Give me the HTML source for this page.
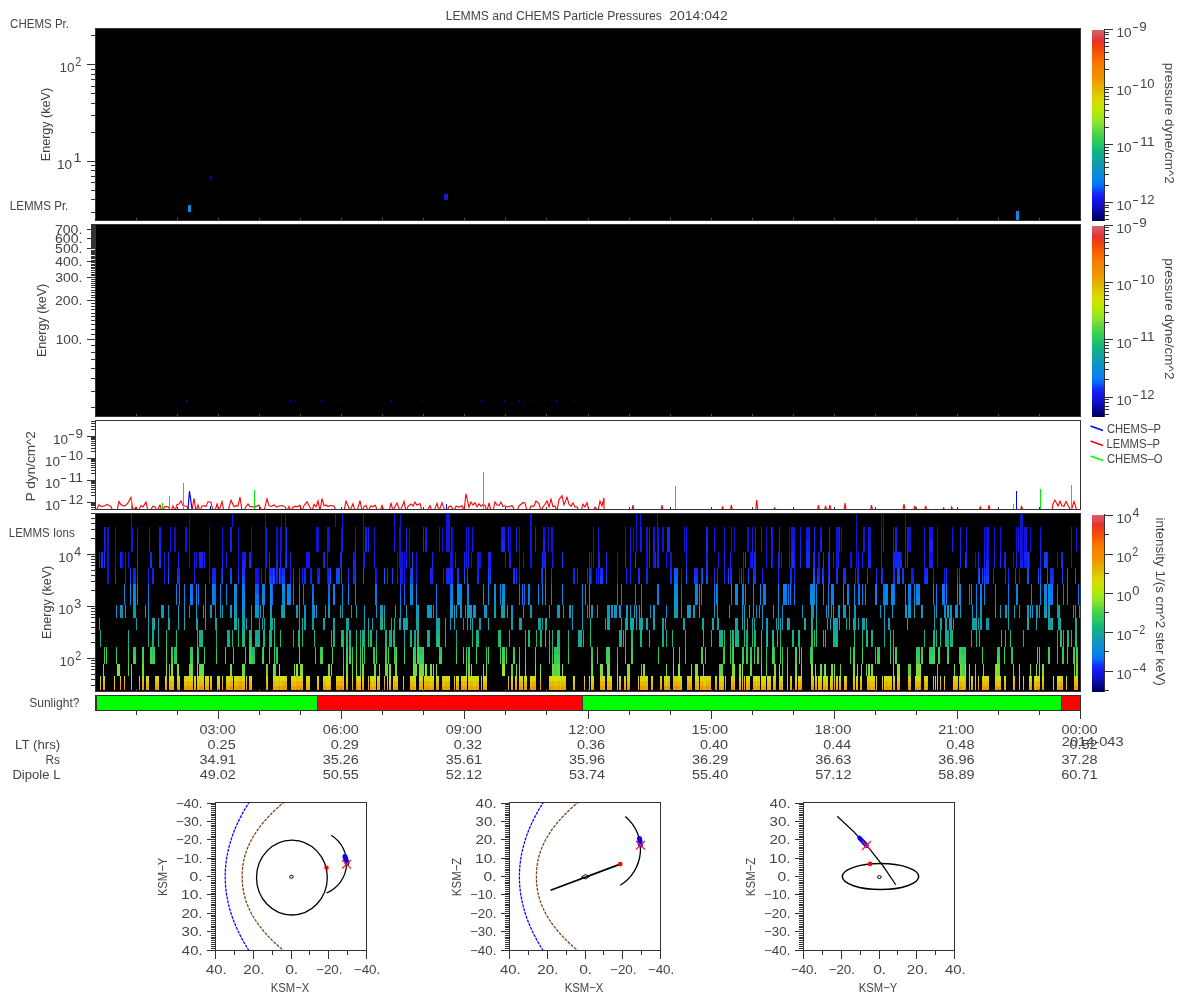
<!DOCTYPE html>
<html><head><meta charset="utf-8"><style>
html,body{margin:0;padding:0;background:#fff;width:1200px;height:1000px;overflow:hidden}
svg{display:block;will-change:transform}
text{font-family:"Liberation Sans",sans-serif}
</style></head><body>
<svg width="1200" height="1000" viewBox="0 0 1200 1000" shape-rendering="crispEdges">
<defs><linearGradient id="cmap" x1="0" y1="0" x2="0" y2="1"><stop offset="0.0000" stop-color="#d8606a"/><stop offset="0.0316" stop-color="#e04850"/><stop offset="0.0553" stop-color="#e83030"/><stop offset="0.0842" stop-color="#f04010"/><stop offset="0.1105" stop-color="#f05000"/><stop offset="0.1368" stop-color="#f86000"/><stop offset="0.1632" stop-color="#f87000"/><stop offset="0.1895" stop-color="#f88000"/><stop offset="0.2447" stop-color="#f09000"/><stop offset="0.2842" stop-color="#e8a800"/><stop offset="0.3237" stop-color="#e0c000"/><stop offset="0.3632" stop-color="#d8d800"/><stop offset="0.3895" stop-color="#d0e000"/><stop offset="0.4289" stop-color="#b8e800"/><stop offset="0.4684" stop-color="#98e828"/><stop offset="0.4947" stop-color="#84e030"/><stop offset="0.5237" stop-color="#60d840"/><stop offset="0.5632" stop-color="#38d050"/><stop offset="0.5947" stop-color="#28c860"/><stop offset="0.6289" stop-color="#10b878"/><stop offset="0.6684" stop-color="#10a898"/><stop offset="0.7079" stop-color="#1098b8"/><stop offset="0.7474" stop-color="#0890d4"/><stop offset="0.7916" stop-color="#0880f0"/><stop offset="0.8189" stop-color="#0868f8"/><stop offset="0.8516" stop-color="#1030f8"/><stop offset="0.8789" stop-color="#1818f0"/><stop offset="0.9147" stop-color="#1010d0"/><stop offset="0.9500" stop-color="#0808a0"/><stop offset="0.9832" stop-color="#000070"/><stop offset="1.0000" stop-color="#000058"/></linearGradient></defs>
<text x="445.70" y="20" font-size="12.5" textLength="216.24" lengthAdjust="spacingAndGlyphs" fill="#444444" >LEMMS and CHEMS Particle Pressures</text>
<text x="669.19" y="20" font-size="12.5" textLength="58.51" lengthAdjust="spacingAndGlyphs" fill="#444444" >2014:042</text>
<text x="10.12" y="28" font-size="12.5" textLength="58.92" lengthAdjust="spacingAndGlyphs" fill="#444444" >CHEMS Pr.</text>
<text x="9.76" y="210" font-size="12.5" textLength="58.59" lengthAdjust="spacingAndGlyphs" fill="#444444" >LEMMS Pr.</text>
<text x="8.75" y="537" font-size="12.5" textLength="65.96" lengthAdjust="spacingAndGlyphs" fill="#444444" >LEMMS Ions</text>
<text x="29.15" y="707" font-size="12.5" textLength="50.30" lengthAdjust="spacingAndGlyphs" fill="#444444" >Sunlight?</text>
<rect x="95" y="28" width="986" height="193" fill="#000"/>
<rect x="95.5" y="28.5" width="985" height="192" fill="none" stroke="#333" stroke-width="1"/>
<rect x="136" y="218" width="1" height="2" fill="#555"/>
<rect x="177" y="218" width="1" height="2" fill="#555"/>
<rect x="218" y="218" width="1" height="2" fill="#555"/>
<rect x="259" y="218" width="1" height="2" fill="#555"/>
<rect x="300" y="218" width="1" height="2" fill="#555"/>
<rect x="341" y="218" width="1" height="2" fill="#555"/>
<rect x="382" y="218" width="1" height="2" fill="#555"/>
<rect x="423" y="218" width="1" height="2" fill="#555"/>
<rect x="464" y="218" width="1" height="2" fill="#555"/>
<rect x="505" y="218" width="1" height="2" fill="#555"/>
<rect x="546" y="218" width="1" height="2" fill="#555"/>
<rect x="588" y="218" width="1" height="2" fill="#555"/>
<rect x="629" y="218" width="1" height="2" fill="#555"/>
<rect x="670" y="218" width="1" height="2" fill="#555"/>
<rect x="711" y="218" width="1" height="2" fill="#555"/>
<rect x="752" y="218" width="1" height="2" fill="#555"/>
<rect x="793" y="218" width="1" height="2" fill="#555"/>
<rect x="834" y="218" width="1" height="2" fill="#555"/>
<rect x="875" y="218" width="1" height="2" fill="#555"/>
<rect x="916" y="218" width="1" height="2" fill="#555"/>
<rect x="957" y="218" width="1" height="2" fill="#555"/>
<rect x="998" y="218" width="1" height="2" fill="#555"/>
<rect x="1039" y="218" width="1" height="2" fill="#555"/>
<rect x="91" y="35" width="4" height="1" fill="#333333"/>
<rect x="87" y="64" width="8" height="1" fill="#333333"/>
<rect x="91" y="69" width="4" height="1" fill="#333333"/>
<rect x="91" y="74" width="4" height="1" fill="#333333"/>
<rect x="91" y="79" width="4" height="1" fill="#333333"/>
<rect x="91" y="86" width="4" height="1" fill="#333333"/>
<rect x="91" y="93" width="4" height="1" fill="#333333"/>
<rect x="91" y="103" width="4" height="1" fill="#333333"/>
<rect x="91" y="115" width="4" height="1" fill="#333333"/>
<rect x="91" y="132" width="4" height="1" fill="#333333"/>
<rect x="87" y="161" width="8" height="1" fill="#333333"/>
<rect x="91" y="165" width="4" height="1" fill="#333333"/>
<rect x="91" y="170" width="4" height="1" fill="#333333"/>
<rect x="91" y="176" width="4" height="1" fill="#333333"/>
<rect x="91" y="182" width="4" height="1" fill="#333333"/>
<rect x="91" y="190" width="4" height="1" fill="#333333"/>
<rect x="91" y="199" width="4" height="1" fill="#333333"/>
<rect x="91" y="212" width="4" height="1" fill="#333333"/>
<text x="59.57" y="72.0" font-size="12.5" textLength="15.06" lengthAdjust="spacingAndGlyphs" fill="#444444" >10</text>
<text x="75.36" y="65.8" font-size="12.5" textLength="5.98" lengthAdjust="spacingAndGlyphs" fill="#444444" >2</text>
<text x="57.07" y="168.6" font-size="12.5" textLength="15.06" lengthAdjust="spacingAndGlyphs" fill="#444444" >10</text>
<text x="73.50" y="162.4" font-size="12.5" textLength="8.00" lengthAdjust="spacingAndGlyphs" fill="#444444" >1</text>
<text transform="translate(49.5,161.23) rotate(-90)" x="0" y="0" font-size="12.5" textLength="73.41" lengthAdjust="spacingAndGlyphs" fill="#444444">Energy (keV)</text>
<rect x="188" y="205" width="3" height="7" fill="#0a8ae8"/>
<rect x="209" y="176" width="3" height="5" fill="#000090"/>
<rect x="444" y="194" width="4" height="6" fill="#1818e0"/>
<rect x="1016" y="211" width="3" height="9" fill="#0a8ae8"/>
<rect x="95" y="224" width="986" height="193" fill="#000"/>
<rect x="95.5" y="224.5" width="985" height="192" fill="none" stroke="#333" stroke-width="1"/>
<rect x="136" y="414" width="1" height="2" fill="#555"/>
<rect x="177" y="414" width="1" height="2" fill="#555"/>
<rect x="218" y="414" width="1" height="2" fill="#555"/>
<rect x="259" y="414" width="1" height="2" fill="#555"/>
<rect x="300" y="414" width="1" height="2" fill="#555"/>
<rect x="341" y="414" width="1" height="2" fill="#555"/>
<rect x="382" y="414" width="1" height="2" fill="#555"/>
<rect x="423" y="414" width="1" height="2" fill="#555"/>
<rect x="464" y="414" width="1" height="2" fill="#555"/>
<rect x="505" y="414" width="1" height="2" fill="#555"/>
<rect x="546" y="414" width="1" height="2" fill="#555"/>
<rect x="588" y="414" width="1" height="2" fill="#555"/>
<rect x="629" y="414" width="1" height="2" fill="#555"/>
<rect x="670" y="414" width="1" height="2" fill="#555"/>
<rect x="711" y="414" width="1" height="2" fill="#555"/>
<rect x="752" y="414" width="1" height="2" fill="#555"/>
<rect x="793" y="414" width="1" height="2" fill="#555"/>
<rect x="834" y="414" width="1" height="2" fill="#555"/>
<rect x="875" y="414" width="1" height="2" fill="#555"/>
<rect x="916" y="414" width="1" height="2" fill="#555"/>
<rect x="957" y="414" width="1" height="2" fill="#555"/>
<rect x="998" y="414" width="1" height="2" fill="#555"/>
<rect x="1039" y="414" width="1" height="2" fill="#555"/>
<rect x="91" y="407" width="4" height="1" fill="#333333"/>
<rect x="91" y="391" width="4" height="1" fill="#333333"/>
<rect x="91" y="378" width="4" height="1" fill="#333333"/>
<rect x="91" y="368" width="4" height="1" fill="#333333"/>
<rect x="91" y="359" width="4" height="1" fill="#333333"/>
<rect x="91" y="352" width="4" height="1" fill="#333333"/>
<rect x="91" y="345" width="4" height="1" fill="#333333"/>
<rect x="87" y="339" width="8" height="1" fill="#333333"/>
<rect x="91" y="334" width="4" height="1" fill="#333333"/>
<rect x="91" y="329" width="4" height="1" fill="#333333"/>
<rect x="91" y="324" width="4" height="1" fill="#333333"/>
<rect x="91" y="320" width="4" height="1" fill="#333333"/>
<rect x="91" y="316" width="4" height="1" fill="#333333"/>
<rect x="91" y="313" width="4" height="1" fill="#333333"/>
<rect x="91" y="309" width="4" height="1" fill="#333333"/>
<rect x="91" y="306" width="4" height="1" fill="#333333"/>
<rect x="91" y="303" width="4" height="1" fill="#333333"/>
<rect x="87" y="300" width="8" height="1" fill="#333333"/>
<rect x="91" y="297" width="4" height="1" fill="#333333"/>
<rect x="91" y="295" width="4" height="1" fill="#333333"/>
<rect x="91" y="292" width="4" height="1" fill="#333333"/>
<rect x="91" y="290" width="4" height="1" fill="#333333"/>
<rect x="91" y="287" width="4" height="1" fill="#333333"/>
<rect x="91" y="285" width="4" height="1" fill="#333333"/>
<rect x="91" y="283" width="4" height="1" fill="#333333"/>
<rect x="91" y="281" width="4" height="1" fill="#333333"/>
<rect x="91" y="279" width="4" height="1" fill="#333333"/>
<rect x="87" y="277" width="8" height="1" fill="#333333"/>
<rect x="91" y="275" width="4" height="1" fill="#333333"/>
<rect x="91" y="274" width="4" height="1" fill="#333333"/>
<rect x="91" y="272" width="4" height="1" fill="#333333"/>
<rect x="91" y="270" width="4" height="1" fill="#333333"/>
<rect x="91" y="268" width="4" height="1" fill="#333333"/>
<rect x="91" y="267" width="4" height="1" fill="#333333"/>
<rect x="91" y="265" width="4" height="1" fill="#333333"/>
<rect x="91" y="264" width="4" height="1" fill="#333333"/>
<rect x="91" y="262" width="4" height="1" fill="#333333"/>
<rect x="87" y="261" width="8" height="1" fill="#333333"/>
<rect x="91" y="260" width="4" height="1" fill="#333333"/>
<rect x="91" y="258" width="4" height="1" fill="#333333"/>
<rect x="91" y="257" width="4" height="1" fill="#333333"/>
<rect x="91" y="256" width="4" height="1" fill="#333333"/>
<rect x="91" y="254" width="4" height="1" fill="#333333"/>
<rect x="91" y="253" width="4" height="1" fill="#333333"/>
<rect x="91" y="252" width="4" height="1" fill="#333333"/>
<rect x="91" y="251" width="4" height="1" fill="#333333"/>
<rect x="91" y="250" width="4" height="1" fill="#333333"/>
<rect x="87" y="248" width="8" height="1" fill="#333333"/>
<rect x="91" y="247" width="4" height="1" fill="#333333"/>
<rect x="91" y="246" width="4" height="1" fill="#333333"/>
<rect x="91" y="245" width="4" height="1" fill="#333333"/>
<rect x="91" y="244" width="4" height="1" fill="#333333"/>
<rect x="91" y="243" width="4" height="1" fill="#333333"/>
<rect x="91" y="242" width="4" height="1" fill="#333333"/>
<rect x="91" y="241" width="4" height="1" fill="#333333"/>
<rect x="91" y="240" width="4" height="1" fill="#333333"/>
<rect x="91" y="239" width="4" height="1" fill="#333333"/>
<rect x="87" y="238" width="8" height="1" fill="#333333"/>
<rect x="91" y="237" width="4" height="1" fill="#333333"/>
<rect x="91" y="236" width="4" height="1" fill="#333333"/>
<rect x="91" y="235" width="4" height="1" fill="#333333"/>
<rect x="91" y="235" width="4" height="1" fill="#333333"/>
<rect x="91" y="234" width="4" height="1" fill="#333333"/>
<rect x="91" y="233" width="4" height="1" fill="#333333"/>
<rect x="91" y="232" width="4" height="1" fill="#333333"/>
<rect x="91" y="231" width="4" height="1" fill="#333333"/>
<rect x="91" y="230" width="4" height="1" fill="#333333"/>
<rect x="87" y="229" width="8" height="1" fill="#333333"/>
<rect x="91" y="229" width="4" height="1" fill="#333333"/>
<rect x="91" y="228" width="4" height="1" fill="#333333"/>
<rect x="91" y="227" width="4" height="1" fill="#333333"/>
<rect x="91" y="226" width="4" height="1" fill="#333333"/>
<rect x="91" y="226" width="4" height="1" fill="#333333"/>
<rect x="91" y="225" width="4" height="1" fill="#333333"/>
<rect x="91" y="224" width="4" height="1" fill="#333333"/>
<text x="54.98" y="234.28" font-size="12.5" textLength="27.41" lengthAdjust="spacingAndGlyphs" fill="#444444" >700.</text>
<text x="54.99" y="242.95" font-size="12.5" textLength="27.40" lengthAdjust="spacingAndGlyphs" fill="#444444" >600.</text>
<text x="55.14" y="253.21" font-size="12.5" textLength="27.24" lengthAdjust="spacingAndGlyphs" fill="#444444" >500.</text>
<text x="55.38" y="265.77" font-size="12.5" textLength="26.98" lengthAdjust="spacingAndGlyphs" fill="#444444" >400.</text>
<text x="55.17" y="281.97" font-size="12.5" textLength="27.21" lengthAdjust="spacingAndGlyphs" fill="#444444" >300.</text>
<text x="54.99" y="304.79" font-size="12.5" textLength="27.39" lengthAdjust="spacingAndGlyphs" fill="#444444" >200.</text>
<text x="55.76" y="343.8" font-size="12.5" textLength="26.59" lengthAdjust="spacingAndGlyphs" fill="#444444" >100.</text>
<text transform="translate(46,357.03) rotate(-90)" x="0" y="0" font-size="12.5" textLength="73.31" lengthAdjust="spacingAndGlyphs" fill="#444444">Energy (keV)</text>
<rect x="177" y="400" width="1" height="2" fill="#0000a0"/>
<rect x="186" y="400" width="1" height="2" fill="#0000a0"/>
<rect x="290" y="400" width="1" height="2" fill="#0000a0"/>
<rect x="294" y="400" width="1" height="2" fill="#0000a0"/>
<rect x="320" y="400" width="1" height="2" fill="#0000a0"/>
<rect x="341" y="400" width="1" height="2" fill="#0000a0"/>
<rect x="390" y="400" width="1" height="2" fill="#0000a0"/>
<rect x="423" y="400" width="1" height="2" fill="#0000a0"/>
<rect x="480" y="400" width="1" height="2" fill="#0000a0"/>
<rect x="504" y="400" width="1" height="2" fill="#0000a0"/>
<rect x="518" y="400" width="1" height="2" fill="#0000a0"/>
<rect x="523" y="400" width="1" height="2" fill="#0000a0"/>
<rect x="531" y="400" width="1" height="2" fill="#0000a0"/>
<rect x="545" y="400" width="1" height="2" fill="#0000a0"/>
<rect x="556" y="400" width="1" height="2" fill="#0000a0"/>
<rect x="575" y="400" width="1" height="2" fill="#0000a0"/>
<rect x="95.5" y="420.5" width="985" height="89" fill="none" stroke="#333333" stroke-width="1"/>
<rect x="87" y="436" width="8" height="1" fill="#333333"/>
<rect x="91" y="429" width="4" height="1" fill="#333333"/>
<rect x="91" y="426" width="4" height="1" fill="#333333"/>
<rect x="91" y="423" width="4" height="1" fill="#333333"/>
<rect x="91" y="421" width="4" height="1" fill="#333333"/>
<rect x="87" y="458" width="8" height="1" fill="#333333"/>
<rect x="91" y="451" width="4" height="1" fill="#333333"/>
<rect x="91" y="448" width="4" height="1" fill="#333333"/>
<rect x="91" y="445" width="4" height="1" fill="#333333"/>
<rect x="91" y="443" width="4" height="1" fill="#333333"/>
<rect x="91" y="441" width="4" height="1" fill="#333333"/>
<rect x="91" y="439" width="4" height="1" fill="#333333"/>
<rect x="91" y="438" width="4" height="1" fill="#333333"/>
<rect x="91" y="437" width="4" height="1" fill="#333333"/>
<rect x="87" y="480" width="8" height="1" fill="#333333"/>
<rect x="91" y="473" width="4" height="1" fill="#333333"/>
<rect x="91" y="470" width="4" height="1" fill="#333333"/>
<rect x="91" y="467" width="4" height="1" fill="#333333"/>
<rect x="91" y="465" width="4" height="1" fill="#333333"/>
<rect x="91" y="463" width="4" height="1" fill="#333333"/>
<rect x="91" y="461" width="4" height="1" fill="#333333"/>
<rect x="91" y="460" width="4" height="1" fill="#333333"/>
<rect x="91" y="459" width="4" height="1" fill="#333333"/>
<rect x="87" y="502" width="8" height="1" fill="#333333"/>
<rect x="91" y="495" width="4" height="1" fill="#333333"/>
<rect x="91" y="492" width="4" height="1" fill="#333333"/>
<rect x="91" y="489" width="4" height="1" fill="#333333"/>
<rect x="91" y="487" width="4" height="1" fill="#333333"/>
<rect x="91" y="485" width="4" height="1" fill="#333333"/>
<rect x="91" y="483" width="4" height="1" fill="#333333"/>
<rect x="91" y="482" width="4" height="1" fill="#333333"/>
<rect x="91" y="481" width="4" height="1" fill="#333333"/>
<rect x="91" y="509" width="4" height="1" fill="#333333"/>
<rect x="91" y="507" width="4" height="1" fill="#333333"/>
<rect x="91" y="505" width="4" height="1" fill="#333333"/>
<rect x="91" y="504" width="4" height="1" fill="#333333"/>
<rect x="91" y="503" width="4" height="1" fill="#333333"/>
<rect x="136" y="507" width="1" height="2" fill="#333333"/>
<rect x="177" y="507" width="1" height="2" fill="#333333"/>
<rect x="218" y="507" width="1" height="2" fill="#333333"/>
<rect x="259" y="507" width="1" height="2" fill="#333333"/>
<rect x="300" y="507" width="1" height="2" fill="#333333"/>
<rect x="341" y="507" width="1" height="2" fill="#333333"/>
<rect x="382" y="507" width="1" height="2" fill="#333333"/>
<rect x="423" y="507" width="1" height="2" fill="#333333"/>
<rect x="464" y="507" width="1" height="2" fill="#333333"/>
<rect x="505" y="507" width="1" height="2" fill="#333333"/>
<rect x="546" y="507" width="1" height="2" fill="#333333"/>
<rect x="588" y="507" width="1" height="2" fill="#333333"/>
<rect x="629" y="507" width="1" height="2" fill="#333333"/>
<rect x="670" y="507" width="1" height="2" fill="#333333"/>
<rect x="711" y="507" width="1" height="2" fill="#333333"/>
<rect x="752" y="507" width="1" height="2" fill="#333333"/>
<rect x="793" y="507" width="1" height="2" fill="#333333"/>
<rect x="834" y="507" width="1" height="2" fill="#333333"/>
<rect x="875" y="507" width="1" height="2" fill="#333333"/>
<rect x="916" y="507" width="1" height="2" fill="#333333"/>
<rect x="957" y="507" width="1" height="2" fill="#333333"/>
<rect x="998" y="507" width="1" height="2" fill="#333333"/>
<rect x="1039" y="507" width="1" height="2" fill="#333333"/>
<clipPath id="p3clip"><rect x="96" y="421" width="984" height="88"/></clipPath>
<path d="M96 511.0 L99 504.7 L102 506.7 L105 505.6 L107 504.3 L109 505.4 L111 506.7 L113 511.0 L115 511.0 L117 511.0 L119 501.4 L121 504.8 L124 506.2 L126 505.1 L128 502.9 L131 497.5 L133 511.0 L136 507.0 L138 511.0 L141 505.6 L143 506.9 L146 502.0 L148 511.0 L150 511.0 L153 506.2 L155 506.9 L157 511.0 L160 505.0 L162 511.0 L165 506.6 L168 506.7 L171 511.0 L173 506.0 L175 511.0 L177 504.4 L179 504.1 L181 500.9 L183 505.6 L185 506.0 L187 506.6 L190 511.0 L192 511.0 L194 498.3 L196 511.0 L198 505.0 L200 511.0 L202 506.0 L204 505.7 L206 506.6 L208 501.8 L211 502.2 L213 511.0 L215 511.0 L217 504.0 L219 511.0 L222 501.7 L224 511.0 L226 511.0 L228 511.0 L231 500.2 L234 506.8 L236 505.7 L238 506.1 L240 497.2 L242 511.0 L244 511.0 L246 506.7 L248 503.9 L250 506.9 L252 506.5 L254 507.2 L257 505.9 L259 505.0 L262 511.0 L264 511.0 L267 498.9 L269 505.7 L271 506.5 L274 505.0 L277 507.2 L279 506.0 L282 505.5 L285 506.8 L287 511.0 L289 506.3 L291 511.0 L293 507.0 L296 506.4 L298 506.7 L300 505.2 L302 511.0 L304 505.5 L307 501.8 L309 505.6 L312 511.0 L314 504.5 L316 506.9 L318 500.9 L320 511.0 L322 498.5 L324 505.7 L326 504.9 L328 506.5 L330 505.6 L332 505.8 L334 506.1 L336 511.0 L338 511.0 L341 511.0 L344 511.0 L346 501.3 L348 505.5 L350 511.0 L353 503.6 L355 511.0 L357 511.0 L360 500.7 L362 511.0 L364 506.9 L366 505.4 L368 511.0 L371 505.8 L373 506.9 L375 505.2 L378 511.0 L380 511.0 L382 505.3 L384 511.0 L387 511.0 L389 511.0 L391 503.0 L393 511.0 L395 506.6 L397 503.0 L400 511.0 L402 507.1 L404 501.4 L406 511.0 L408 506.5 L411 504.1 L413 506.1 L415 502.2 L417 505.3 L420 503.5 L422 511.0 L425 511.0 L427 511.0 L430 505.5 L432 511.0 L434 511.0 L437 503.3 L439 511.0 L442 502.6 L445 511.0 L447 511.0 L449 506.4 L451 506.1 L454 511.0 L456 506.0 L458 506.9 L460 506.9 L462 505.6 L464 511.0 L466 493.8 L469 507.2 L471 501.9 L473 505.1 L475 502.8 L477 506.8 L479 503.8 L481 506.4 L483 504.4 L485 505.4 L487 511.0 L489 503.0 L491 511.0 L493 511.0 L495 501.9 L497 505.1 L499 505.3 L501 502.2 L503 506.6 L505 505.8 L507 507.0 L510 506.4 L512 505.4 L515 511.0 L517 511.0 L519 505.9 L521 504.3 L523 502.5 L525 503.2 L527 511.0 L529 511.0 L531 506.1 L534 506.1 L536 501.0 L539 503.5 L541 511.0 L543 507.0 L545 504.2 L547 500.9 L549 506.8 L551 499.1 L553 506.7 L555 506.0 L557 511.0 L559 499.6 L562 495.7 L564 504.8 L567 497.2 L569 504.2 L571 506.3 L573 502.9 L575 507.0 L577 506.9 L579 511.0 L581 511.0 L583 504.2 L585 506.9 L587 502.7 L589 511.0 L591 511.0 L593 511.0 L595 507.1 L598 511.0 L600 501.1 L602 505.9 L604 498.0 L604 511.0 M1052 511.0 L1053 503.9 L1055 500.1 L1058 506.0 L1060 501.2 L1062 505.7 L1064 506.3 L1066 501.6 L1068 505.3 L1071 511.0 L1074 501.6 L1077 511.0 M632.0 510 L633.0 505 L634.0 510M661.0 510 L662.0 505 L663.0 510M721.6 510 L722.6 507 L723.6 510M730.4 510 L731.4 505 L732.4 510M755.7 510 L756.7 500 L757.7 510M773.6 510 L774.6 508 L775.6 510M817.5 510 L818.5 505 L819.5 510M824.6 510 L825.6 506 L826.6 510M828.9 510 L829.9 505 L830.9 510M844.1 510 L845.1 503 L846.1 510M870.5 510 L871.5 505 L872.5 510M903.0 510 L904.0 504 L905.0 510M913.7 510 L914.7 506 L915.7 510M924.7 510 L925.7 506 L926.7 510M942.6 510 L943.6 508 L944.6 510M950.7 510 L951.7 507 L952.7 510M979.3 510 L980.3 507 L981.3 510M988.1 510 L989.1 505 L990.1 510M1020.6 510 L1021.6 506 L1022.6 510" fill="none" stroke="#ff0000" stroke-width="1.1" clip-path="url(#p3clip)" shape-rendering="auto" stroke-linejoin="miter"/>
<rect x="131" y="498" width="1" height="11" fill="#00ee00"/>
<rect x="162" y="503" width="1" height="6" fill="#00ee00"/>
<rect x="169" y="496" width="1" height="13" fill="#00ee00"/>
<rect x="183" y="483" width="1" height="26" fill="#00ee00"/>
<rect x="254" y="490" width="1" height="19" fill="#00ee00"/>
<rect x="483" y="472" width="1" height="37" fill="#00ee00"/>
<rect x="675" y="486" width="1" height="23" fill="#00ee00"/>
<rect x="1013" y="504" width="1" height="5" fill="#00ee00"/>
<rect x="1040" y="489" width="1" height="20" fill="#00ee00"/>
<rect x="1071" y="485" width="1" height="24" fill="#00ee00"/>
<path d="M188 509 L189.5 491 L192 509" fill="none" stroke="#0000ff" stroke-width="1.2" shape-rendering="auto"/>
<rect x="210" y="506" width="1" height="3" fill="#0000ff"/>
<rect x="446" y="504" width="1" height="5" fill="#0000ff"/>
<rect x="1016" y="491" width="1" height="18" fill="#0000ff"/>
<path d="M1090.5 426 L1103 430.5" stroke="#0000ff" stroke-width="1.5" shape-rendering="auto"/>
<text x="1106.93" y="433" font-size="12.5" textLength="54.16" lengthAdjust="spacingAndGlyphs" fill="#444444" >CHEMS–P</text>
<path d="M1090.5 441 L1103 445.5" stroke="#ff0000" stroke-width="1.5" shape-rendering="auto"/>
<text x="1106.58" y="448" font-size="12.5" textLength="53.51" lengthAdjust="spacingAndGlyphs" fill="#444444" >LEMMS–P</text>
<path d="M1090.5 456 L1103 460.5" stroke="#00ff00" stroke-width="1.5" shape-rendering="auto"/>
<text x="1106.93" y="463" font-size="12.5" textLength="55.61" lengthAdjust="spacingAndGlyphs" fill="#444444" >CHEMS–O</text>
<text x="52.97" y="444.1" font-size="12.5" textLength="15.06" lengthAdjust="spacingAndGlyphs" fill="#444444" >10</text>
<rect x="69.40" y="434.10" width="5" height="1" fill="#444444"/>
<text x="75.57" y="437.9" font-size="12.5" textLength="7.46" lengthAdjust="spacingAndGlyphs" fill="#444444" >9</text>
<text x="44.97" y="466.1" font-size="12.5" textLength="15.06" lengthAdjust="spacingAndGlyphs" fill="#444444" >10</text>
<rect x="61.40" y="456.10" width="5" height="1" fill="#444444"/>
<text x="68.41" y="459.9" font-size="12.5" textLength="14.50" lengthAdjust="spacingAndGlyphs" fill="#444444" >10</text>
<text x="44.97" y="488.1" font-size="12.5" textLength="15.06" lengthAdjust="spacingAndGlyphs" fill="#444444" >10</text>
<rect x="61.40" y="478.10" width="5" height="1" fill="#444444"/>
<text x="68.40" y="481.9" font-size="12.5" textLength="14.65" lengthAdjust="spacingAndGlyphs" fill="#444444" >11</text>
<text x="44.97" y="510.1" font-size="12.5" textLength="15.06" lengthAdjust="spacingAndGlyphs" fill="#444444" >10</text>
<rect x="61.40" y="500.10" width="5" height="1" fill="#444444"/>
<text x="68.40" y="503.9" font-size="12.5" textLength="14.67" lengthAdjust="spacingAndGlyphs" fill="#444444" >12</text>
<text transform="translate(35,501.31) rotate(-90)" x="0" y="0" font-size="12.5" textLength="70.19" lengthAdjust="spacingAndGlyphs" fill="#444444">P dyn/cm^2</text>
<rect x="95" y="513" width="986" height="179" fill="#000"/>
<rect x="95.5" y="513.5" width="985" height="178" fill="none" stroke="#333" stroke-width="1"/>
<path fill="#121ef6" d="M99 552h1v8h-1zM104 539h1v13h-1zM125 568h1v8h-1zM133 568h3v8h-3zM137 539h1v13h-1zM148 576h1v8h-1zM149 539h1v13h-1zM152 568h1v8h-1zM153 568h1v8h-1zM159 527h2v12h-2zM164 576h1v8h-1zM178 568h1v8h-1zM179 568h1v8h-1zM194 560h1v8h-1zM194 576h1v8h-1zM199 560h4v8h-4zM204 552h1v8h-1zM209 576h1v8h-1zM212 568h3v8h-3zM215 568h1v8h-1zM221 576h1v8h-1zM222 552h1v8h-1zM230 527h2v12h-2zM245 560h1v8h-1zM249 552h2v8h-2zM261 576h1v8h-1zM265 576h1v8h-1zM266 527h1v12h-1zM266 539h1v13h-1zM266 552h1v8h-1zM266 560h1v8h-1zM269 552h1v8h-1zM272 568h1v8h-1zM276 576h2v8h-2zM280 552h1v8h-1zM280 568h1v8h-1zM281 576h1v8h-1zM285 552h1v8h-1zM290 576h1v8h-1zM302 568h1v8h-1zM304 568h2v8h-2zM310 576h1v8h-1zM311 568h1v8h-1zM317 576h2v8h-2zM319 568h1v8h-1zM323 552h2v8h-2zM328 568h2v8h-2zM341 539h1v13h-1zM341 552h1v8h-1zM353 568h2v8h-2zM355 560h1v8h-1zM363 560h1v8h-1zM365 527h2v12h-2zM368 527h1v12h-1zM374 552h1v8h-1zM374 560h1v8h-1zM375 568h1v8h-1zM394 539h1v13h-1zM397 576h1v8h-1zM400 576h1v8h-1zM406 539h1v13h-1zM423 527h1v12h-1zM425 539h2v13h-2zM430 576h2v8h-2zM432 552h1v8h-1zM432 568h1v8h-1zM443 576h1v8h-1zM450 576h1v8h-1zM464 552h1v8h-1zM466 552h1v8h-1zM468 552h1v8h-1zM472 539h1v13h-1zM477 568h2v8h-2zM488 552h1v8h-1zM488 560h1v8h-1zM489 560h2v8h-2zM501 539h1v13h-1zM502 527h3v12h-3zM505 560h1v8h-1zM508 527h1v12h-1zM508 539h1v13h-1zM509 560h1v8h-1zM516 527h1v12h-1zM519 576h1v8h-1zM535 527h1v12h-1zM535 539h1v13h-1zM541 576h1v8h-1zM543 560h2v8h-2zM573 568h2v8h-2zM577 568h1v8h-1zM587 576h1v8h-1zM591 576h1v8h-1zM596 576h1v8h-1zM598 576h1v8h-1zM599 552h1v8h-1zM617 576h1v8h-1zM626 568h1v8h-1zM630 560h1v8h-1zM630 568h1v8h-1zM640 527h1v12h-1zM640 539h1v13h-1zM646 568h2v8h-2zM649 527h1v12h-1zM649 552h1v8h-1zM655 552h1v8h-1zM657 560h1v8h-1zM670 568h2v8h-2zM681 576h1v8h-1zM686 539h1v13h-1zM686 552h1v8h-1zM706 527h2v12h-2zM706 552h2v8h-2zM714 568h1v8h-1zM724 552h1v8h-1zM724 568h1v8h-1zM730 552h1v8h-1zM730 560h1v8h-1zM730 568h1v8h-1zM739 576h1v8h-1zM743 560h1v8h-1zM743 568h1v8h-1zM752 539h1v13h-1zM752 552h1v8h-1zM752 560h1v8h-1zM755 539h1v13h-1zM755 560h1v8h-1zM761 527h1v12h-1zM761 539h1v13h-1zM762 576h1v8h-1zM771 539h1v13h-1zM771 552h1v8h-1zM778 552h1v8h-1zM778 568h1v8h-1zM779 527h1v12h-1zM779 552h1v8h-1zM779 560h1v8h-1zM789 552h1v8h-1zM789 560h1v8h-1zM791 560h1v8h-1zM791 568h1v8h-1zM792 539h2v13h-2zM794 560h1v8h-1zM794 576h1v8h-1zM800 539h1v13h-1zM806 539h4v13h-4zM813 560h1v8h-1zM814 539h1v13h-1zM818 568h2v8h-2zM828 568h1v8h-1zM833 560h1v8h-1zM839 539h1v13h-1zM851 560h1v8h-1zM855 568h1v8h-1zM857 568h1v8h-1zM858 568h1v8h-1zM862 552h1v8h-1zM862 560h1v8h-1zM868 539h2v13h-2zM868 552h2v8h-2zM881 539h1v13h-1zM881 552h1v8h-1zM882 568h1v8h-1zM893 539h1v13h-1zM893 552h1v8h-1zM893 568h1v8h-1zM894 560h1v8h-1zM895 527h2v12h-2zM895 552h2v8h-2zM905 539h1v13h-1zM905 552h1v8h-1zM907 527h1v12h-1zM911 576h3v8h-3zM924 552h1v8h-1zM924 560h1v8h-1zM924 576h1v8h-1zM929 560h4v8h-4zM933 568h1v8h-1zM944 576h1v8h-1zM960 539h1v13h-1zM966 552h1v8h-1zM978 552h1v8h-1zM984 552h1v8h-1zM984 560h1v8h-1zM985 568h1v8h-1zM994 560h1v8h-1zM1005 560h1v8h-1zM1008 568h1v8h-1zM1016 560h1v8h-1zM1019 576h1v8h-1zM1020 560h3v8h-3zM1024 560h3v8h-3zM1061 552h1v8h-1zM1071 539h1v13h-1zM1071 560h1v8h-1z"/>
<path fill="#122af6" d="M99 560h1v8h-1zM101 552h2v8h-2zM104 552h1v8h-1zM115 568h1v8h-1zM120 552h1v8h-1zM120 560h1v8h-1zM125 576h1v8h-1zM133 576h3v8h-3zM137 552h1v8h-1zM137 568h1v8h-1zM150 552h2v8h-2zM152 576h1v8h-1zM153 576h1v8h-1zM159 539h2v13h-2zM159 552h2v8h-2zM168 552h1v8h-1zM168 560h1v8h-1zM177 568h1v8h-1zM178 576h1v8h-1zM179 576h1v8h-1zM204 560h1v8h-1zM212 576h3v8h-3zM215 576h1v8h-1zM222 560h1v8h-1zM230 539h2v13h-2zM238 568h1v8h-1zM249 560h2v8h-2zM269 560h1v8h-1zM269 568h1v8h-1zM270 568h2v8h-2zM272 576h1v8h-1zM274 568h1v8h-1zM280 560h1v8h-1zM280 576h1v8h-1zM282 568h3v8h-3zM285 560h1v8h-1zM286 527h1v12h-1zM286 539h1v13h-1zM286 552h1v8h-1zM293 568h1v8h-1zM299 568h1v8h-1zM302 576h1v8h-1zM304 576h2v8h-2zM311 576h1v8h-1zM319 576h1v8h-1zM323 560h2v8h-2zM328 576h2v8h-2zM340 552h1v8h-1zM340 560h1v8h-1zM341 560h1v8h-1zM348 568h1v8h-1zM353 576h2v8h-2zM365 539h2v13h-2zM368 539h1v13h-1zM375 576h1v8h-1zM387 568h1v8h-1zM423 539h1v13h-1zM432 560h1v8h-1zM432 576h1v8h-1zM446 576h4v8h-4zM451 568h2v8h-2zM451 576h2v8h-2zM457 568h2v8h-2zM464 560h1v8h-1zM466 560h1v8h-1zM468 560h1v8h-1zM477 576h2v8h-2zM489 568h2v8h-2zM502 539h3v13h-3zM513 568h2v8h-2zM516 539h1v13h-1zM516 568h1v8h-1zM542 552h1v8h-1zM545 552h1v8h-1zM551 568h1v8h-1zM573 576h2v8h-2zM577 576h1v8h-1zM589 552h1v8h-1zM589 560h1v8h-1zM589 568h1v8h-1zM599 560h1v8h-1zM600 568h3v8h-3zM606 552h1v8h-1zM606 560h1v8h-1zM606 568h1v8h-1zM625 552h1v8h-1zM625 560h1v8h-1zM626 576h1v8h-1zM630 576h1v8h-1zM638 576h1v8h-1zM639 568h1v8h-1zM646 576h2v8h-2zM649 539h1v13h-1zM649 560h1v8h-1zM655 560h1v8h-1zM658 552h1v8h-1zM658 560h1v8h-1zM667 527h3v12h-3zM667 539h3v13h-3zM670 576h2v8h-2zM686 560h1v8h-1zM694 568h1v8h-1zM695 568h3v8h-3zM701 568h1v8h-1zM706 539h2v13h-2zM706 560h2v8h-2zM714 576h1v8h-1zM717 568h1v8h-1zM724 560h1v8h-1zM724 576h1v8h-1zM730 576h1v8h-1zM731 568h1v8h-1zM743 576h1v8h-1zM753 568h1v8h-1zM754 552h1v8h-1zM754 568h1v8h-1zM755 568h1v8h-1zM771 560h1v8h-1zM778 560h1v8h-1zM778 576h1v8h-1zM779 539h1v13h-1zM790 568h1v8h-1zM791 576h1v8h-1zM792 552h2v8h-2zM800 552h1v8h-1zM806 552h4v8h-4zM806 560h4v8h-4zM814 552h1v8h-1zM817 568h1v8h-1zM818 576h2v8h-2zM823 552h1v8h-1zM823 568h1v8h-1zM828 552h1v8h-1zM828 560h1v8h-1zM828 576h1v8h-1zM829 527h1v12h-1zM829 539h1v13h-1zM829 552h1v8h-1zM829 560h1v8h-1zM836 568h2v8h-2zM843 568h1v8h-1zM844 568h2v8h-2zM855 576h1v8h-1zM857 576h1v8h-1zM858 576h1v8h-1zM867 568h1v8h-1zM868 560h2v8h-2zM876 568h1v8h-1zM881 560h1v8h-1zM881 568h1v8h-1zM882 576h1v8h-1zM893 560h1v8h-1zM893 576h1v8h-1zM894 568h1v8h-1zM895 539h2v13h-2zM895 560h2v8h-2zM897 552h3v8h-3zM897 560h3v8h-3zM905 560h1v8h-1zM907 539h1v13h-1zM907 552h1v8h-1zM907 560h1v8h-1zM925 568h2v8h-2zM927 568h1v8h-1zM933 576h1v8h-1zM946 568h1v8h-1zM959 568h1v8h-1zM960 552h1v8h-1zM960 560h1v8h-1zM965 552h1v8h-1zM966 560h1v8h-1zM978 560h1v8h-1zM984 568h1v8h-1zM985 576h1v8h-1zM986 568h3v8h-3zM993 568h1v8h-1zM1000 552h1v8h-1zM1000 560h1v8h-1zM1005 568h1v8h-1zM1008 576h1v8h-1zM1027 552h2v8h-2zM1027 560h2v8h-2zM1040 552h1v8h-1zM1040 560h1v8h-1zM1047 552h1v8h-1zM1050 568h3v8h-3zM1061 560h1v8h-1zM1062 552h1v8h-1z"/>
<path fill="#12a2a2" d="M99 618h1v12h-1zM136 618h1v12h-1zM148 618h1v12h-1zM153 618h1v12h-1zM158 630h1v8h-1zM169 618h1v12h-1zM178 618h1v12h-1zM196 618h1v12h-1zM197 618h1v12h-1zM216 618h1v12h-1zM227 630h3v8h-3zM242 618h3v12h-3zM251 630h1v8h-1zM262 618h1v12h-1zM264 618h1v12h-1zM272 618h1v12h-1zM299 618h1v12h-1zM323 618h2v12h-2zM333 618h2v12h-2zM342 611h1v7h-1zM356 611h1v7h-1zM364 630h1v8h-1zM368 618h1v12h-1zM376 630h1v8h-1zM403 618h1v12h-1zM405 618h1v12h-1zM406 618h1v12h-1zM414 630h2v8h-2zM416 618h1v12h-1zM437 618h2v12h-2zM439 618h1v12h-1zM454 618h1v12h-1zM456 630h1v8h-1zM467 618h1v12h-1zM538 618h1v12h-1zM540 618h1v12h-1zM541 630h1v8h-1zM578 630h3v8h-3zM582 618h1v12h-1zM605 618h1v12h-1zM625 618h1v12h-1zM626 618h1v12h-1zM630 618h1v12h-1zM639 618h1v12h-1zM640 618h1v12h-1zM641 618h1v12h-1zM642 618h1v12h-1zM665 618h1v12h-1zM683 618h1v12h-1zM703 618h1v12h-1zM718 618h1v12h-1zM735 618h3v12h-3zM766 630h1v8h-1zM778 618h1v12h-1zM780 618h1v12h-1zM789 618h1v12h-1zM827 618h1v12h-1zM834 618h1v12h-1zM839 611h1v7h-1zM853 618h1v12h-1zM854 618h1v12h-1zM866 618h1v12h-1zM884 630h1v8h-1zM914 611h1v7h-1zM934 618h1v12h-1zM940 618h1v12h-1zM941 618h1v12h-1zM945 618h1v12h-1zM947 630h2v8h-2zM949 618h1v12h-1zM957 611h1v7h-1zM978 618h1v12h-1zM1008 618h1v12h-1zM1048 618h2v12h-2zM1050 618h3v12h-3zM1058 618h2v12h-2z"/>
<path fill="#12ae96" d="M100 630h1v8h-1zM128 630h1v8h-1zM148 630h1v8h-1zM153 630h1v8h-1zM154 618h1v12h-1zM168 618h1v12h-1zM184 618h1v12h-1zM197 630h1v8h-1zM216 630h1v8h-1zM227 638h3v9h-3zM234 618h3v12h-3zM251 638h1v9h-1zM264 630h1v8h-1zM270 618h2v12h-2zM274 618h1v12h-1zM293 630h1v8h-1zM302 618h1v12h-1zM349 630h2v8h-2zM360 630h1v8h-1zM380 618h3v12h-3zM384 618h1v12h-1zM393 630h1v8h-1zM404 638h1v9h-1zM427 630h3v8h-3zM436 630h1v8h-1zM488 618h1v12h-1zM545 618h1v12h-1zM546 618h1v12h-1zM552 630h1v8h-1zM568 630h1v8h-1zM590 618h1v12h-1zM619 630h2v8h-2zM623 630h1v8h-1zM627 618h1v12h-1zM631 618h2v12h-2zM641 630h1v8h-1zM685 630h1v8h-1zM702 618h1v12h-1zM712 618h1v12h-1zM719 630h4v8h-4zM744 618h1v12h-1zM747 630h1v8h-1zM754 618h1v12h-1zM766 638h1v9h-1zM772 630h1v8h-1zM798 630h1v8h-1zM804 618h2v12h-2zM811 618h2v12h-2zM816 618h1v12h-1zM833 618h1v12h-1zM834 630h1v8h-1zM871 630h2v8h-2zM884 638h1v9h-1zM907 618h1v12h-1zM924 630h1v8h-1zM936 630h1v8h-1zM946 630h1v8h-1zM976 630h1v8h-1zM1023 630h1v8h-1zM1027 618h2v12h-2zM1060 618h1v12h-1zM1071 630h1v8h-1z"/>
<path fill="#12ae7e" d="M100 638h1v9h-1zM197 638h1v9h-1zM216 638h1v9h-1zM270 630h2v8h-2zM302 630h1v8h-1zM360 638h1v9h-1zM417 630h2v8h-2zM552 638h1v9h-1zM641 638h1v9h-1zM685 638h1v9h-1zM746 630h1v8h-1zM780 630h1v8h-1zM924 638h1v9h-1zM945 630h1v8h-1zM946 638h1v9h-1zM971 630h1v8h-1zM976 638h1v9h-1z"/>
<path fill="#c6de06" d="M100 676h1v5h-1zM195 676h1v5h-1zM198 676h1v5h-1zM218 676h2v5h-2zM326 676h1v5h-1zM327 676h1v5h-1zM343 676h1v5h-1zM372 676h1v5h-1zM375 676h1v5h-1zM414 676h2v5h-2zM469 676h1v5h-1zM474 676h2v5h-2zM591 676h1v5h-1zM617 676h1v5h-1zM666 676h1v5h-1zM681 676h1v5h-1zM698 676h1v5h-1zM704 676h1v5h-1zM747 676h1v5h-1zM759 676h1v5h-1zM762 676h1v5h-1zM826 676h1v5h-1zM830 676h1v5h-1zM856 676h1v5h-1zM935 676h1v5h-1zM985 676h1v5h-1zM1077 676h1v5h-1z"/>
<path fill="#ded206" d="M100 681h1v5h-1zM120 676h1v5h-1zM124 676h1v5h-1zM131 676h1v5h-1zM139 676h1v5h-1zM142 676h2v5h-2zM147 676h1v5h-1zM155 676h3v5h-3zM177 676h1v5h-1zM184 676h1v5h-1zM187 676h2v5h-2zM195 681h1v5h-1zM198 681h1v5h-1zM199 676h4v5h-4zM210 676h2v5h-2zM218 681h2v5h-2zM222 676h1v5h-1zM230 676h2v5h-2zM237 676h1v5h-1zM249 676h2v5h-2zM251 681h1v5h-1zM266 676h1v5h-1zM274 676h1v5h-1zM285 676h1v5h-1zM286 676h1v5h-1zM291 676h2v5h-2zM294 676h1v5h-1zM298 676h1v5h-1zM299 676h1v5h-1zM300 676h2v5h-2zM326 681h1v5h-1zM327 681h1v5h-1zM328 681h2v5h-2zM330 676h1v5h-1zM336 676h4v5h-4zM340 676h1v5h-1zM343 681h1v5h-1zM346 676h2v5h-2zM362 676h1v5h-1zM363 676h1v5h-1zM368 676h1v5h-1zM372 681h1v5h-1zM375 681h1v5h-1zM384 676h1v5h-1zM389 681h2v5h-2zM393 681h1v5h-1zM394 676h1v5h-1zM396 676h1v5h-1zM412 676h1v5h-1zM414 681h2v5h-2zM425 676h2v5h-2zM427 676h3v5h-3zM437 676h2v5h-2zM442 676h1v5h-1zM445 676h1v5h-1zM454 676h1v5h-1zM462 676h1v5h-1zM469 681h1v5h-1zM474 681h2v5h-2zM481 676h1v5h-1zM483 676h1v5h-1zM508 676h1v5h-1zM515 676h1v5h-1zM516 676h1v5h-1zM520 676h2v5h-2zM522 681h1v5h-1zM532 676h3v5h-3zM535 676h1v5h-1zM540 676h1v5h-1zM560 681h1v5h-1zM591 681h1v5h-1zM600 676h3v5h-3zM617 681h1v5h-1zM628 676h2v5h-2zM638 681h1v5h-1zM640 676h1v5h-1zM642 676h1v5h-1zM660 676h2v5h-2zM666 681h1v5h-1zM667 676h3v5h-3zM673 676h1v5h-1zM679 676h1v5h-1zM681 681h1v5h-1zM687 676h4v5h-4zM698 681h1v5h-1zM700 676h1v5h-1zM702 676h1v5h-1zM704 681h1v5h-1zM706 676h2v5h-2zM708 676h1v5h-1zM715 676h1v5h-1zM716 676h1v5h-1zM742 676h1v5h-1zM747 681h1v5h-1zM748 676h1v5h-1zM754 676h1v5h-1zM756 681h1v5h-1zM757 676h2v5h-2zM759 681h1v5h-1zM762 681h1v5h-1zM773 676h1v5h-1zM775 676h1v5h-1zM779 676h1v5h-1zM799 676h1v5h-1zM800 676h1v5h-1zM801 676h1v5h-1zM811 676h2v5h-2zM813 676h1v5h-1zM825 676h1v5h-1zM826 681h1v5h-1zM830 681h1v5h-1zM839 676h1v5h-1zM846 676h1v5h-1zM856 681h1v5h-1zM868 676h2v5h-2zM884 681h1v5h-1zM885 676h3v5h-3zM893 676h1v5h-1zM897 676h3v5h-3zM908 676h3v5h-3zM920 676h1v5h-1zM933 676h1v5h-1zM935 681h1v5h-1zM937 681h1v5h-1zM954 676h1v5h-1zM957 676h1v5h-1zM959 676h1v5h-1zM960 676h1v5h-1zM971 676h1v5h-1zM978 676h1v5h-1zM982 676h1v5h-1zM984 676h1v5h-1zM985 681h1v5h-1zM996 676h1v5h-1zM1031 676h1v5h-1zM1038 676h1v5h-1zM1039 676h1v5h-1zM1062 676h1v5h-1zM1075 676h1v5h-1zM1077 681h1v5h-1z"/>
<path fill="#eaae06" d="M100 686h1v4h-1zM114 686h1v4h-1zM120 681h1v5h-1zM124 681h1v5h-1zM142 681h2v5h-2zM146 686h1v4h-1zM165 686h1v4h-1zM166 681h1v5h-1zM177 681h1v5h-1zM179 686h1v4h-1zM187 681h2v5h-2zM194 686h1v4h-1zM195 686h1v4h-1zM217 686h1v4h-1zM218 686h2v4h-2zM222 681h1v5h-1zM230 681h2v5h-2zM249 681h2v5h-2zM266 681h1v5h-1zM267 686h1v4h-1zM275 686h1v4h-1zM279 681h1v5h-1zM281 686h1v4h-1zM285 681h1v5h-1zM286 681h1v5h-1zM296 681h2v5h-2zM298 681h1v5h-1zM300 681h2v5h-2zM306 686h4v4h-4zM317 686h2v4h-2zM326 686h1v4h-1zM327 686h1v4h-1zM328 686h2v4h-2zM340 681h1v5h-1zM341 681h1v5h-1zM343 686h1v4h-1zM356 681h1v5h-1zM358 686h2v4h-2zM360 686h1v4h-1zM362 681h1v5h-1zM368 681h1v5h-1zM372 686h1v4h-1zM373 686h1v4h-1zM375 686h1v4h-1zM379 686h1v4h-1zM389 686h2v4h-2zM394 681h1v5h-1zM397 686h1v4h-1zM403 686h1v4h-1zM414 686h2v4h-2zM430 686h2v4h-2zM437 681h2v5h-2zM444 686h1v4h-1zM445 681h1v5h-1zM463 686h1v4h-1zM465 686h1v4h-1zM469 686h1v4h-1zM473 686h1v4h-1zM474 686h2v4h-2zM481 681h1v5h-1zM508 681h1v5h-1zM511 686h2v4h-2zM516 681h1v5h-1zM519 686h1v4h-1zM520 681h2v5h-2zM522 686h1v4h-1zM532 681h3v5h-3zM535 681h1v5h-1zM540 681h1v5h-1zM554 686h3v4h-3zM561 681h1v5h-1zM563 686h1v4h-1zM573 686h2v4h-2zM591 686h1v4h-1zM600 681h3v5h-3zM617 686h1v4h-1zM627 681h1v5h-1zM628 681h2v5h-2zM665 681h1v5h-1zM666 686h1v4h-1zM673 681h1v5h-1zM674 681h4v5h-4zM679 681h1v5h-1zM680 686h1v4h-1zM681 686h1v4h-1zM687 681h4v5h-4zM698 686h1v4h-1zM700 681h1v5h-1zM702 681h1v5h-1zM704 686h1v4h-1zM708 681h1v5h-1zM716 681h1v5h-1zM719 686h4v4h-4zM725 681h1v5h-1zM732 681h2v5h-2zM748 681h1v5h-1zM754 681h1v5h-1zM757 681h2v5h-2zM759 686h1v4h-1zM762 686h1v4h-1zM768 686h3v4h-3zM773 681h1v5h-1zM774 686h1v4h-1zM775 681h1v5h-1zM782 686h1v4h-1zM800 681h1v5h-1zM801 681h1v5h-1zM813 681h1v5h-1zM815 681h1v5h-1zM818 686h2v4h-2zM825 681h1v5h-1zM826 686h1v4h-1zM830 686h1v4h-1zM839 681h1v5h-1zM846 681h1v5h-1zM868 681h2v5h-2zM870 686h1v4h-1zM871 686h2v4h-2zM873 686h2v4h-2zM876 686h1v4h-1zM885 681h3v5h-3zM890 686h1v4h-1zM894 686h1v4h-1zM897 681h3v5h-3zM920 681h1v5h-1zM925 686h2v4h-2zM935 686h1v4h-1zM937 686h1v4h-1zM953 686h1v4h-1zM954 681h1v5h-1zM955 686h2v4h-2zM957 681h1v5h-1zM962 686h3v4h-3zM965 681h1v5h-1zM971 681h1v5h-1zM975 686h1v4h-1zM978 681h1v5h-1zM982 681h1v5h-1zM985 686h1v4h-1zM996 681h1v5h-1zM1013 686h1v4h-1zM1014 681h1v5h-1zM1023 686h1v4h-1zM1031 681h1v5h-1zM1038 681h1v5h-1zM1053 686h1v4h-1zM1057 686h1v4h-1zM1061 681h1v5h-1zM1074 681h1v5h-1zM1077 686h1v4h-1z"/>
<path fill="#1236f6" d="M101 560h2v8h-2zM104 560h1v8h-1zM115 576h1v8h-1zM130 568h1v8h-1zM137 560h1v8h-1zM150 560h2v8h-2zM159 560h2v8h-2zM222 568h1v8h-1zM238 576h1v8h-1zM242 568h3v8h-3zM269 576h1v8h-1zM286 560h1v8h-1zM293 576h1v8h-1zM348 576h1v8h-1zM355 568h1v8h-1zM387 576h1v8h-1zM410 568h2v8h-2zM457 576h2v8h-2zM467 568h1v8h-1zM489 576h2v8h-2zM513 576h2v8h-2zM516 576h1v8h-1zM542 560h1v8h-1zM545 560h1v8h-1zM562 552h1v8h-1zM590 568h1v8h-1zM635 552h1v8h-1zM695 576h3v8h-3zM701 576h1v8h-1zM706 568h2v8h-2zM717 576h1v8h-1zM728 568h1v8h-1zM741 568h1v8h-1zM745 552h1v8h-1zM748 568h1v8h-1zM754 560h1v8h-1zM755 576h1v8h-1zM792 560h2v8h-2zM800 560h1v8h-1zM814 560h1v8h-1zM822 568h1v8h-1zM836 576h2v8h-2zM843 576h1v8h-1zM844 576h2v8h-2zM876 576h1v8h-1zM894 576h1v8h-1zM902 568h2v8h-2zM925 576h2v8h-2zM927 576h1v8h-1zM946 576h1v8h-1zM957 568h1v8h-1zM965 560h1v8h-1zM982 568h1v8h-1zM993 576h1v8h-1zM1005 576h1v8h-1zM1015 568h1v8h-1zM1044 552h3v8h-3zM1047 560h1v8h-1zM1050 576h3v8h-3zM1062 560h1v8h-1zM1062 568h1v8h-1z"/>
<path fill="#7ede36" d="M103 664h1v12h-1zM178 664h1v12h-1zM230 664h2v12h-2zM266 664h1v12h-1zM273 664h1v12h-1zM331 664h1v12h-1zM356 664h1v12h-1zM396 664h1v12h-1zM413 664h1v12h-1zM516 664h1v12h-1zM525 664h1v12h-1zM535 664h1v12h-1zM540 664h1v12h-1zM600 664h3v12h-3zM643 664h2v12h-2zM691 664h1v12h-1zM695 664h3v12h-3zM732 664h2v12h-2zM742 664h1v12h-1zM761 664h1v12h-1zM775 664h1v12h-1zM815 664h1v12h-1zM834 664h1v12h-1zM853 664h1v12h-1zM916 664h4v12h-4zM954 664h1v12h-1zM1036 664h1v12h-1zM1039 664h1v12h-1zM1042 664h2v12h-2zM1074 664h1v12h-1z"/>
<path fill="#d2de06" d="M103 676h1v5h-1zM104 676h1v5h-1zM114 676h1v5h-1zM146 676h1v5h-1zM148 676h1v5h-1zM158 676h1v5h-1zM165 676h1v5h-1zM169 676h1v5h-1zM170 676h1v5h-1zM171 676h2v5h-2zM173 676h1v5h-1zM178 676h1v5h-1zM179 676h1v5h-1zM185 676h2v5h-2zM189 676h1v5h-1zM190 676h3v5h-3zM194 676h1v5h-1zM197 676h1v5h-1zM203 676h1v5h-1zM205 676h1v5h-1zM206 676h3v5h-3zM217 676h1v5h-1zM226 676h1v5h-1zM227 676h3v5h-3zM234 676h3v5h-3zM238 676h1v5h-1zM242 676h3v5h-3zM246 676h1v5h-1zM267 676h1v5h-1zM273 676h1v5h-1zM275 676h1v5h-1zM276 676h2v5h-2zM278 676h1v5h-1zM280 676h1v5h-1zM281 676h1v5h-1zM293 676h1v5h-1zM295 676h1v5h-1zM302 676h1v5h-1zM306 676h4v5h-4zM317 676h2v5h-2zM323 676h2v5h-2zM325 676h1v5h-1zM328 676h2v5h-2zM352 676h1v5h-1zM357 676h1v5h-1zM358 676h2v5h-2zM360 676h1v5h-1zM370 676h1v5h-1zM371 676h1v5h-1zM373 676h1v5h-1zM374 676h1v5h-1zM377 676h2v5h-2zM379 676h1v5h-1zM387 676h1v5h-1zM389 676h2v5h-2zM395 676h1v5h-1zM397 676h1v5h-1zM403 676h1v5h-1zM410 676h2v5h-2zM413 676h1v5h-1zM419 676h4v5h-4zM424 676h1v5h-1zM430 676h2v5h-2zM432 676h1v5h-1zM433 676h1v5h-1zM436 676h1v5h-1zM443 676h1v5h-1zM444 676h1v5h-1zM446 676h4v5h-4zM456 676h1v5h-1zM463 676h1v5h-1zM464 676h1v5h-1zM465 676h1v5h-1zM470 676h1v5h-1zM471 676h1v5h-1zM472 676h1v5h-1zM473 676h1v5h-1zM476 676h1v5h-1zM477 676h2v5h-2zM484 676h2v5h-2zM486 676h1v5h-1zM511 676h2v5h-2zM519 676h1v5h-1zM522 676h1v5h-1zM524 676h1v5h-1zM525 676h1v5h-1zM526 676h1v5h-1zM530 676h2v5h-2zM549 676h1v5h-1zM551 676h1v5h-1zM552 676h1v5h-1zM553 676h1v5h-1zM554 676h3v5h-3zM557 676h3v5h-3zM562 676h1v5h-1zM563 676h1v5h-1zM564 676h2v5h-2zM573 676h2v5h-2zM584 676h1v5h-1zM592 676h1v5h-1zM593 676h1v5h-1zM603 676h2v5h-2zM607 676h3v5h-3zM610 676h1v5h-1zM611 676h1v5h-1zM619 676h2v5h-2zM624 676h1v5h-1zM625 676h1v5h-1zM641 676h1v5h-1zM643 676h2v5h-2zM645 676h1v5h-1zM646 676h2v5h-2zM651 676h2v5h-2zM678 676h1v5h-1zM680 676h1v5h-1zM691 676h1v5h-1zM695 676h3v5h-3zM703 676h1v5h-1zM705 676h1v5h-1zM709 676h2v5h-2zM719 676h4v5h-4zM723 676h1v5h-1zM731 676h1v5h-1zM734 676h1v5h-1zM739 676h1v5h-1zM740 676h1v5h-1zM744 676h1v5h-1zM746 676h1v5h-1zM749 676h1v5h-1zM755 676h1v5h-1zM761 676h1v5h-1zM763 676h3v5h-3zM767 676h1v5h-1zM768 676h3v5h-3zM774 676h1v5h-1zM780 676h1v5h-1zM782 676h1v5h-1zM787 676h1v5h-1zM790 676h1v5h-1zM791 676h1v5h-1zM795 676h2v5h-2zM816 676h1v5h-1zM818 676h2v5h-2zM820 676h2v5h-2zM823 676h1v5h-1zM824 676h1v5h-1zM827 676h1v5h-1zM831 676h1v5h-1zM832 676h1v5h-1zM834 676h1v5h-1zM836 676h2v5h-2zM840 676h1v5h-1zM844 676h2v5h-2zM853 676h1v5h-1zM854 676h1v5h-1zM857 676h1v5h-1zM860 676h1v5h-1zM861 676h1v5h-1zM867 676h1v5h-1zM870 676h1v5h-1zM871 676h2v5h-2zM873 676h2v5h-2zM876 676h1v5h-1zM882 676h1v5h-1zM888 676h2v5h-2zM890 676h1v5h-1zM891 676h1v5h-1zM894 676h1v5h-1zM915 676h1v5h-1zM916 676h4v5h-4zM924 676h1v5h-1zM925 676h2v5h-2zM927 676h1v5h-1zM937 676h1v5h-1zM940 676h1v5h-1zM944 676h1v5h-1zM953 676h1v5h-1zM955 676h2v5h-2zM961 676h1v5h-1zM962 676h3v5h-3zM969 676h1v5h-1zM972 676h1v5h-1zM975 676h1v5h-1zM983 676h1v5h-1zM995 676h1v5h-1zM997 676h3v5h-3zM1000 676h1v5h-1zM1004 676h1v5h-1zM1005 676h1v5h-1zM1013 676h1v5h-1zM1019 676h1v5h-1zM1023 676h1v5h-1zM1029 676h1v5h-1zM1030 676h1v5h-1zM1034 676h2v5h-2zM1036 676h1v5h-1zM1037 676h1v5h-1zM1053 676h1v5h-1zM1057 676h1v5h-1zM1060 676h1v5h-1zM1066 676h1v5h-1zM1076 676h1v5h-1z"/>
<path fill="#deba06" d="M103 681h1v5h-1zM104 681h1v5h-1zM139 681h1v5h-1zM148 681h1v5h-1zM155 681h3v5h-3zM170 681h1v5h-1zM171 681h2v5h-2zM173 681h1v5h-1zM178 681h1v5h-1zM184 681h1v5h-1zM190 681h3v5h-3zM197 681h1v5h-1zM205 681h1v5h-1zM226 681h1v5h-1zM232 681h1v5h-1zM234 681h3v5h-3zM237 681h1v5h-1zM238 681h1v5h-1zM242 681h3v5h-3zM246 681h1v5h-1zM251 686h1v4h-1zM273 681h1v5h-1zM274 681h1v5h-1zM282 681h3v5h-3zM293 681h1v5h-1zM299 681h1v5h-1zM302 681h1v5h-1zM323 681h2v5h-2zM325 681h1v5h-1zM336 681h4v5h-4zM346 681h2v5h-2zM352 681h1v5h-1zM357 681h1v5h-1zM370 681h1v5h-1zM371 681h1v5h-1zM374 681h1v5h-1zM377 681h2v5h-2zM384 681h1v5h-1zM395 681h1v5h-1zM410 681h2v5h-2zM412 681h1v5h-1zM413 681h1v5h-1zM419 681h4v5h-4zM424 681h1v5h-1zM425 681h2v5h-2zM427 681h3v5h-3zM433 681h1v5h-1zM442 681h1v5h-1zM446 681h4v5h-4zM454 681h1v5h-1zM457 681h2v5h-2zM461 681h1v5h-1zM462 681h1v5h-1zM464 681h1v5h-1zM466 681h1v5h-1zM468 681h1v5h-1zM470 681h1v5h-1zM472 681h1v5h-1zM476 681h1v5h-1zM477 681h2v5h-2zM486 681h1v5h-1zM515 681h1v5h-1zM524 681h1v5h-1zM525 681h1v5h-1zM550 681h1v5h-1zM552 681h1v5h-1zM553 681h1v5h-1zM557 681h3v5h-3zM562 681h1v5h-1zM564 681h2v5h-2zM589 681h1v5h-1zM592 681h1v5h-1zM603 681h2v5h-2zM607 681h3v5h-3zM619 681h2v5h-2zM624 681h1v5h-1zM638 686h1v4h-1zM641 681h1v5h-1zM642 681h1v5h-1zM643 681h2v5h-2zM646 681h2v5h-2zM651 681h2v5h-2zM660 681h2v5h-2zM664 681h1v5h-1zM667 681h3v5h-3zM678 681h1v5h-1zM691 681h1v5h-1zM695 681h3v5h-3zM701 681h1v5h-1zM706 681h2v5h-2zM709 681h2v5h-2zM723 681h1v5h-1zM734 681h1v5h-1zM744 681h1v5h-1zM746 681h1v5h-1zM749 681h1v5h-1zM753 681h1v5h-1zM755 681h1v5h-1zM761 681h1v5h-1zM767 681h1v5h-1zM779 681h1v5h-1zM781 681h1v5h-1zM787 681h1v5h-1zM790 681h1v5h-1zM791 681h1v5h-1zM798 681h1v5h-1zM816 681h1v5h-1zM820 681h2v5h-2zM823 681h1v5h-1zM832 681h1v5h-1zM834 681h1v5h-1zM840 681h1v5h-1zM853 681h1v5h-1zM854 681h1v5h-1zM860 681h1v5h-1zM861 681h1v5h-1zM867 681h1v5h-1zM882 681h1v5h-1zM891 681h1v5h-1zM893 681h1v5h-1zM908 681h3v5h-3zM915 681h1v5h-1zM916 681h4v5h-4zM924 681h1v5h-1zM927 681h1v5h-1zM933 681h1v5h-1zM960 681h1v5h-1zM961 681h1v5h-1zM969 681h1v5h-1zM983 681h1v5h-1zM984 681h1v5h-1zM986 681h3v5h-3zM1000 681h1v5h-1zM1004 681h1v5h-1zM1037 681h1v5h-1zM1042 681h2v5h-2zM1058 681h2v5h-2zM1060 681h1v5h-1zM1075 681h1v5h-1zM1076 681h1v5h-1z"/>
<path fill="#eaa206" d="M103 686h1v4h-1zM104 686h1v4h-1zM148 686h1v4h-1zM158 686h1v4h-1zM169 686h1v4h-1zM170 686h1v4h-1zM171 686h2v4h-2zM173 686h1v4h-1zM178 686h1v4h-1zM185 686h2v4h-2zM189 686h1v4h-1zM190 686h3v4h-3zM197 686h1v4h-1zM203 686h1v4h-1zM205 686h1v4h-1zM206 686h3v4h-3zM226 686h1v4h-1zM227 686h3v4h-3zM234 686h3v4h-3zM238 686h1v4h-1zM239 681h3v5h-3zM242 686h3v4h-3zM246 686h1v4h-1zM273 686h1v4h-1zM276 686h2v4h-2zM278 686h1v4h-1zM280 686h1v4h-1zM293 686h1v4h-1zM295 686h1v4h-1zM302 686h1v4h-1zM323 686h2v4h-2zM325 686h1v4h-1zM342 681h1v5h-1zM352 686h1v4h-1zM357 686h1v4h-1zM370 686h1v4h-1zM371 686h1v4h-1zM374 686h1v4h-1zM377 686h2v4h-2zM387 686h1v4h-1zM395 686h1v4h-1zM410 686h2v4h-2zM413 686h1v4h-1zM419 686h4v4h-4zM424 686h1v4h-1zM432 686h1v4h-1zM433 686h1v4h-1zM436 686h1v4h-1zM443 686h1v4h-1zM446 686h4v4h-4zM456 686h1v4h-1zM464 686h1v4h-1zM470 686h1v4h-1zM471 686h1v4h-1zM472 686h1v4h-1zM476 686h1v4h-1zM477 686h2v4h-2zM484 686h2v4h-2zM486 686h1v4h-1zM524 686h1v4h-1zM525 686h1v4h-1zM526 686h1v4h-1zM530 686h2v4h-2zM549 686h1v4h-1zM551 686h1v4h-1zM552 686h1v4h-1zM553 686h1v4h-1zM557 686h3v4h-3zM564 686h2v4h-2zM584 686h1v4h-1zM592 686h1v4h-1zM593 686h1v4h-1zM603 686h2v4h-2zM607 686h3v4h-3zM610 686h1v4h-1zM611 686h1v4h-1zM619 686h2v4h-2zM624 686h1v4h-1zM625 686h1v4h-1zM641 686h1v4h-1zM643 686h2v4h-2zM645 686h1v4h-1zM646 686h2v4h-2zM651 686h2v4h-2zM678 686h1v4h-1zM691 686h1v4h-1zM695 686h3v4h-3zM703 686h1v4h-1zM705 686h1v4h-1zM709 686h2v4h-2zM723 686h1v4h-1zM731 686h1v4h-1zM734 686h1v4h-1zM739 686h1v4h-1zM740 686h1v4h-1zM744 686h1v4h-1zM746 686h1v4h-1zM749 686h1v4h-1zM755 686h1v4h-1zM761 686h1v4h-1zM763 686h3v4h-3zM767 686h1v4h-1zM780 686h1v4h-1zM787 686h1v4h-1zM790 686h1v4h-1zM791 686h1v4h-1zM795 686h2v4h-2zM816 686h1v4h-1zM820 686h2v4h-2zM823 686h1v4h-1zM824 686h1v4h-1zM827 686h1v4h-1zM831 686h1v4h-1zM832 686h1v4h-1zM834 686h1v4h-1zM836 686h2v4h-2zM840 686h1v4h-1zM844 686h2v4h-2zM853 686h1v4h-1zM857 686h1v4h-1zM860 686h1v4h-1zM861 686h1v4h-1zM867 686h1v4h-1zM882 686h1v4h-1zM888 686h2v4h-2zM891 686h1v4h-1zM915 686h1v4h-1zM916 686h4v4h-4zM924 686h1v4h-1zM927 686h1v4h-1zM940 686h1v4h-1zM944 686h1v4h-1zM961 686h1v4h-1zM969 686h1v4h-1zM972 686h1v4h-1zM983 686h1v4h-1zM995 686h1v4h-1zM997 686h3v4h-3zM1000 686h1v4h-1zM1004 686h1v4h-1zM1005 686h1v4h-1zM1019 686h1v4h-1zM1029 686h1v4h-1zM1030 686h1v4h-1zM1034 686h2v4h-2zM1036 686h1v4h-1zM1037 686h1v4h-1zM1060 686h1v4h-1zM1066 686h1v4h-1zM1076 686h1v4h-1z"/>
<path fill="#1e1ef6" d="M104 527h1v12h-1zM178 560h1v8h-1zM199 552h4v8h-4zM242 560h3v8h-3zM276 560h2v8h-2zM353 560h2v8h-2zM355 539h1v13h-1zM406 560h1v8h-1zM446 568h4v8h-4zM450 568h1v8h-1zM489 552h2v8h-2zM505 552h1v8h-1zM510 560h1v8h-1zM541 568h1v8h-1zM543 539h2v13h-2zM552 560h1v8h-1zM598 560h1v8h-1zM630 539h1v13h-1zM638 568h1v8h-1zM743 552h1v8h-1zM755 552h1v8h-1zM771 527h1v12h-1zM791 552h1v8h-1zM813 552h1v8h-1zM814 527h1v12h-1zM820 539h2v13h-2zM894 552h1v8h-1zM929 539h4v13h-4zM952 539h1v13h-1zM986 560h3v8h-3zM994 552h1v8h-1zM1004 560h1v8h-1zM1005 552h1v8h-1zM1024 552h3v8h-3zM1040 539h1v13h-1zM1053 576h1v8h-1z"/>
<path fill="#2ac65a" d="M104 647h1v8h-1zM128 655h1v9h-1zM133 647h3v8h-3zM152 655h1v9h-1zM153 647h1v8h-1zM171 647h2v8h-2zM174 655h2v9h-2zM176 647h1v8h-1zM190 647h3v8h-3zM198 655h1v9h-1zM216 647h1v8h-1zM245 647h1v8h-1zM252 655h3v9h-3zM262 647h1v8h-1zM276 655h2v9h-2zM343 655h1v9h-1zM352 647h1v8h-1zM364 647h1v8h-1zM373 655h1v9h-1zM374 647h1v8h-1zM394 647h1v8h-1zM395 655h1v9h-1zM414 647h2v8h-2zM468 647h1v8h-1zM469 655h1v9h-1zM476 647h1v8h-1zM486 655h1v9h-1zM506 647h1v8h-1zM513 647h2v8h-2zM525 647h1v8h-1zM549 655h1v9h-1zM552 655h1v9h-1zM554 647h3v8h-3zM568 647h1v8h-1zM592 647h1v8h-1zM597 647h1v8h-1zM617 655h1v9h-1zM625 647h1v8h-1zM685 647h1v8h-1zM705 647h1v8h-1zM723 647h1v8h-1zM724 647h1v8h-1zM730 647h1v8h-1zM743 647h1v8h-1zM747 655h1v9h-1zM754 647h1v8h-1zM761 647h1v8h-1zM766 655h1v9h-1zM774 655h1v9h-1zM801 647h1v8h-1zM810 647h1v8h-1zM875 647h1v8h-1zM877 647h3v8h-3zM916 647h4v8h-4zM921 647h2v8h-2zM959 647h1v8h-1zM997 647h3v8h-3zM1004 647h1v8h-1zM1011 655h2v9h-2zM1057 655h1v9h-1zM1063 655h1v9h-1z"/>
<path fill="#36d24e" d="M104 655h1v9h-1zM116 655h1v9h-1zM150 647h2v8h-2zM154 647h1v8h-1zM176 655h1v9h-1zM190 655h3v9h-3zM216 655h1v9h-1zM225 647h1v8h-1zM245 655h1v9h-1zM262 655h1v9h-1zM263 647h1v8h-1zM269 655h1v9h-1zM320 647h3v8h-3zM352 655h1v9h-1zM356 647h1v8h-1zM364 655h1v9h-1zM374 655h1v9h-1zM388 647h1v8h-1zM414 655h2v9h-2zM468 655h1v9h-1zM554 655h3v9h-3zM568 655h1v9h-1zM592 655h1v9h-1zM625 655h1v9h-1zM631 647h2v8h-2zM658 655h1v9h-1zM679 647h1v8h-1zM685 655h1v9h-1zM705 655h1v9h-1zM723 655h1v9h-1zM724 655h1v9h-1zM730 655h1v9h-1zM742 655h1v9h-1zM743 655h1v9h-1zM757 655h2v9h-2zM761 655h1v9h-1zM799 647h1v8h-1zM801 655h1v9h-1zM877 655h3v9h-3zM916 655h4v9h-4zM934 647h1v8h-1zM982 647h1v8h-1zM1004 655h1v9h-1zM1062 647h1v8h-1zM1074 647h1v8h-1z"/>
<path fill="#1212ba" d="M105 527h1v12h-1zM174 527h2v12h-2zM189 520h1v7h-1zM189 527h1v12h-1zM265 514h1v6h-1zM281 520h1v7h-1zM317 527h2v12h-2zM766 527h1v12h-1zM856 514h1v6h-1zM856 520h1v7h-1zM870 527h1v12h-1z"/>
<path fill="#1212c6" d="M105 539h1v13h-1zM107 527h2v12h-2zM174 539h2v13h-2zM265 520h1v7h-1zM276 527h2v12h-2zM317 539h2v13h-2zM327 527h1v12h-1zM400 514h1v6h-1zM400 552h1v8h-1zM409 527h1v12h-1zM510 527h1v12h-1zM633 527h1v12h-1zM636 527h1v12h-1zM766 539h1v13h-1zM836 527h2v12h-2zM870 539h1v13h-1zM937 527h1v12h-1zM1020 514h3v6h-3z"/>
<path fill="#36d25a" d="M106 647h1v8h-1zM142 647h2v8h-2zM166 647h1v8h-1zM197 655h1v9h-1zM204 655h1v9h-1zM233 655h1v9h-1zM249 647h2v8h-2zM251 655h1v9h-1zM274 647h1v8h-1zM299 647h1v8h-1zM315 655h1v9h-1zM332 647h1v8h-1zM346 647h2v8h-2zM349 655h2v9h-2zM360 655h1v9h-1zM362 647h1v8h-1zM385 655h2v9h-2zM404 655h1v9h-1zM413 647h1v8h-1zM417 647h2v8h-2zM419 655h4v9h-4zM423 647h1v8h-1zM439 655h1v9h-1zM440 655h2v9h-2zM456 655h1v9h-1zM463 655h1v9h-1zM466 655h1v9h-1zM488 647h1v8h-1zM502 647h3v8h-3zM519 655h1v9h-1zM535 647h1v8h-1zM557 655h3v9h-3zM591 655h1v9h-1zM606 655h1v9h-1zM607 647h3v8h-3zM673 647h1v8h-1zM701 647h1v8h-1zM732 647h2v8h-2zM750 655h2v9h-2zM772 647h1v8h-1zM780 647h1v8h-1zM782 655h1v9h-1zM787 655h1v9h-1zM795 647h2v8h-2zM811 647h2v8h-2zM850 655h1v9h-1zM853 655h1v9h-1zM854 647h1v8h-1zM862 647h1v8h-1zM890 655h1v9h-1zM893 647h1v8h-1zM895 647h2v8h-2zM929 655h4v9h-4zM933 647h1v8h-1zM938 647h2v8h-2zM947 655h2v9h-2zM960 647h1v8h-1zM961 655h1v9h-1zM962 655h3v9h-3zM965 647h1v8h-1zM1037 647h1v8h-1zM1039 647h1v8h-1zM1048 647h2v8h-2zM1067 647h1v8h-1zM1073 655h1v9h-1zM1076 647h1v8h-1zM1077 655h1v9h-1z"/>
<path fill="#42d24e" d="M106 655h1v9h-1zM133 655h3v9h-3zM153 655h1v9h-1zM166 655h1v9h-1zM171 655h2v9h-2zM274 655h1v9h-1zM332 655h1v9h-1zM346 655h2v9h-2zM362 655h1v9h-1zM394 655h1v9h-1zM396 647h1v8h-1zM476 655h1v9h-1zM488 655h1v9h-1zM500 655h1v9h-1zM506 655h1v9h-1zM513 655h2v9h-2zM525 655h1v9h-1zM535 655h1v9h-1zM597 655h1v9h-1zM607 655h3v9h-3zM701 655h1v9h-1zM702 647h1v8h-1zM732 655h2v9h-2zM746 655h1v9h-1zM754 655h1v9h-1zM772 655h1v9h-1zM773 647h1v8h-1zM795 655h2v9h-2zM810 655h1v9h-1zM811 655h2v9h-2zM854 655h1v9h-1zM875 655h1v9h-1zM893 655h1v9h-1zM895 655h2v9h-2zM921 655h2v9h-2zM933 655h1v9h-1zM938 655h2v9h-2zM959 655h1v9h-1zM965 655h1v9h-1zM997 655h3v9h-3zM1037 655h1v9h-1zM1039 655h1v9h-1zM1048 655h2v9h-2z"/>
<path fill="#1212d2" d="M107 539h2v13h-2zM107 552h2v8h-2zM107 560h2v8h-2zM115 527h1v12h-1zM121 552h2v8h-2zM164 552h1v8h-1zM164 560h1v8h-1zM189 539h1v13h-1zM189 552h1v8h-1zM209 527h1v12h-1zM238 527h1v12h-1zM251 527h1v12h-1zM251 552h1v8h-1zM251 560h1v8h-1zM265 527h1v12h-1zM265 552h1v8h-1zM276 539h2v13h-2zM281 527h1v12h-1zM316 527h1v12h-1zM327 539h1v13h-1zM328 527h2v12h-2zM363 514h1v6h-1zM374 527h1v12h-1zM400 520h1v7h-1zM400 527h1v12h-1zM400 560h1v8h-1zM401 552h2v8h-2zM409 539h1v13h-1zM450 552h1v8h-1zM450 560h1v8h-1zM479 552h2v8h-2zM510 539h1v13h-1zM519 527h1v12h-1zM519 539h1v13h-1zM519 552h1v8h-1zM530 514h2v6h-2zM598 527h1v12h-1zM633 539h1v13h-1zM636 514h1v6h-1zM636 520h1v7h-1zM636 539h1v13h-1zM641 527h1v12h-1zM662 527h2v12h-2zM684 527h1v12h-1zM684 539h1v13h-1zM731 527h1v12h-1zM747 527h1v12h-1zM789 527h1v12h-1zM791 527h1v12h-1zM794 527h1v12h-1zM836 539h2v13h-2zM856 552h1v8h-1zM881 514h1v6h-1zM908 527h3v12h-3zM937 539h1v13h-1zM975 552h1v8h-1zM986 527h3v12h-3zM994 527h1v12h-1zM1020 520h3v7h-3zM1020 527h3v12h-3z"/>
<path fill="#1212de" d="M107 568h2v8h-2zM115 539h1v13h-1zM121 560h2v8h-2zM131 527h1v12h-1zM132 527h1v12h-1zM170 527h1v12h-1zM189 560h1v8h-1zM209 539h1v13h-1zM209 552h1v8h-1zM222 527h1v12h-1zM232 514h1v6h-1zM238 539h1v13h-1zM238 552h1v8h-1zM251 539h1v13h-1zM255 568h4v8h-4zM265 539h1v13h-1zM265 560h1v8h-1zM281 539h1v13h-1zM285 514h1v6h-1zM285 520h1v7h-1zM285 527h1v12h-1zM316 539h1v13h-1zM327 568h1v8h-1zM328 539h2v13h-2zM335 514h1v6h-1zM363 520h1v7h-1zM364 552h1v8h-1zM374 539h1v13h-1zM376 568h1v8h-1zM399 527h1v12h-1zM399 539h1v13h-1zM400 539h1v13h-1zM401 560h2v8h-2zM401 568h2v8h-2zM404 552h1v8h-1zM404 568h1v8h-1zM409 552h1v8h-1zM416 552h1v8h-1zM416 560h1v8h-1zM439 527h1v12h-1zM442 527h1v12h-1zM446 514h4v6h-4zM446 527h4v12h-4zM446 539h4v13h-4zM451 527h2v12h-2zM451 539h2v13h-2zM451 552h2v8h-2zM471 552h1v8h-1zM477 552h2v8h-2zM479 560h2v8h-2zM519 560h1v8h-1zM530 520h2v7h-2zM530 527h2v12h-2zM548 527h1v12h-1zM551 527h1v12h-1zM552 527h1v12h-1zM552 539h1v13h-1zM593 527h1v12h-1zM598 539h1v13h-1zM625 527h1v12h-1zM641 539h1v13h-1zM646 527h2v12h-2zM646 552h2v8h-2zM646 560h2v8h-2zM657 514h1v6h-1zM657 520h1v7h-1zM657 527h1v12h-1zM657 539h1v13h-1zM662 539h2v13h-2zM666 552h1v8h-1zM670 552h2v8h-2zM670 560h2v8h-2zM714 527h1v12h-1zM724 527h1v12h-1zM731 539h1v13h-1zM734 527h1v12h-1zM747 539h1v13h-1zM748 527h1v12h-1zM748 539h1v13h-1zM750 552h2v8h-2zM766 552h1v8h-1zM772 552h1v8h-1zM789 539h1v13h-1zM791 539h1v13h-1zM794 539h1v13h-1zM818 552h2v8h-2zM818 560h2v8h-2zM838 527h1v12h-1zM838 539h1v13h-1zM841 527h1v12h-1zM850 552h1v8h-1zM850 560h1v8h-1zM856 527h1v12h-1zM856 539h1v13h-1zM856 560h1v8h-1zM858 552h1v8h-1zM863 527h2v12h-2zM881 520h1v7h-1zM883 514h1v6h-1zM883 520h1v7h-1zM905 514h1v6h-1zM905 520h1v7h-1zM908 539h3v13h-3zM924 527h1v12h-1zM937 552h1v8h-1zM975 560h1v8h-1zM986 539h3v13h-3zM994 539h1v13h-1zM1000 527h1v12h-1zM1013 552h1v8h-1zM1013 560h1v8h-1zM1016 527h1v12h-1zM1016 539h1v13h-1zM1020 539h3v13h-3zM1024 527h3v12h-3zM1030 527h1v12h-1zM1057 552h1v8h-1zM1076 527h1v12h-1z"/>
<path fill="#1212ea" d="M107 576h2v8h-2zM115 552h1v8h-1zM115 560h1v8h-1zM125 552h1v8h-1zM125 560h1v8h-1zM128 552h1v8h-1zM128 560h1v8h-1zM131 514h1v6h-1zM131 520h1v7h-1zM131 539h1v13h-1zM132 539h1v13h-1zM137 527h1v12h-1zM149 527h1v12h-1zM164 568h1v8h-1zM170 539h1v13h-1zM178 552h1v8h-1zM185 527h2v12h-2zM185 539h2v13h-2zM194 552h1v8h-1zM194 568h1v8h-1zM196 552h1v8h-1zM196 560h1v8h-1zM209 560h1v8h-1zM209 568h1v8h-1zM221 568h1v8h-1zM222 539h1v13h-1zM226 552h1v8h-1zM226 560h1v8h-1zM232 520h1v7h-1zM238 560h1v8h-1zM242 552h3v8h-3zM255 576h4v8h-4zM261 568h1v8h-1zM276 552h2v8h-2zM280 527h1v12h-1zM280 539h1v13h-1zM281 568h1v8h-1zM285 539h1v13h-1zM290 552h1v8h-1zM290 560h1v8h-1zM290 568h1v8h-1zM306 552h4v8h-4zM306 560h4v8h-4zM310 568h1v8h-1zM317 568h2v8h-2zM327 552h1v8h-1zM327 560h1v8h-1zM327 576h1v8h-1zM335 520h1v7h-1zM341 527h1v12h-1zM342 514h1v6h-1zM342 520h1v7h-1zM342 527h1v12h-1zM342 539h1v13h-1zM353 552h2v8h-2zM355 527h1v12h-1zM355 552h1v8h-1zM363 527h1v12h-1zM363 539h1v13h-1zM363 552h1v8h-1zM364 560h1v8h-1zM376 576h1v8h-1zM394 514h1v6h-1zM394 520h1v7h-1zM394 527h1v12h-1zM397 552h1v8h-1zM397 560h1v8h-1zM397 568h1v8h-1zM399 552h1v8h-1zM399 560h1v8h-1zM401 576h2v8h-2zM404 560h1v8h-1zM404 576h1v8h-1zM406 527h1v12h-1zM406 552h1v8h-1zM409 560h1v8h-1zM416 568h1v8h-1zM425 527h2v12h-2zM439 539h1v13h-1zM442 539h1v13h-1zM443 568h1v8h-1zM446 520h4v7h-4zM451 560h2v8h-2zM455 552h1v8h-1zM466 527h1v12h-1zM466 539h1v13h-1zM468 527h1v12h-1zM468 539h1v13h-1zM471 560h1v8h-1zM472 527h1v12h-1zM477 560h2v8h-2zM501 527h1v12h-1zM510 552h1v8h-1zM519 568h1v8h-1zM523 552h1v8h-1zM530 539h2v13h-2zM530 552h2v8h-2zM530 560h2v8h-2zM543 527h2v12h-2zM543 552h2v8h-2zM548 539h1v13h-1zM551 539h1v13h-1zM552 552h1v8h-1zM591 552h1v8h-1zM591 560h1v8h-1zM591 568h1v8h-1zM593 539h1v13h-1zM593 552h1v8h-1zM593 560h1v8h-1zM596 568h1v8h-1zM598 552h1v8h-1zM598 568h1v8h-1zM617 552h1v8h-1zM617 560h1v8h-1zM617 568h1v8h-1zM625 539h1v13h-1zM630 527h1v12h-1zM630 552h1v8h-1zM640 514h1v6h-1zM640 520h1v7h-1zM646 539h2v13h-2zM653 527h2v12h-2zM653 552h2v8h-2zM653 560h2v8h-2zM657 552h1v8h-1zM658 527h1v12h-1zM666 560h1v8h-1zM681 568h1v8h-1zM686 527h1v12h-1zM714 539h1v13h-1zM718 552h1v8h-1zM724 539h1v13h-1zM734 539h1v13h-1zM739 568h1v8h-1zM750 560h2v8h-2zM752 527h1v12h-1zM755 527h1v12h-1zM762 568h1v8h-1zM766 560h1v8h-1zM772 527h1v12h-1zM772 539h1v13h-1zM772 560h1v8h-1zM781 552h1v8h-1zM792 527h2v12h-2zM794 552h1v8h-1zM794 568h1v8h-1zM800 527h1v12h-1zM806 527h4v12h-4zM820 527h2v12h-2zM836 552h2v8h-2zM836 560h2v8h-2zM838 552h1v8h-1zM841 539h1v13h-1zM851 552h1v8h-1zM858 560h1v8h-1zM863 539h2v13h-2zM868 527h2v12h-2zM870 552h1v8h-1zM883 527h1v12h-1zM893 527h1v12h-1zM900 552h2v8h-2zM911 568h3v8h-3zM924 539h1v13h-1zM924 568h1v8h-1zM929 527h4v12h-4zM929 552h4v8h-4zM937 560h1v8h-1zM944 568h1v8h-1zM952 527h1v12h-1zM966 527h1v12h-1zM966 539h1v13h-1zM984 527h1v12h-1zM984 539h1v13h-1zM986 552h3v8h-3zM1000 539h1v13h-1zM1004 552h1v8h-1zM1018 527h1v12h-1zM1019 568h1v8h-1zM1020 552h3v8h-3zM1024 539h3v13h-3zM1029 552h1v8h-1zM1029 560h1v8h-1zM1030 539h1v13h-1zM1040 527h1v12h-1zM1053 568h1v8h-1zM1057 560h1v8h-1zM1071 527h1v12h-1zM1071 552h1v8h-1zM1076 539h1v13h-1z"/>
<path fill="#dec606" d="M114 681h1v5h-1zM146 681h1v5h-1zM158 681h1v5h-1zM165 681h1v5h-1zM166 676h1v5h-1zM169 681h1v5h-1zM179 681h1v5h-1zM185 681h2v5h-2zM189 681h1v5h-1zM194 681h1v5h-1zM203 681h1v5h-1zM206 681h3v5h-3zM217 681h1v5h-1zM227 681h3v5h-3zM239 676h3v5h-3zM267 681h1v5h-1zM275 681h1v5h-1zM276 681h2v5h-2zM278 681h1v5h-1zM279 676h1v5h-1zM280 681h1v5h-1zM281 681h1v5h-1zM295 681h1v5h-1zM296 676h2v5h-2zM306 681h4v5h-4zM317 681h2v5h-2zM341 676h1v5h-1zM342 676h1v5h-1zM356 676h1v5h-1zM358 681h2v5h-2zM360 681h1v5h-1zM373 681h1v5h-1zM379 681h1v5h-1zM387 681h1v5h-1zM397 681h1v5h-1zM403 681h1v5h-1zM430 681h2v5h-2zM432 681h1v5h-1zM436 681h1v5h-1zM443 681h1v5h-1zM444 681h1v5h-1zM456 681h1v5h-1zM463 681h1v5h-1zM465 681h1v5h-1zM471 681h1v5h-1zM473 681h1v5h-1zM484 681h2v5h-2zM511 681h2v5h-2zM519 681h1v5h-1zM526 681h1v5h-1zM530 681h2v5h-2zM549 681h1v5h-1zM551 681h1v5h-1zM554 681h3v5h-3zM561 676h1v5h-1zM563 681h1v5h-1zM573 681h2v5h-2zM584 681h1v5h-1zM593 681h1v5h-1zM610 681h1v5h-1zM611 681h1v5h-1zM625 681h1v5h-1zM627 676h1v5h-1zM645 681h1v5h-1zM665 676h1v5h-1zM674 676h4v5h-4zM680 681h1v5h-1zM703 681h1v5h-1zM705 681h1v5h-1zM719 681h4v5h-4zM725 676h1v5h-1zM731 681h1v5h-1zM732 676h2v5h-2zM739 681h1v5h-1zM740 681h1v5h-1zM763 681h3v5h-3zM768 681h3v5h-3zM774 681h1v5h-1zM780 681h1v5h-1zM782 681h1v5h-1zM795 681h2v5h-2zM815 676h1v5h-1zM818 681h2v5h-2zM824 681h1v5h-1zM827 681h1v5h-1zM831 681h1v5h-1zM836 681h2v5h-2zM844 681h2v5h-2zM857 681h1v5h-1zM870 681h1v5h-1zM871 681h2v5h-2zM873 681h2v5h-2zM876 681h1v5h-1zM888 681h2v5h-2zM890 681h1v5h-1zM894 681h1v5h-1zM925 681h2v5h-2zM940 681h1v5h-1zM944 681h1v5h-1zM953 681h1v5h-1zM955 681h2v5h-2zM962 681h3v5h-3zM965 676h1v5h-1zM972 681h1v5h-1zM975 681h1v5h-1zM995 681h1v5h-1zM997 681h3v5h-3zM1005 681h1v5h-1zM1013 681h1v5h-1zM1014 676h1v5h-1zM1019 681h1v5h-1zM1023 681h1v5h-1zM1029 681h1v5h-1zM1030 681h1v5h-1zM1034 681h2v5h-2zM1036 681h1v5h-1zM1053 681h1v5h-1zM1057 681h1v5h-1zM1061 676h1v5h-1zM1066 681h1v5h-1zM1074 676h1v5h-1z"/>
<path fill="#0696d2" d="M116 605h1v6h-1zM205 605h1v6h-1zM242 605h3v6h-3zM251 605h1v6h-1zM255 605h4v6h-4zM304 611h2v7h-2zM328 605h2v6h-2zM342 594h1v11h-1zM351 605h1v6h-1zM364 605h1v6h-1zM376 605h1v6h-1zM395 605h1v6h-1zM400 611h1v7h-1zM416 605h1v6h-1zM430 611h2v7h-2zM436 611h1v7h-1zM450 611h1v7h-1zM459 594h1v11h-1zM465 611h1v7h-1zM470 605h1v6h-1zM474 605h2v6h-2zM483 594h1v11h-1zM484 605h2v6h-2zM486 605h1v6h-1zM494 594h2v11h-2zM502 594h3v11h-3zM507 605h1v6h-1zM511 611h2v7h-2zM523 611h1v7h-1zM549 611h1v7h-1zM563 605h1v6h-1zM587 611h1v7h-1zM591 611h1v7h-1zM612 605h1v6h-1zM619 605h2v6h-2zM636 611h1v7h-1zM674 594h4v11h-4zM714 605h1v6h-1zM716 594h1v11h-1zM717 605h1v6h-1zM742 605h1v6h-1zM759 611h1v7h-1zM762 605h1v6h-1zM778 605h1v6h-1zM782 611h1v7h-1zM811 594h2v11h-2zM826 605h1v6h-1zM838 605h1v6h-1zM844 605h2v6h-2zM854 605h1v6h-1zM855 605h1v6h-1zM880 605h1v6h-1zM884 605h1v6h-1zM892 605h1v6h-1zM906 605h1v6h-1zM914 594h1v11h-1zM944 611h1v7h-1zM947 605h2v6h-2zM955 611h2v7h-2zM972 605h1v6h-1zM976 605h1v6h-1zM1006 605h1v6h-1zM1030 605h1v6h-1zM1057 611h1v7h-1zM1073 605h1v6h-1zM1079 611h1v7h-1z"/>
<path fill="#1296c6" d="M116 611h1v7h-1zM125 605h1v6h-1zM148 611h1v7h-1zM168 605h1v6h-1zM178 605h1v6h-1zM184 605h1v6h-1zM196 605h1v6h-1zM205 611h1v7h-1zM220 605h1v6h-1zM230 605h2v6h-2zM242 611h3v7h-3zM260 605h1v6h-1zM263 605h1v6h-1zM281 611h1v7h-1zM299 605h1v6h-1zM314 605h1v6h-1zM328 611h2v7h-2zM351 611h1v7h-1zM364 611h1v7h-1zM395 611h1v7h-1zM406 605h1v6h-1zM416 611h1v7h-1zM427 605h3v6h-3zM451 605h2v6h-2zM454 605h1v6h-1zM460 611h1v7h-1zM461 605h1v6h-1zM467 605h1v6h-1zM468 605h1v6h-1zM469 611h1v7h-1zM470 611h1v7h-1zM474 611h2v7h-2zM484 611h2v7h-2zM486 611h1v7h-1zM501 605h1v6h-1zM507 611h1v7h-1zM557 605h3v6h-3zM563 611h1v7h-1zM582 605h1v6h-1zM589 605h1v6h-1zM592 605h1v6h-1zM597 605h1v6h-1zM607 605h3v6h-3zM612 611h1v7h-1zM614 611h3v7h-3zM619 611h2v7h-2zM626 605h1v6h-1zM627 605h1v6h-1zM630 605h1v6h-1zM639 605h1v6h-1zM687 605h4v6h-4zM714 611h1v7h-1zM717 611h1v7h-1zM742 611h1v7h-1zM753 605h1v6h-1zM773 605h1v6h-1zM778 611h1v7h-1zM802 605h1v6h-1zM813 605h1v6h-1zM816 605h1v6h-1zM826 611h1v7h-1zM828 605h1v6h-1zM833 605h1v6h-1zM838 611h1v7h-1zM844 611h2v7h-2zM854 611h1v7h-1zM855 611h1v7h-1zM884 611h1v7h-1zM892 611h1v7h-1zM906 611h1v7h-1zM908 611h3v7h-3zM921 605h2v6h-2zM945 605h1v6h-1zM947 611h2v7h-2zM972 611h1v7h-1zM980 605h2v6h-2zM995 605h1v6h-1zM1005 605h1v6h-1zM1006 611h1v7h-1zM1030 611h1v7h-1zM1032 611h1v7h-1zM1039 605h1v6h-1zM1048 611h2v7h-2zM1073 611h1v7h-1zM1075 605h1v6h-1z"/>
<path fill="#2ac666" d="M116 647h1v8h-1zM197 647h1v8h-1zM204 647h1v8h-1zM251 647h1v8h-1zM269 647h1v8h-1zM315 647h1v8h-1zM342 638h1v9h-1zM360 647h1v8h-1zM385 647h2v8h-2zM419 647h4v8h-4zM437 638h2v9h-2zM439 647h1v8h-1zM456 647h1v8h-1zM463 647h1v8h-1zM466 647h1v8h-1zM519 647h1v8h-1zM557 647h3v8h-3zM606 647h1v8h-1zM631 638h2v9h-2zM658 647h1v8h-1zM742 647h1v8h-1zM750 647h2v8h-2zM757 647h2v8h-2zM767 638h1v9h-1zM773 638h1v9h-1zM850 647h1v8h-1zM853 647h1v8h-1zM890 647h1v8h-1zM929 647h4v8h-4zM947 647h2v8h-2zM961 647h1v8h-1zM1060 638h1v9h-1zM1073 647h1v8h-1zM1075 638h1v9h-1z"/>
<path fill="#8ade36" d="M117 664h3v12h-3zM294 664h1v12h-1zM673 664h1v12h-1zM969 664h1v12h-1z"/>
<path fill="#1296ba" d="M120 605h1v6h-1zM125 611h1v7h-1zM133 611h3v7h-3zM145 605h1v6h-1zM145 611h1v7h-1zM158 618h1v12h-1zM161 605h3v6h-3zM161 611h3v7h-3zM168 611h1v7h-1zM178 611h1v7h-1zM184 611h1v7h-1zM196 611h1v7h-1zM203 611h1v7h-1zM210 605h2v6h-2zM215 618h1v12h-1zM220 611h1v7h-1zM222 605h1v6h-1zM230 611h2v7h-2zM234 611h3v7h-3zM259 618h1v12h-1zM260 611h1v7h-1zM263 611h1v7h-1zM270 605h2v6h-2zM282 605h3v6h-3zM296 605h2v6h-2zM299 611h1v7h-1zM314 611h1v7h-1zM340 605h1v6h-1zM372 618h1v12h-1zM380 605h3v6h-3zM384 605h1v6h-1zM400 618h1v12h-1zM406 611h1v7h-1zM407 618h1v12h-1zM417 605h2v6h-2zM427 611h3v7h-3zM433 611h1v7h-1zM436 618h1v12h-1zM450 618h1v12h-1zM451 611h2v7h-2zM454 611h1v7h-1zM456 611h1v7h-1zM461 611h1v7h-1zM467 611h1v7h-1zM468 611h1v7h-1zM471 611h1v7h-1zM494 605h2v6h-2zM501 611h1v7h-1zM502 605h3v6h-3zM530 611h2v7h-2zM557 611h3v7h-3zM569 605h2v6h-2zM572 611h1v7h-1zM572 618h1v12h-1zM582 611h1v7h-1zM589 611h1v7h-1zM592 611h1v7h-1zM597 611h1v7h-1zM607 611h3v7h-3zM626 611h1v7h-1zM627 611h1v7h-1zM630 611h1v7h-1zM633 618h1v12h-1zM634 605h1v6h-1zM634 611h1v7h-1zM636 618h1v12h-1zM639 611h1v7h-1zM641 611h1v7h-1zM653 611h2v7h-2zM674 605h4v6h-4zM687 611h4v7h-4zM693 611h1v7h-1zM694 611h1v7h-1zM699 605h1v6h-1zM717 618h1v12h-1zM729 605h1v6h-1zM744 605h1v6h-1zM747 618h1v12h-1zM749 605h1v6h-1zM753 611h1v7h-1zM766 618h1v12h-1zM773 611h1v7h-1zM782 618h1v12h-1zM802 611h1v7h-1zM811 605h2v6h-2zM811 611h2v7h-2zM813 611h1v7h-1zM816 611h1v7h-1zM828 611h1v7h-1zM830 618h1v12h-1zM831 611h1v7h-1zM833 611h1v7h-1zM836 618h2v12h-2zM843 611h1v7h-1zM849 618h1v12h-1zM855 618h1v12h-1zM884 618h1v12h-1zM888 618h2v12h-2zM905 605h1v6h-1zM921 611h2v7h-2zM934 605h1v6h-1zM934 611h1v7h-1zM945 611h1v7h-1zM950 611h2v7h-2zM953 618h1v12h-1zM960 611h1v7h-1zM980 611h2v7h-2zM995 611h1v7h-1zM1000 605h1v6h-1zM1005 611h1v7h-1zM1008 611h1v7h-1zM1014 605h1v6h-1zM1027 605h2v6h-2zM1036 611h1v7h-1zM1037 605h1v6h-1zM1039 611h1v7h-1zM1044 605h3v6h-3zM1058 605h2v6h-2zM1075 611h1v7h-1z"/>
<path fill="#1296ae" d="M120 611h1v7h-1zM210 611h2v7h-2zM251 618h1v12h-1zM296 611h2v7h-2zM312 618h2v12h-2zM342 605h1v6h-1zM463 618h1v12h-1zM479 618h2v12h-2zM511 618h2v12h-2zM762 618h1v12h-1zM914 605h1v6h-1zM957 605h1v6h-1zM975 618h1v12h-1zM986 618h3v12h-3zM1027 611h2v7h-2z"/>
<path fill="#ea9606" d="M120 686h1v4h-1zM124 686h1v4h-1zM131 686h1v4h-1zM139 686h1v4h-1zM142 686h2v4h-2zM147 686h1v4h-1zM155 686h3v4h-3zM177 686h1v4h-1zM184 686h1v4h-1zM187 686h2v4h-2zM199 686h4v4h-4zM210 686h2v4h-2zM232 686h1v4h-1zM237 686h1v4h-1zM266 686h1v4h-1zM274 686h1v4h-1zM282 686h3v4h-3zM285 686h1v4h-1zM286 686h1v4h-1zM291 686h2v4h-2zM294 686h1v4h-1zM298 686h1v4h-1zM299 686h1v4h-1zM300 686h2v4h-2zM330 686h1v4h-1zM336 686h4v4h-4zM340 686h1v4h-1zM346 686h2v4h-2zM362 686h1v4h-1zM363 686h1v4h-1zM368 686h1v4h-1zM384 686h1v4h-1zM394 686h1v4h-1zM396 686h1v4h-1zM412 686h1v4h-1zM425 686h2v4h-2zM427 686h3v4h-3zM437 686h2v4h-2zM442 686h1v4h-1zM445 686h1v4h-1zM454 686h1v4h-1zM457 686h2v4h-2zM461 686h1v4h-1zM462 686h1v4h-1zM466 686h1v4h-1zM468 686h1v4h-1zM481 686h1v4h-1zM483 686h1v4h-1zM515 686h1v4h-1zM516 686h1v4h-1zM520 686h2v4h-2zM540 686h1v4h-1zM550 686h1v4h-1zM562 686h1v4h-1zM589 686h1v4h-1zM600 686h3v4h-3zM628 686h2v4h-2zM640 686h1v4h-1zM642 686h1v4h-1zM660 686h2v4h-2zM664 686h1v4h-1zM667 686h3v4h-3zM673 686h1v4h-1zM679 686h1v4h-1zM687 686h4v4h-4zM701 686h1v4h-1zM706 686h2v4h-2zM715 686h1v4h-1zM742 686h1v4h-1zM748 686h1v4h-1zM753 686h1v4h-1zM757 686h2v4h-2zM779 686h1v4h-1zM781 686h1v4h-1zM798 686h1v4h-1zM799 686h1v4h-1zM800 686h1v4h-1zM801 686h1v4h-1zM811 686h2v4h-2zM846 686h1v4h-1zM854 686h1v4h-1zM868 686h2v4h-2zM893 686h1v4h-1zM897 686h3v4h-3zM908 686h3v4h-3zM920 686h1v4h-1zM933 686h1v4h-1zM954 686h1v4h-1zM959 686h1v4h-1zM960 686h1v4h-1zM971 686h1v4h-1zM978 686h1v4h-1zM984 686h1v4h-1zM986 686h3v4h-3zM996 686h1v4h-1zM1031 686h1v4h-1zM1039 686h1v4h-1zM1042 686h2v4h-2zM1058 686h2v4h-2zM1062 686h1v4h-1zM1075 686h1v4h-1z"/>
<path fill="#068ad2" d="M121 605h2v6h-2zM189 605h1v6h-1zM304 605h2v6h-2zM316 611h1v7h-1zM325 605h1v6h-1zM412 594h1v11h-1zM430 605h2v6h-2zM473 611h1v7h-1zM488 594h1v11h-1zM542 594h1v11h-1zM549 605h1v6h-1zM587 605h1v6h-1zM591 605h1v6h-1zM611 605h1v6h-1zM650 605h1v6h-1zM681 611h1v7h-1zM745 594h1v11h-1zM756 605h1v6h-1zM814 594h1v11h-1zM849 611h1v7h-1zM936 605h1v6h-1zM944 605h1v6h-1zM1019 605h1v6h-1zM1040 594h1v11h-1zM1044 594h3v11h-3zM1067 594h1v11h-1zM1079 605h1v6h-1z"/>
<path fill="#0696c6" d="M121 611h2v7h-2zM133 605h3v6h-3zM148 605h1v6h-1zM189 611h1v7h-1zM203 605h1v6h-1zM234 605h3v6h-3zM251 611h1v7h-1zM255 611h4v7h-4zM281 605h1v6h-1zM325 611h1v7h-1zM376 611h1v7h-1zM433 605h1v6h-1zM456 605h1v6h-1zM460 605h1v6h-1zM469 605h1v6h-1zM471 605h1v6h-1zM530 605h2v6h-2zM572 605h1v6h-1zM611 611h1v7h-1zM614 605h3v6h-3zM641 605h1v6h-1zM650 611h1v7h-1zM653 605h2v6h-2zM693 605h1v6h-1zM694 605h1v6h-1zM756 611h1v7h-1zM762 611h1v7h-1zM831 605h1v6h-1zM843 605h1v6h-1zM880 611h1v7h-1zM908 605h3v6h-3zM936 611h1v7h-1zM950 605h2v6h-2zM960 605h1v6h-1zM976 611h1v7h-1zM1008 605h1v6h-1zM1019 611h1v7h-1zM1032 605h1v6h-1zM1036 605h1v6h-1zM1048 605h2v6h-2z"/>
<path fill="#068ade" d="M124 584h1v10h-1zM124 594h1v11h-1zM130 594h1v11h-1zM137 594h1v11h-1zM215 605h1v6h-1zM215 611h1v7h-1zM226 594h1v11h-1zM234 594h3v11h-3zM263 594h1v11h-1zM264 594h1v11h-1zM270 594h2v11h-2zM282 594h3v11h-3zM293 594h1v11h-1zM312 605h2v6h-2zM312 611h2v7h-2zM316 605h1v6h-1zM342 584h1v10h-1zM400 605h1v6h-1zM410 594h2v11h-2zM412 584h1v10h-1zM436 605h1v6h-1zM450 605h1v6h-1zM451 594h2v11h-2zM457 594h2v11h-2zM459 584h1v10h-1zM460 594h1v11h-1zM461 594h1v11h-1zM465 605h1v6h-1zM467 594h1v11h-1zM473 605h1v6h-1zM483 584h1v10h-1zM488 584h1v10h-1zM494 584h2v10h-2zM500 594h1v11h-1zM502 584h3v10h-3zM511 605h2v6h-2zM523 605h1v6h-1zM542 584h1v10h-1zM545 594h1v11h-1zM562 594h1v11h-1zM582 594h1v11h-1zM585 594h1v11h-1zM589 594h1v11h-1zM621 594h1v11h-1zM635 594h1v11h-1zM636 605h1v6h-1zM641 594h1v11h-1zM666 605h1v6h-1zM666 611h1v7h-1zM674 584h4v10h-4zM681 605h1v6h-1zM699 594h1v11h-1zM701 594h1v11h-1zM716 584h1v10h-1zM731 594h1v11h-1zM735 594h3v11h-3zM745 584h1v10h-1zM753 594h1v11h-1zM759 605h1v6h-1zM760 594h1v11h-1zM778 594h1v11h-1zM782 605h1v6h-1zM810 594h1v11h-1zM811 584h2v10h-2zM814 584h1v10h-1zM816 594h1v11h-1zM823 584h1v10h-1zM823 594h1v11h-1zM849 605h1v6h-1zM854 594h1v11h-1zM885 594h3v11h-3zM893 594h1v11h-1zM905 584h1v10h-1zM905 594h1v11h-1zM914 584h1v10h-1zM955 605h2v6h-2zM957 584h1v10h-1zM957 594h1v11h-1zM960 584h1v10h-1zM960 594h1v11h-1zM971 584h1v10h-1zM971 594h1v11h-1zM984 594h1v11h-1zM1040 584h1v10h-1zM1044 584h3v10h-3zM1048 594h2v11h-2zM1057 605h1v6h-1zM1067 584h1v10h-1z"/>
<path fill="#12ae8a" d="M128 638h1v9h-1zM148 638h1v9h-1zM152 638h1v9h-1zM153 638h1v9h-1zM158 638h1v9h-1zM199 630h4v8h-4zM232 630h1v8h-1zM238 630h1v8h-1zM255 638h4v9h-4zM259 638h1v9h-1zM263 630h1v8h-1zM269 630h1v8h-1zM274 630h1v8h-1zM293 638h1v9h-1zM314 630h1v8h-1zM331 630h1v8h-1zM333 630h2v8h-2zM341 630h1v8h-1zM343 630h1v8h-1zM346 630h2v8h-2zM349 638h2v9h-2zM362 630h1v8h-1zM364 638h1v9h-1zM376 638h1v9h-1zM385 630h2v8h-2zM389 638h2v9h-2zM391 630h1v8h-1zM393 638h1v9h-1zM394 618h1v12h-1zM394 630h1v8h-1zM410 630h2v8h-2zM414 638h2v9h-2zM427 638h3v9h-3zM436 638h1v9h-1zM439 630h1v8h-1zM456 638h1v9h-1zM472 630h1v8h-1zM476 630h1v8h-1zM477 630h2v8h-2zM509 630h1v8h-1zM525 630h1v8h-1zM541 638h1v9h-1zM549 630h1v8h-1zM557 630h3v8h-3zM568 638h1v9h-1zM578 638h3v9h-3zM583 630h1v8h-1zM619 638h2v9h-2zM621 630h1v8h-1zM623 638h1v9h-1zM625 630h1v8h-1zM662 638h2v9h-2zM666 638h1v9h-1zM711 630h1v8h-1zM713 618h1v12h-1zM730 630h1v8h-1zM735 630h3v8h-3zM738 630h1v8h-1zM747 638h1v9h-1zM752 630h1v8h-1zM755 630h1v8h-1zM761 630h1v8h-1zM833 630h1v8h-1zM834 638h1v9h-1zM835 630h1v8h-1zM836 630h2v8h-2zM862 630h1v8h-1zM866 630h1v8h-1zM871 638h2v9h-2zM890 630h1v8h-1zM893 630h1v8h-1zM933 630h1v8h-1zM934 630h1v8h-1zM936 638h1v9h-1zM940 630h1v8h-1zM947 638h2v9h-2zM950 630h2v8h-2zM1005 630h1v8h-1zM1023 638h1v9h-1zM1057 638h1v9h-1zM1063 630h1v8h-1zM1068 630h1v8h-1zM1075 618h1v12h-1zM1076 630h1v8h-1z"/>
<path fill="#1ec672" d="M128 647h1v8h-1zM152 647h1v8h-1zM276 647h2v8h-2zM732 638h2v9h-2zM766 647h1v8h-1zM1011 647h2v8h-2z"/>
<path fill="#4ed242" d="M128 664h1v12h-1zM154 655h1v9h-1zM267 664h1v12h-1zM320 655h3v9h-3zM343 664h1v12h-1zM356 655h1v9h-1zM388 655h1v9h-1zM631 655h2v9h-2zM679 655h1v9h-1zM782 664h1v12h-1zM937 664h1v12h-1zM982 655h1v9h-1z"/>
<path fill="#1242f6" d="M130 576h1v8h-1zM137 576h1v8h-1zM168 568h1v8h-1zM177 576h1v8h-1zM230 568h2v8h-2zM270 576h2v8h-2zM274 576h1v8h-1zM282 576h3v8h-3zM299 576h1v8h-1zM330 568h1v8h-1zM336 568h4v8h-4zM341 568h1v8h-1zM363 568h1v8h-1zM392 568h1v8h-1zM412 552h1v8h-1zM464 568h1v8h-1zM488 568h1v8h-1zM542 568h1v8h-1zM551 576h1v8h-1zM562 560h1v8h-1zM589 576h1v8h-1zM590 576h1v8h-1zM600 576h3v8h-3zM606 576h1v8h-1zM635 560h1v8h-1zM639 576h1v8h-1zM694 576h1v8h-1zM731 576h1v8h-1zM741 576h1v8h-1zM745 560h1v8h-1zM753 576h1v8h-1zM754 576h1v8h-1zM790 576h1v8h-1zM817 576h1v8h-1zM823 560h1v8h-1zM823 576h1v8h-1zM829 568h1v8h-1zM867 576h1v8h-1zM881 576h1v8h-1zM897 568h3v8h-3zM902 576h2v8h-2zM959 576h1v8h-1zM978 568h1v8h-1zM982 576h1v8h-1zM984 576h1v8h-1zM986 576h3v8h-3zM1038 568h1v8h-1zM1040 568h1v8h-1zM1044 560h3v8h-3zM1062 576h1v8h-1z"/>
<path fill="#068aea" d="M130 584h1v10h-1zM133 594h3v11h-3zM137 584h1v10h-1zM176 594h1v11h-1zM184 594h1v11h-1zM196 594h1v11h-1zM234 584h3v10h-3zM242 594h3v11h-3zM262 594h1v11h-1zM263 584h1v10h-1zM270 584h2v10h-2zM282 584h3v10h-3zM287 594h3v11h-3zM299 594h1v11h-1zM333 594h2v11h-2zM348 594h1v11h-1zM355 594h1v11h-1zM416 594h1v11h-1zM457 584h2v10h-2zM461 584h1v10h-1zM500 584h1v10h-1zM538 594h1v11h-1zM545 584h1v10h-1zM551 594h1v11h-1zM562 584h1v10h-1zM582 584h1v10h-1zM589 584h1v10h-1zM621 584h1v10h-1zM658 594h1v11h-1zM695 594h3v11h-3zM699 584h1v10h-1zM701 584h1v10h-1zM731 584h1v10h-1zM735 584h3v10h-3zM742 594h1v11h-1zM743 594h1v11h-1zM753 584h1v10h-1zM760 584h1v10h-1zM778 584h1v10h-1zM790 594h1v11h-1zM813 594h1v11h-1zM831 594h1v11h-1zM832 594h1v11h-1zM833 594h1v11h-1zM843 594h1v11h-1zM847 594h2v11h-2zM854 584h1v10h-1zM862 594h1v11h-1zM865 594h1v11h-1zM885 584h3v10h-3zM891 594h1v11h-1zM892 594h1v11h-1zM893 584h1v10h-1zM916 594h4v11h-4zM933 594h1v11h-1zM959 594h1v11h-1zM980 594h2v11h-2zM1016 594h1v11h-1zM1017 594h1v11h-1zM1031 594h1v11h-1zM1048 584h2v10h-2z"/>
<path fill="#72de36" d="M131 664h1v12h-1zM142 664h2v12h-2zM177 664h1v12h-1zM190 664h3v12h-3zM197 664h1v12h-1zM328 664h2v12h-2zM346 664h2v12h-2zM362 664h1v12h-1zM389 664h2v12h-2zM416 664h1v12h-1zM419 664h4v12h-4zM423 664h1v12h-1zM430 664h2v12h-2zM433 664h1v12h-1zM466 664h1v12h-1zM469 664h1v12h-1zM471 664h1v12h-1zM592 664h1v12h-1zM607 664h3v12h-3zM703 664h1v12h-1zM739 664h1v12h-1zM740 664h1v12h-1zM774 664h1v12h-1zM795 664h2v12h-2zM832 664h1v12h-1zM857 664h1v12h-1zM871 664h2v12h-2zM960 664h1v12h-1zM983 664h1v12h-1zM997 664h3v12h-3zM1030 664h1v12h-1z"/>
<path fill="#eaba06" d="M131 681h1v5h-1zM147 681h1v5h-1zM198 686h1v4h-1zM199 681h4v5h-4zM210 681h2v5h-2zM291 681h2v5h-2zM294 681h1v5h-1zM330 681h1v5h-1zM363 681h1v5h-1zM393 686h1v4h-1zM396 681h1v5h-1zM483 681h1v5h-1zM560 686h1v4h-1zM640 681h1v5h-1zM715 681h1v5h-1zM742 681h1v5h-1zM747 686h1v4h-1zM756 686h1v4h-1zM799 681h1v5h-1zM811 681h2v5h-2zM856 686h1v4h-1zM884 686h1v4h-1zM959 681h1v5h-1zM1039 681h1v5h-1zM1062 681h1v5h-1z"/>
<path fill="#067eea" d="M133 584h3v10h-3zM179 594h1v11h-1zM196 584h1v10h-1zM198 594h1v11h-1zM212 594h3v11h-3zM220 594h1v11h-1zM226 584h1v10h-1zM242 584h3v10h-3zM262 584h1v10h-1zM264 584h1v10h-1zM287 584h3v10h-3zM293 584h1v10h-1zM375 594h1v11h-1zM376 594h1v11h-1zM410 584h2v10h-2zM436 594h1v11h-1zM451 584h2v10h-2zM460 584h1v10h-1zM467 584h1v10h-1zM468 594h1v11h-1zM519 594h1v11h-1zM528 594h2v11h-2zM551 584h1v10h-1zM585 584h1v10h-1zM617 594h1v11h-1zM635 584h1v10h-1zM641 584h1v10h-1zM657 594h1v11h-1zM658 584h1v10h-1zM783 594h4v11h-4zM790 584h1v10h-1zM810 584h1v10h-1zM816 584h1v10h-1zM828 594h1v11h-1zM833 584h1v10h-1zM847 584h2v10h-2zM859 594h1v11h-1zM865 584h1v10h-1zM875 594h1v11h-1zM883 594h1v11h-1zM891 584h1v10h-1zM908 594h3v11h-3zM916 584h4v10h-4zM942 594h2v11h-2zM946 594h1v11h-1zM969 594h1v11h-1zM980 584h2v10h-2zM984 584h1v10h-1zM995 594h1v11h-1zM1008 594h1v11h-1zM1016 584h1v10h-1z"/>
<path fill="#4ed24e" d="M142 655h2v9h-2zM150 655h2v9h-2zM225 655h1v9h-1zM249 655h2v9h-2zM263 655h1v9h-1zM299 655h1v9h-1zM360 664h1v12h-1zM413 655h1v9h-1zM417 655h2v9h-2zM423 655h1v9h-1zM502 655h3v9h-3zM673 655h1v9h-1zM766 664h1v12h-1zM780 655h1v9h-1zM799 655h1v9h-1zM862 655h1v9h-1zM934 655h1v9h-1zM960 655h1v9h-1zM962 664h3v12h-3zM1062 655h1v9h-1zM1067 655h1v9h-1zM1076 655h1v9h-1z"/>
<path fill="#1e1eea" d="M148 568h1v8h-1zM245 552h1v8h-1zM265 568h1v8h-1zM276 568h2v8h-2zM400 568h1v8h-1zM416 576h1v8h-1zM430 568h2v8h-2zM455 560h1v8h-1zM509 552h1v8h-1zM523 560h1v8h-1zM587 568h1v8h-1zM653 539h2v13h-2zM658 539h1v13h-1zM718 560h1v8h-1zM781 560h1v8h-1zM833 552h1v8h-1zM838 560h1v8h-1zM839 527h1v12h-1zM870 560h1v8h-1zM881 527h1v12h-1zM883 539h1v13h-1zM900 560h2v8h-2zM905 527h1v12h-1zM960 527h1v12h-1zM1016 552h1v8h-1zM1018 539h1v13h-1z"/>
<path fill="#0672f6" d="M148 584h1v10h-1zM179 584h1v10h-1zM190 584h3v10h-3zM198 584h1v10h-1zM205 584h1v10h-1zM215 594h1v11h-1zM255 594h4v11h-4zM272 594h1v11h-1zM290 584h1v10h-1zM303 584h1v10h-1zM328 594h2v11h-2zM375 584h1v10h-1zM376 584h1v10h-1zM400 594h1v11h-1zM436 584h1v10h-1zM450 594h1v11h-1zM522 584h1v10h-1zM524 594h1v11h-1zM617 584h1v10h-1zM657 584h1v10h-1zM681 594h1v11h-1zM714 584h1v10h-1zM717 594h1v11h-1zM763 584h3v10h-3zM788 584h1v10h-1zM794 584h1v10h-1zM858 584h1v10h-1zM859 584h1v10h-1zM876 584h1v10h-1zM883 584h1v10h-1zM894 584h1v10h-1zM936 584h1v10h-1zM944 594h1v11h-1zM976 584h1v10h-1zM1050 584h3v10h-3zM1063 584h1v10h-1zM1078 584h1v10h-1z"/>
<path fill="#067ef6" d="M148 594h1v11h-1zM176 584h1v10h-1zM184 584h1v10h-1zM190 594h3v11h-3zM205 594h1v11h-1zM212 584h3v10h-3zM220 584h1v10h-1zM290 594h1v11h-1zM299 584h1v10h-1zM303 594h1v11h-1zM312 594h2v11h-2zM333 584h2v10h-2zM348 584h1v10h-1zM355 584h1v10h-1zM416 584h1v10h-1zM468 584h1v10h-1zM519 584h1v10h-1zM522 594h1v11h-1zM528 584h2v10h-2zM538 584h1v10h-1zM695 584h3v10h-3zM714 594h1v11h-1zM742 584h1v10h-1zM743 584h1v10h-1zM763 594h3v11h-3zM783 584h4v10h-4zM788 594h1v11h-1zM794 594h1v11h-1zM813 584h1v10h-1zM828 584h1v10h-1zM831 584h1v10h-1zM832 584h1v10h-1zM843 584h1v10h-1zM858 594h1v11h-1zM862 584h1v10h-1zM875 584h1v10h-1zM876 594h1v11h-1zM884 594h1v11h-1zM892 584h1v10h-1zM894 594h1v11h-1zM908 584h3v10h-3zM933 584h1v10h-1zM936 594h1v11h-1zM942 584h2v10h-2zM946 584h1v10h-1zM959 584h1v10h-1zM969 584h1v10h-1zM976 594h1v11h-1zM995 584h1v10h-1zM1008 584h1v10h-1zM1017 584h1v10h-1zM1031 584h1v10h-1zM1050 594h3v11h-3zM1057 594h1v11h-1zM1063 594h1v11h-1zM1078 594h1v11h-1z"/>
<path fill="#12a2ae" d="M152 618h1v12h-1zM205 618h1v12h-1zM222 611h1v7h-1zM238 618h1v12h-1zM246 618h1v12h-1zM270 611h2v7h-2zM282 611h3v7h-3zM304 618h2v12h-2zM340 611h1v7h-1zM348 618h1v12h-1zM356 605h1v6h-1zM364 618h1v12h-1zM380 611h3v7h-3zM384 611h1v7h-1zM391 618h1v12h-1zM399 618h1v12h-1zM404 618h1v12h-1zM404 630h1v8h-1zM417 611h2v7h-2zM470 618h1v12h-1zM472 618h1v12h-1zM494 611h2v7h-2zM502 611h3v7h-3zM519 618h1v12h-1zM569 611h2v7h-2zM607 618h3v12h-3zM621 618h1v12h-1zM646 618h2v12h-2zM653 618h2v12h-2zM662 618h2v12h-2zM674 611h4v7h-4zM684 618h1v12h-1zM699 611h1v7h-1zM729 611h1v7h-1zM742 618h1v12h-1zM744 611h1v7h-1zM749 611h1v7h-1zM752 618h1v12h-1zM776 618h1v12h-1zM787 618h1v12h-1zM788 618h1v12h-1zM835 618h1v12h-1zM839 605h1v6h-1zM858 618h1v12h-1zM862 618h1v12h-1zM905 611h1v7h-1zM946 618h1v12h-1zM950 618h2v12h-2zM972 618h1v12h-1zM976 618h1v12h-1zM980 618h2v12h-2zM1000 611h1v7h-1zM1014 611h1v7h-1zM1036 618h1v12h-1zM1037 611h1v7h-1zM1044 611h3v7h-3zM1058 611h2v7h-2z"/>
<path fill="#12a296" d="M152 630h1v8h-1zM255 630h4v8h-4zM259 630h1v8h-1zM346 618h2v12h-2zM389 630h2v8h-2zM417 618h2v12h-2zM445 618h1v12h-1zM520 618h2v12h-2zM539 618h1v12h-1zM542 618h1v12h-1zM662 630h2v8h-2zM666 630h1v8h-1zM767 618h1v12h-1zM839 618h1v12h-1zM846 618h1v12h-1zM863 618h2v12h-2zM973 618h2v12h-2zM1057 630h1v8h-1zM1076 618h1v12h-1z"/>
<path fill="#12ba7e" d="M166 630h1v8h-1zM176 630h1v8h-1zM199 638h4v9h-4zM232 638h1v9h-1zM242 630h3v8h-3zM263 638h1v9h-1zM264 638h1v9h-1zM269 638h1v9h-1zM274 638h1v9h-1zM280 630h1v8h-1zM298 630h1v8h-1zM299 630h1v8h-1zM314 638h1v9h-1zM343 638h1v9h-1zM346 638h2v9h-2zM356 630h1v8h-1zM362 638h1v9h-1zM370 630h1v8h-1zM371 630h1v8h-1zM391 638h1v9h-1zM410 638h2v9h-2zM439 638h1v9h-1zM477 638h2v9h-2zM498 630h2v8h-2zM528 630h2v8h-2zM536 630h1v8h-1zM549 638h1v9h-1zM557 638h3v9h-3zM581 630h1v8h-1zM583 638h1v9h-1zM625 638h1v9h-1zM640 630h1v8h-1zM672 630h1v8h-1zM703 630h1v8h-1zM711 638h1v9h-1zM719 638h4v9h-4zM724 630h1v8h-1zM730 638h1v9h-1zM732 630h2v8h-2zM735 638h3v9h-3zM744 630h1v8h-1zM752 638h1v9h-1zM754 630h1v8h-1zM772 638h1v9h-1zM777 630h1v8h-1zM792 630h2v8h-2zM798 638h1v9h-1zM799 630h1v8h-1zM816 630h1v8h-1zM823 630h1v8h-1zM825 630h1v8h-1zM835 638h1v9h-1zM836 638h2v9h-2zM893 638h1v9h-1zM933 638h1v9h-1zM934 638h1v9h-1zM940 638h1v9h-1zM950 638h2v9h-2zM952 630h1v8h-1zM979 630h1v8h-1zM1001 630h1v8h-1zM1005 638h1v9h-1zM1061 630h1v8h-1zM1063 638h1v9h-1zM1068 638h1v9h-1zM1071 638h1v9h-1z"/>
<path fill="#1ec666" d="M166 638h1v9h-1zM174 647h2v8h-2zM233 647h1v8h-1zM249 638h2v9h-2zM349 647h2v8h-2zM363 638h1v9h-1zM368 638h1v9h-1zM376 647h1v8h-1zM395 647h1v8h-1zM404 647h1v8h-1zM440 647h2v8h-2zM445 638h1v9h-1zM469 647h1v8h-1zM486 647h1v8h-1zM500 638h1v9h-1zM540 638h1v9h-1zM545 638h1v9h-1zM549 647h1v8h-1zM590 638h1v9h-1zM591 647h1v8h-1zM649 638h1v9h-1zM754 638h1v9h-1zM782 647h1v8h-1zM787 647h1v8h-1zM811 638h2v9h-2zM814 638h1v9h-1zM854 638h1v9h-1zM867 638h1v9h-1zM962 647h3v8h-3zM1010 638h1v9h-1zM1057 647h1v8h-1zM1063 647h1v8h-1zM1067 638h1v9h-1zM1077 647h1v8h-1z"/>
<path fill="#8ade2a" d="M166 664h1v12h-1zM171 664h2v12h-2zM300 664h2v12h-2zM302 664h1v12h-1zM363 664h1v12h-1zM483 664h1v12h-1zM562 664h1v12h-1zM627 664h1v12h-1zM628 664h2v12h-2zM678 664h1v12h-1zM734 664h1v12h-1zM801 664h1v12h-1zM854 664h1v12h-1zM861 664h1v12h-1zM868 664h2v12h-2zM897 664h3v12h-3zM1076 664h1v12h-1z"/>
<path fill="#f68a06" d="M166 686h1v4h-1zM230 686h2v4h-2zM239 686h3v4h-3zM279 686h1v4h-1zM296 686h2v4h-2zM341 686h1v4h-1zM342 686h1v4h-1zM356 686h1v4h-1zM532 686h3v4h-3zM561 686h1v4h-1zM627 686h1v4h-1zM665 686h1v4h-1zM674 686h4v4h-4zM702 686h1v4h-1zM708 686h1v4h-1zM725 686h1v4h-1zM732 686h2v4h-2zM775 686h1v4h-1zM815 686h1v4h-1zM839 686h1v4h-1zM957 686h1v4h-1zM965 686h1v4h-1zM1014 686h1v4h-1zM1061 686h1v4h-1zM1074 686h1v4h-1z"/>
<path fill="#065af6" d="M168 576h1v8h-1zM230 576h2v8h-2zM255 584h4v10h-4zM279 568h1v8h-1zM330 576h1v8h-1zM341 576h1v8h-1zM363 576h1v8h-1zM384 568h1v8h-1zM400 584h1v10h-1zM404 584h1v10h-1zM412 576h1v8h-1zM464 576h1v8h-1zM674 568h4v8h-4zM681 584h1v10h-1zM702 568h1v8h-1zM829 576h1v8h-1zM897 576h3v8h-3zM979 568h1v8h-1zM1027 576h2v8h-2zM1038 576h1v8h-1zM1040 576h1v8h-1zM1067 568h1v8h-1z"/>
<path fill="#5ad242" d="M169 664h1v12h-1zM275 664h1v12h-1zM511 664h2v12h-2zM554 664h3v12h-3zM591 664h1v12h-1zM641 664h1v12h-1zM702 655h1v9h-1zM719 664h4v12h-4zM773 655h1v9h-1zM840 664h1v12h-1zM866 664h1v12h-1zM908 664h3v12h-3zM975 664h1v12h-1zM1074 655h1v9h-1zM1077 664h1v12h-1z"/>
<path fill="#1eba72" d="M176 638h1v9h-1zM198 647h1v8h-1zM242 638h3v9h-3zM252 647h3v8h-3zM280 638h1v9h-1zM298 638h1v9h-1zM299 638h1v9h-1zM343 647h1v8h-1zM356 638h1v9h-1zM370 638h1v9h-1zM371 638h1v9h-1zM373 647h1v8h-1zM498 638h2v9h-2zM528 638h2v9h-2zM552 647h1v8h-1zM581 638h1v9h-1zM617 647h1v8h-1zM672 638h1v9h-1zM747 647h1v8h-1zM767 630h1v8h-1zM773 630h1v8h-1zM774 647h1v8h-1zM777 638h1v9h-1zM799 638h1v9h-1zM816 638h1v9h-1zM823 638h1v9h-1zM979 638h1v9h-1zM1001 638h1v9h-1zM1061 638h1v9h-1zM1075 630h1v8h-1z"/>
<path fill="#0606ba" d="M189 514h1v6h-1z"/>
<path fill="#66de42" d="M189 664h1v12h-1zM199 664h4v12h-4zM242 664h3v12h-3zM274 664h1v12h-1zM352 664h1v12h-1zM374 664h1v12h-1zM375 664h1v12h-1zM379 664h1v12h-1zM414 664h2v12h-2zM436 664h1v12h-1zM468 664h1v12h-1zM486 664h1v12h-1zM519 664h1v12h-1zM552 664h1v12h-1zM553 664h1v12h-1zM617 664h1v12h-1zM666 664h1v12h-1zM787 664h1v12h-1zM824 664h1v12h-1zM893 664h1v12h-1zM961 664h1v12h-1zM995 664h1v12h-1zM1019 664h1v12h-1z"/>
<path fill="#66de36" d="M203 664h1v12h-1zM385 664h2v12h-2zM387 664h1v12h-1zM395 664h1v12h-1zM820 664h2v12h-2zM831 664h1v12h-1z"/>
<path fill="#0666f6" d="M215 584h1v10h-1zM272 584h1v10h-1zM273 576h1v8h-1zM279 576h1v8h-1zM312 584h2v10h-2zM328 584h2v10h-2zM384 576h1v8h-1zM404 594h1v11h-1zM450 584h1v10h-1zM524 584h1v10h-1zM545 576h1v8h-1zM674 576h4v8h-4zM686 576h1v8h-1zM702 576h1v8h-1zM717 584h1v10h-1zM813 576h1v8h-1zM814 576h1v8h-1zM884 584h1v10h-1zM944 584h1v10h-1zM979 576h1v8h-1zM1047 576h1v8h-1zM1057 584h1v10h-1zM1067 576h1v8h-1zM1075 576h1v8h-1z"/>
<path fill="#124ef6" d="M222 576h1v8h-1zM242 576h3v8h-3zM273 568h1v8h-1zM412 560h1v8h-1zM412 568h1v8h-1zM467 576h1v8h-1zM545 568h1v8h-1zM706 576h2v8h-2zM728 576h1v8h-1zM748 576h1v8h-1zM813 568h1v8h-1zM814 568h1v8h-1zM822 576h1v8h-1zM957 576h1v8h-1zM1015 576h1v8h-1zM1027 568h2v8h-2zM1047 568h1v8h-1zM1075 568h1v8h-1z"/>
<path fill="#f69606" d="M222 686h1v4h-1zM249 686h2v4h-2zM508 686h1v4h-1zM535 686h1v4h-1zM700 686h1v4h-1zM716 686h1v4h-1zM754 686h1v4h-1zM773 686h1v4h-1zM813 686h1v4h-1zM825 686h1v4h-1zM885 686h3v4h-3zM982 686h1v4h-1zM1038 686h1v4h-1z"/>
<path fill="#dede06" d="M232 676h1v5h-1zM282 676h3v5h-3zM457 676h2v5h-2zM461 676h1v5h-1zM466 676h1v5h-1zM468 676h1v5h-1zM550 676h1v5h-1zM589 676h1v5h-1zM664 676h1v5h-1zM701 676h1v5h-1zM753 676h1v5h-1zM781 676h1v5h-1zM798 676h1v5h-1zM986 676h3v5h-3zM1042 676h2v5h-2zM1058 676h2v5h-2z"/>
<path fill="#12ba72" d="M238 638h1v9h-1zM249 630h2v8h-2zM270 638h2v9h-2zM302 638h1v9h-1zM331 638h1v9h-1zM333 638h2v9h-2zM341 638h1v9h-1zM342 630h1v8h-1zM363 630h1v8h-1zM368 630h1v8h-1zM385 638h2v9h-2zM394 638h1v9h-1zM417 638h2v9h-2zM437 630h2v8h-2zM445 630h1v8h-1zM472 638h1v9h-1zM476 638h1v9h-1zM500 630h1v8h-1zM509 638h1v9h-1zM525 638h1v9h-1zM536 638h1v9h-1zM540 630h1v8h-1zM545 630h1v8h-1zM590 630h1v8h-1zM621 638h1v9h-1zM631 630h2v8h-2zM640 638h1v9h-1zM649 630h1v8h-1zM703 638h1v9h-1zM724 638h1v9h-1zM738 638h1v9h-1zM744 638h1v9h-1zM746 638h1v9h-1zM755 638h1v9h-1zM761 638h1v9h-1zM780 638h1v9h-1zM792 638h2v9h-2zM811 630h2v8h-2zM814 630h1v8h-1zM825 638h1v9h-1zM833 638h1v9h-1zM854 630h1v8h-1zM862 638h1v9h-1zM866 638h1v9h-1zM867 630h1v8h-1zM890 638h1v9h-1zM945 638h1v9h-1zM952 638h1v9h-1zM971 638h1v9h-1zM1010 630h1v8h-1zM1060 630h1v8h-1zM1067 630h1v8h-1zM1076 638h1v9h-1z"/>
<path fill="#c6ea06" d="M251 676h1v5h-1zM393 676h1v5h-1zM560 676h1v5h-1zM638 676h1v5h-1zM756 676h1v5h-1zM884 676h1v5h-1z"/>
<path fill="#96ea2a" d="M279 664h1v12h-1zM502 664h3v12h-3zM679 664h1v12h-1zM779 664h1v12h-1zM811 664h2v12h-2zM920 664h1v12h-1zM965 664h1v12h-1z"/>
<path fill="#0606ae" d="M281 514h1v6h-1z"/>
<path fill="#8aea2a" d="M296 664h2v12h-2zM425 664h2v12h-2zM825 664h1v12h-1zM996 664h1v12h-1z"/>
<path fill="#064ef6" d="M336 576h4v8h-4zM355 576h1v8h-1zM392 576h1v8h-1zM410 576h2v8h-2zM488 576h1v8h-1zM542 576h1v8h-1zM686 568h1v8h-1zM978 576h1v8h-1z"/>
<path fill="#2ad25a" d="M376 655h1v9h-1zM500 647h1v8h-1zM746 647h1v8h-1z"/>
<path fill="#5ade42" d="M396 655h1v9h-1zM557 664h3v12h-3zM750 664h2v12h-2zM1013 664h1v12h-1z"/>
<rect x="136" y="689" width="1" height="2" fill="#444"/>
<rect x="177" y="689" width="1" height="2" fill="#444"/>
<rect x="218" y="689" width="1" height="2" fill="#444"/>
<rect x="259" y="689" width="1" height="2" fill="#444"/>
<rect x="300" y="689" width="1" height="2" fill="#444"/>
<rect x="341" y="689" width="1" height="2" fill="#444"/>
<rect x="382" y="689" width="1" height="2" fill="#444"/>
<rect x="423" y="689" width="1" height="2" fill="#444"/>
<rect x="464" y="689" width="1" height="2" fill="#444"/>
<rect x="505" y="689" width="1" height="2" fill="#444"/>
<rect x="546" y="689" width="1" height="2" fill="#444"/>
<rect x="588" y="689" width="1" height="2" fill="#444"/>
<rect x="629" y="689" width="1" height="2" fill="#444"/>
<rect x="670" y="689" width="1" height="2" fill="#444"/>
<rect x="711" y="689" width="1" height="2" fill="#444"/>
<rect x="752" y="689" width="1" height="2" fill="#444"/>
<rect x="793" y="689" width="1" height="2" fill="#444"/>
<rect x="834" y="689" width="1" height="2" fill="#444"/>
<rect x="875" y="689" width="1" height="2" fill="#444"/>
<rect x="916" y="689" width="1" height="2" fill="#444"/>
<rect x="957" y="689" width="1" height="2" fill="#444"/>
<rect x="998" y="689" width="1" height="2" fill="#444"/>
<rect x="1039" y="689" width="1" height="2" fill="#444"/>
<rect x="91" y="685" width="4" height="1" fill="#333333"/>
<rect x="91" y="679" width="4" height="1" fill="#333333"/>
<rect x="91" y="674" width="4" height="1" fill="#333333"/>
<rect x="91" y="669" width="4" height="1" fill="#333333"/>
<rect x="91" y="666" width="4" height="1" fill="#333333"/>
<rect x="91" y="663" width="4" height="1" fill="#333333"/>
<rect x="91" y="660" width="4" height="1" fill="#333333"/>
<rect x="87" y="658" width="8" height="1" fill="#333333"/>
<rect x="91" y="642" width="4" height="1" fill="#333333"/>
<rect x="91" y="633" width="4" height="1" fill="#333333"/>
<rect x="91" y="627" width="4" height="1" fill="#333333"/>
<rect x="91" y="622" width="4" height="1" fill="#333333"/>
<rect x="91" y="617" width="4" height="1" fill="#333333"/>
<rect x="91" y="614" width="4" height="1" fill="#333333"/>
<rect x="91" y="611" width="4" height="1" fill="#333333"/>
<rect x="91" y="608" width="4" height="1" fill="#333333"/>
<rect x="87" y="606" width="8" height="1" fill="#333333"/>
<rect x="91" y="590" width="4" height="1" fill="#333333"/>
<rect x="91" y="581" width="4" height="1" fill="#333333"/>
<rect x="91" y="575" width="4" height="1" fill="#333333"/>
<rect x="91" y="570" width="4" height="1" fill="#333333"/>
<rect x="91" y="565" width="4" height="1" fill="#333333"/>
<rect x="91" y="562" width="4" height="1" fill="#333333"/>
<rect x="91" y="559" width="4" height="1" fill="#333333"/>
<rect x="91" y="556" width="4" height="1" fill="#333333"/>
<rect x="87" y="554" width="8" height="1" fill="#333333"/>
<rect x="91" y="538" width="4" height="1" fill="#333333"/>
<rect x="91" y="529" width="4" height="1" fill="#333333"/>
<rect x="91" y="523" width="4" height="1" fill="#333333"/>
<rect x="91" y="518" width="4" height="1" fill="#333333"/>
<rect x="91" y="513" width="4" height="1" fill="#333333"/>
<text transform="translate(50.5,639.03) rotate(-90)" x="0" y="0" font-size="12.5" textLength="73.31" lengthAdjust="spacingAndGlyphs" fill="#444444">Energy (keV)</text>
<text x="58.27" y="562.0" font-size="12.5" textLength="15.06" lengthAdjust="spacingAndGlyphs" fill="#444444" >10</text>
<text x="74.32" y="555.8" font-size="12.5" textLength="6.84" lengthAdjust="spacingAndGlyphs" fill="#444444" >4</text>
<text x="58.27" y="614.0" font-size="12.5" textLength="15.06" lengthAdjust="spacingAndGlyphs" fill="#444444" >10</text>
<text x="74.10" y="607.8" font-size="12.5" textLength="7.27" lengthAdjust="spacingAndGlyphs" fill="#444444" >3</text>
<text x="59.57" y="666.0" font-size="12.5" textLength="15.06" lengthAdjust="spacingAndGlyphs" fill="#444444" >10</text>
<text x="75.36" y="659.8" font-size="12.5" textLength="5.98" lengthAdjust="spacingAndGlyphs" fill="#444444" >2</text>
<rect x="95" y="695" width="986" height="16" fill="#333"/>
<rect x="97" y="696" width="220" height="14" fill="#00ff00"/>
<rect x="318" y="696" width="264" height="14" fill="#ff0000"/>
<rect x="583" y="696" width="478" height="14" fill="#00ff00"/>
<rect x="1062" y="696" width="18" height="14" fill="#ff0000"/>
<rect x="136" y="711" width="1" height="4" fill="#333333"/>
<rect x="177" y="711" width="1" height="4" fill="#333333"/>
<rect x="218" y="711" width="1" height="8" fill="#333333"/>
<rect x="259" y="711" width="1" height="4" fill="#333333"/>
<rect x="300" y="711" width="1" height="4" fill="#333333"/>
<rect x="341" y="711" width="1" height="8" fill="#333333"/>
<rect x="382" y="711" width="1" height="4" fill="#333333"/>
<rect x="423" y="711" width="1" height="4" fill="#333333"/>
<rect x="464" y="711" width="1" height="8" fill="#333333"/>
<rect x="505" y="711" width="1" height="4" fill="#333333"/>
<rect x="546" y="711" width="1" height="4" fill="#333333"/>
<rect x="588" y="711" width="1" height="8" fill="#333333"/>
<rect x="629" y="711" width="1" height="4" fill="#333333"/>
<rect x="670" y="711" width="1" height="4" fill="#333333"/>
<rect x="711" y="711" width="1" height="8" fill="#333333"/>
<rect x="752" y="711" width="1" height="4" fill="#333333"/>
<rect x="793" y="711" width="1" height="4" fill="#333333"/>
<rect x="834" y="711" width="1" height="8" fill="#333333"/>
<rect x="875" y="711" width="1" height="4" fill="#333333"/>
<rect x="916" y="711" width="1" height="4" fill="#333333"/>
<rect x="957" y="711" width="1" height="8" fill="#333333"/>
<rect x="998" y="711" width="1" height="4" fill="#333333"/>
<rect x="1039" y="711" width="1" height="4" fill="#333333"/>
<rect x="1080" y="711" width="1" height="8" fill="#333333"/>
<rect x="1092" y="30" width="12" height="191" fill="url(#cmap)"/>
<rect x="1104" y="29" width="1" height="192" fill="#333333"/>
<rect x="1092" y="226" width="12" height="191" fill="url(#cmap)"/>
<rect x="1104" y="225" width="1" height="192" fill="#333333"/>
<rect x="1092" y="515" width="12" height="177" fill="url(#cmap)"/>
<rect x="1104" y="514" width="1" height="178" fill="#333333"/>
<rect x="1104" y="29" width="9" height="1" fill="#333333"/>
<rect x="1104" y="87" width="9" height="1" fill="#333333"/>
<rect x="1104" y="69" width="5" height="1" fill="#333333"/>
<rect x="1104" y="59" width="5" height="1" fill="#333333"/>
<rect x="1104" y="52" width="5" height="1" fill="#333333"/>
<rect x="1104" y="46" width="5" height="1" fill="#333333"/>
<rect x="1104" y="42" width="5" height="1" fill="#333333"/>
<rect x="1104" y="38" width="5" height="1" fill="#333333"/>
<rect x="1104" y="34" width="5" height="1" fill="#333333"/>
<rect x="1104" y="32" width="5" height="1" fill="#333333"/>
<rect x="1104" y="144" width="9" height="1" fill="#333333"/>
<rect x="1104" y="127" width="5" height="1" fill="#333333"/>
<rect x="1104" y="117" width="5" height="1" fill="#333333"/>
<rect x="1104" y="110" width="5" height="1" fill="#333333"/>
<rect x="1104" y="104" width="5" height="1" fill="#333333"/>
<rect x="1104" y="99" width="5" height="1" fill="#333333"/>
<rect x="1104" y="96" width="5" height="1" fill="#333333"/>
<rect x="1104" y="92" width="5" height="1" fill="#333333"/>
<rect x="1104" y="89" width="5" height="1" fill="#333333"/>
<rect x="1104" y="202" width="9" height="1" fill="#333333"/>
<rect x="1104" y="185" width="5" height="1" fill="#333333"/>
<rect x="1104" y="174" width="5" height="1" fill="#333333"/>
<rect x="1104" y="167" width="5" height="1" fill="#333333"/>
<rect x="1104" y="162" width="5" height="1" fill="#333333"/>
<rect x="1104" y="157" width="5" height="1" fill="#333333"/>
<rect x="1104" y="153" width="5" height="1" fill="#333333"/>
<rect x="1104" y="150" width="5" height="1" fill="#333333"/>
<rect x="1104" y="147" width="5" height="1" fill="#333333"/>
<rect x="1104" y="219" width="5" height="1" fill="#333333"/>
<rect x="1104" y="215" width="5" height="1" fill="#333333"/>
<rect x="1104" y="211" width="5" height="1" fill="#333333"/>
<rect x="1104" y="207" width="5" height="1" fill="#333333"/>
<rect x="1104" y="205" width="5" height="1" fill="#333333"/>
<rect x="1104" y="225" width="9" height="1" fill="#333333"/>
<rect x="1104" y="282" width="9" height="1" fill="#333333"/>
<rect x="1104" y="265" width="5" height="1" fill="#333333"/>
<rect x="1104" y="255" width="5" height="1" fill="#333333"/>
<rect x="1104" y="248" width="5" height="1" fill="#333333"/>
<rect x="1104" y="242" width="5" height="1" fill="#333333"/>
<rect x="1104" y="238" width="5" height="1" fill="#333333"/>
<rect x="1104" y="234" width="5" height="1" fill="#333333"/>
<rect x="1104" y="230" width="5" height="1" fill="#333333"/>
<rect x="1104" y="227" width="5" height="1" fill="#333333"/>
<rect x="1104" y="339" width="9" height="1" fill="#333333"/>
<rect x="1104" y="322" width="5" height="1" fill="#333333"/>
<rect x="1104" y="312" width="5" height="1" fill="#333333"/>
<rect x="1104" y="305" width="5" height="1" fill="#333333"/>
<rect x="1104" y="299" width="5" height="1" fill="#333333"/>
<rect x="1104" y="295" width="5" height="1" fill="#333333"/>
<rect x="1104" y="291" width="5" height="1" fill="#333333"/>
<rect x="1104" y="288" width="5" height="1" fill="#333333"/>
<rect x="1104" y="285" width="5" height="1" fill="#333333"/>
<rect x="1104" y="397" width="9" height="1" fill="#333333"/>
<rect x="1104" y="379" width="5" height="1" fill="#333333"/>
<rect x="1104" y="369" width="5" height="1" fill="#333333"/>
<rect x="1104" y="362" width="5" height="1" fill="#333333"/>
<rect x="1104" y="357" width="5" height="1" fill="#333333"/>
<rect x="1104" y="352" width="5" height="1" fill="#333333"/>
<rect x="1104" y="348" width="5" height="1" fill="#333333"/>
<rect x="1104" y="345" width="5" height="1" fill="#333333"/>
<rect x="1104" y="342" width="5" height="1" fill="#333333"/>
<rect x="1104" y="414" width="5" height="1" fill="#333333"/>
<rect x="1104" y="409" width="5" height="1" fill="#333333"/>
<rect x="1104" y="406" width="5" height="1" fill="#333333"/>
<rect x="1104" y="402" width="5" height="1" fill="#333333"/>
<rect x="1104" y="399" width="5" height="1" fill="#333333"/>
<text x="1116.57" y="37.0" font-size="12.5" textLength="15.06" lengthAdjust="spacingAndGlyphs" fill="#444444" >10</text>
<rect x="1133.00" y="27.00" width="5" height="1" fill="#444444"/>
<text x="1139.17" y="30.8" font-size="12.5" textLength="7.46" lengthAdjust="spacingAndGlyphs" fill="#444444" >9</text>
<text x="1116.57" y="232.9" font-size="12.5" textLength="15.06" lengthAdjust="spacingAndGlyphs" fill="#444444" >10</text>
<rect x="1133.00" y="222.90" width="5" height="1" fill="#444444"/>
<text x="1139.17" y="226.7" font-size="12.5" textLength="7.46" lengthAdjust="spacingAndGlyphs" fill="#444444" >9</text>
<text x="1116.57" y="94.67" font-size="12.5" textLength="15.06" lengthAdjust="spacingAndGlyphs" fill="#444444" >10</text>
<rect x="1133.00" y="84.67" width="5" height="1" fill="#444444"/>
<text x="1140.01" y="88.47" font-size="12.5" textLength="14.50" lengthAdjust="spacingAndGlyphs" fill="#444444" >10</text>
<text x="1116.57" y="290.2" font-size="12.5" textLength="15.06" lengthAdjust="spacingAndGlyphs" fill="#444444" >10</text>
<rect x="1133.00" y="280.20" width="5" height="1" fill="#444444"/>
<text x="1140.01" y="284.0" font-size="12.5" textLength="14.50" lengthAdjust="spacingAndGlyphs" fill="#444444" >10</text>
<text x="1116.57" y="152.34" font-size="12.5" textLength="15.06" lengthAdjust="spacingAndGlyphs" fill="#444444" >10</text>
<rect x="1133.00" y="142.34" width="5" height="1" fill="#444444"/>
<text x="1140.00" y="146.14" font-size="12.5" textLength="14.65" lengthAdjust="spacingAndGlyphs" fill="#444444" >11</text>
<text x="1116.57" y="347.5" font-size="12.5" textLength="15.06" lengthAdjust="spacingAndGlyphs" fill="#444444" >10</text>
<rect x="1133.00" y="337.50" width="5" height="1" fill="#444444"/>
<text x="1140.00" y="341.3" font-size="12.5" textLength="14.65" lengthAdjust="spacingAndGlyphs" fill="#444444" >11</text>
<text x="1116.57" y="210.01" font-size="12.5" textLength="15.06" lengthAdjust="spacingAndGlyphs" fill="#444444" >10</text>
<rect x="1133.00" y="200.01" width="5" height="1" fill="#444444"/>
<text x="1140.00" y="203.81" font-size="12.5" textLength="14.67" lengthAdjust="spacingAndGlyphs" fill="#444444" >12</text>
<text x="1116.57" y="404.8" font-size="12.5" textLength="15.06" lengthAdjust="spacingAndGlyphs" fill="#444444" >10</text>
<rect x="1133.00" y="394.80" width="5" height="1" fill="#444444"/>
<text x="1140.00" y="398.6" font-size="12.5" textLength="14.67" lengthAdjust="spacingAndGlyphs" fill="#444444" >12</text>
<rect x="1104" y="515" width="9" height="1" fill="#333333"/>
<rect x="1104" y="534" width="5" height="1" fill="#333333"/>
<rect x="1104" y="554" width="9" height="1" fill="#333333"/>
<rect x="1104" y="573" width="5" height="1" fill="#333333"/>
<rect x="1104" y="593" width="9" height="1" fill="#333333"/>
<rect x="1104" y="612" width="5" height="1" fill="#333333"/>
<rect x="1104" y="632" width="9" height="1" fill="#333333"/>
<rect x="1104" y="651" width="5" height="1" fill="#333333"/>
<rect x="1104" y="671" width="9" height="1" fill="#333333"/>
<rect x="1104" y="690" width="5" height="1" fill="#333333"/>
<text x="1116.57" y="523.0" font-size="12.5" textLength="15.06" lengthAdjust="spacingAndGlyphs" fill="#444444" >10</text>
<text x="1132.62" y="516.8" font-size="12.5" textLength="6.84" lengthAdjust="spacingAndGlyphs" fill="#444444" >4</text>
<text x="1116.57" y="561.9" font-size="12.5" textLength="15.06" lengthAdjust="spacingAndGlyphs" fill="#444444" >10</text>
<text x="1132.36" y="555.7" font-size="12.5" textLength="5.98" lengthAdjust="spacingAndGlyphs" fill="#444444" >2</text>
<text x="1116.57" y="600.8" font-size="12.5" textLength="15.06" lengthAdjust="spacingAndGlyphs" fill="#444444" >10</text>
<text x="1132.39" y="594.6" font-size="12.5" textLength="7.21" lengthAdjust="spacingAndGlyphs" fill="#444444" >0</text>
<text x="1116.57" y="639.7" font-size="12.5" textLength="15.06" lengthAdjust="spacingAndGlyphs" fill="#444444" >10</text>
<rect x="1133.00" y="629.70" width="5" height="1" fill="#444444"/>
<text x="1139.26" y="633.5" font-size="12.5" textLength="5.98" lengthAdjust="spacingAndGlyphs" fill="#444444" >2</text>
<text x="1116.57" y="678.6" font-size="12.5" textLength="15.06" lengthAdjust="spacingAndGlyphs" fill="#444444" >10</text>
<rect x="1133.00" y="668.60" width="5" height="1" fill="#444444"/>
<text x="1139.52" y="672.4" font-size="12.5" textLength="6.84" lengthAdjust="spacingAndGlyphs" fill="#444444" >4</text>
<text transform="translate(1164.5,62.63) rotate(90)" x="0" y="0" font-size="12.5" textLength="121.15" lengthAdjust="spacingAndGlyphs" fill="#444444">pressure dyne/cm^2</text>
<text transform="translate(1164.5,258.23) rotate(90)" x="0" y="0" font-size="12.5" textLength="121.25" lengthAdjust="spacingAndGlyphs" fill="#444444">pressure dyne/cm^2</text>
<text transform="translate(1155.5,517.40) rotate(90)" x="0" y="0" font-size="12.5" textLength="168.43" lengthAdjust="spacingAndGlyphs" fill="#444444">intensity 1/(s cm^2 ster keV)</text>
<text x="199.56" y="734" font-size="12.5" textLength="36.13" lengthAdjust="spacingAndGlyphs" fill="#444444" >03:00</text>
<text x="207.56" y="749" font-size="12.5" textLength="28.17" lengthAdjust="spacingAndGlyphs" fill="#444444" >0.25</text>
<text x="199.57" y="764" font-size="12.5" textLength="36.26" lengthAdjust="spacingAndGlyphs" fill="#444444" >34.91</text>
<text x="199.79" y="779" font-size="12.5" textLength="36.06" lengthAdjust="spacingAndGlyphs" fill="#444444" >49.02</text>
<text x="322.69" y="734" font-size="12.5" textLength="36.13" lengthAdjust="spacingAndGlyphs" fill="#444444" >06:00</text>
<text x="330.68" y="749" font-size="12.5" textLength="28.25" lengthAdjust="spacingAndGlyphs" fill="#444444" >0.29</text>
<text x="322.70" y="764" font-size="12.5" textLength="36.19" lengthAdjust="spacingAndGlyphs" fill="#444444" >35.26</text>
<text x="322.67" y="779" font-size="12.5" textLength="36.19" lengthAdjust="spacingAndGlyphs" fill="#444444" >50.55</text>
<text x="445.81" y="734" font-size="12.5" textLength="36.13" lengthAdjust="spacingAndGlyphs" fill="#444444" >09:00</text>
<text x="453.81" y="749" font-size="12.5" textLength="28.30" lengthAdjust="spacingAndGlyphs" fill="#444444" >0.32</text>
<text x="445.82" y="764" font-size="12.5" textLength="36.26" lengthAdjust="spacingAndGlyphs" fill="#444444" >35.61</text>
<text x="445.79" y="779" font-size="12.5" textLength="36.31" lengthAdjust="spacingAndGlyphs" fill="#444444" >52.12</text>
<text x="568.38" y="734" font-size="12.5" textLength="36.69" lengthAdjust="spacingAndGlyphs" fill="#444444" >12:00</text>
<text x="576.93" y="749" font-size="12.5" textLength="28.20" lengthAdjust="spacingAndGlyphs" fill="#444444" >0.36</text>
<text x="568.95" y="764" font-size="12.5" textLength="36.19" lengthAdjust="spacingAndGlyphs" fill="#444444" >35.96</text>
<text x="568.92" y="779" font-size="12.5" textLength="36.00" lengthAdjust="spacingAndGlyphs" fill="#444444" >53.74</text>
<text x="691.51" y="734" font-size="12.5" textLength="36.69" lengthAdjust="spacingAndGlyphs" fill="#444444" >15:00</text>
<text x="700.06" y="749" font-size="12.5" textLength="28.13" lengthAdjust="spacingAndGlyphs" fill="#444444" >0.40</text>
<text x="692.07" y="764" font-size="12.5" textLength="36.24" lengthAdjust="spacingAndGlyphs" fill="#444444" >36.29</text>
<text x="692.05" y="779" font-size="12.5" textLength="36.14" lengthAdjust="spacingAndGlyphs" fill="#444444" >55.40</text>
<text x="814.63" y="734" font-size="12.5" textLength="36.69" lengthAdjust="spacingAndGlyphs" fill="#444444" >18:00</text>
<text x="823.19" y="749" font-size="12.5" textLength="27.98" lengthAdjust="spacingAndGlyphs" fill="#444444" >0.44</text>
<text x="815.20" y="764" font-size="12.5" textLength="36.19" lengthAdjust="spacingAndGlyphs" fill="#444444" >36.63</text>
<text x="815.17" y="779" font-size="12.5" textLength="36.31" lengthAdjust="spacingAndGlyphs" fill="#444444" >57.12</text>
<text x="938.15" y="734" font-size="12.5" textLength="36.30" lengthAdjust="spacingAndGlyphs" fill="#444444" >21:00</text>
<text x="946.31" y="749" font-size="12.5" textLength="28.20" lengthAdjust="spacingAndGlyphs" fill="#444444" >0.48</text>
<text x="938.32" y="764" font-size="12.5" textLength="36.19" lengthAdjust="spacingAndGlyphs" fill="#444444" >36.96</text>
<text x="938.29" y="779" font-size="12.5" textLength="36.27" lengthAdjust="spacingAndGlyphs" fill="#444444" >58.89</text>
<text x="1061.44" y="734" font-size="12.5" textLength="36.13" lengthAdjust="spacingAndGlyphs" fill="#444444" >00:00</text>
<text x="1069.43" y="749" font-size="12.5" textLength="28.30" lengthAdjust="spacingAndGlyphs" fill="#444444" >0.52</text>
<text x="1061.45" y="764" font-size="12.5" textLength="36.18" lengthAdjust="spacingAndGlyphs" fill="#444444" >37.28</text>
<text x="1061.26" y="779" font-size="12.5" textLength="36.45" lengthAdjust="spacingAndGlyphs" fill="#444444" >60.71</text>
<text x="15.14" y="749" font-size="12.5" textLength="45.16" lengthAdjust="spacingAndGlyphs" fill="#444444" >LT (hrs)</text>
<text x="45.53" y="764" font-size="12.5" textLength="14.39" lengthAdjust="spacingAndGlyphs" fill="#444444" >Rs</text>
<text x="12.43" y="779" font-size="12.5" textLength="48.01" lengthAdjust="spacingAndGlyphs" fill="#444444" >Dipole L</text>
<text x="1061.76" y="746" font-size="12.5" textLength="61.88" lengthAdjust="spacingAndGlyphs" fill="#444444" >2014-043</text>
<rect x="215.5" y="802.5" width="151" height="148" fill="none" stroke="#333333" stroke-width="1"/>
<rect x="207" y="803" width="8" height="1" fill="#333333"/>
<rect x="211" y="804" width="4" height="1" fill="#333333"/>
<rect x="211" y="806" width="4" height="1" fill="#333333"/>
<rect x="211" y="808" width="4" height="1" fill="#333333"/>
<rect x="211" y="810" width="4" height="1" fill="#333333"/>
<rect x="211" y="812" width="4" height="1" fill="#333333"/>
<rect x="211" y="814" width="4" height="1" fill="#333333"/>
<rect x="211" y="815" width="4" height="1" fill="#333333"/>
<rect x="211" y="817" width="4" height="1" fill="#333333"/>
<rect x="211" y="819" width="4" height="1" fill="#333333"/>
<rect x="207" y="821" width="8" height="1" fill="#333333"/>
<rect x="211" y="823" width="4" height="1" fill="#333333"/>
<rect x="211" y="825" width="4" height="1" fill="#333333"/>
<rect x="211" y="826" width="4" height="1" fill="#333333"/>
<rect x="211" y="828" width="4" height="1" fill="#333333"/>
<rect x="211" y="830" width="4" height="1" fill="#333333"/>
<rect x="211" y="832" width="4" height="1" fill="#333333"/>
<rect x="211" y="834" width="4" height="1" fill="#333333"/>
<rect x="211" y="836" width="4" height="1" fill="#333333"/>
<rect x="211" y="837" width="4" height="1" fill="#333333"/>
<rect x="207" y="839" width="8" height="1" fill="#333333"/>
<rect x="211" y="841" width="4" height="1" fill="#333333"/>
<rect x="211" y="843" width="4" height="1" fill="#333333"/>
<rect x="211" y="845" width="4" height="1" fill="#333333"/>
<rect x="211" y="847" width="4" height="1" fill="#333333"/>
<rect x="211" y="848" width="4" height="1" fill="#333333"/>
<rect x="211" y="850" width="4" height="1" fill="#333333"/>
<rect x="211" y="852" width="4" height="1" fill="#333333"/>
<rect x="211" y="854" width="4" height="1" fill="#333333"/>
<rect x="211" y="856" width="4" height="1" fill="#333333"/>
<rect x="207" y="858" width="8" height="1" fill="#333333"/>
<rect x="211" y="859" width="4" height="1" fill="#333333"/>
<rect x="211" y="861" width="4" height="1" fill="#333333"/>
<rect x="211" y="863" width="4" height="1" fill="#333333"/>
<rect x="211" y="865" width="4" height="1" fill="#333333"/>
<rect x="211" y="867" width="4" height="1" fill="#333333"/>
<rect x="211" y="869" width="4" height="1" fill="#333333"/>
<rect x="211" y="870" width="4" height="1" fill="#333333"/>
<rect x="211" y="872" width="4" height="1" fill="#333333"/>
<rect x="211" y="874" width="4" height="1" fill="#333333"/>
<rect x="207" y="876" width="8" height="1" fill="#333333"/>
<rect x="211" y="878" width="4" height="1" fill="#333333"/>
<rect x="211" y="880" width="4" height="1" fill="#333333"/>
<rect x="211" y="882" width="4" height="1" fill="#333333"/>
<rect x="211" y="883" width="4" height="1" fill="#333333"/>
<rect x="211" y="885" width="4" height="1" fill="#333333"/>
<rect x="211" y="887" width="4" height="1" fill="#333333"/>
<rect x="211" y="889" width="4" height="1" fill="#333333"/>
<rect x="211" y="891" width="4" height="1" fill="#333333"/>
<rect x="211" y="893" width="4" height="1" fill="#333333"/>
<rect x="207" y="894" width="8" height="1" fill="#333333"/>
<rect x="211" y="896" width="4" height="1" fill="#333333"/>
<rect x="211" y="898" width="4" height="1" fill="#333333"/>
<rect x="211" y="900" width="4" height="1" fill="#333333"/>
<rect x="211" y="902" width="4" height="1" fill="#333333"/>
<rect x="211" y="904" width="4" height="1" fill="#333333"/>
<rect x="211" y="905" width="4" height="1" fill="#333333"/>
<rect x="211" y="907" width="4" height="1" fill="#333333"/>
<rect x="211" y="909" width="4" height="1" fill="#333333"/>
<rect x="211" y="911" width="4" height="1" fill="#333333"/>
<rect x="207" y="913" width="8" height="1" fill="#333333"/>
<rect x="211" y="915" width="4" height="1" fill="#333333"/>
<rect x="211" y="916" width="4" height="1" fill="#333333"/>
<rect x="211" y="918" width="4" height="1" fill="#333333"/>
<rect x="211" y="920" width="4" height="1" fill="#333333"/>
<rect x="211" y="922" width="4" height="1" fill="#333333"/>
<rect x="211" y="924" width="4" height="1" fill="#333333"/>
<rect x="211" y="926" width="4" height="1" fill="#333333"/>
<rect x="211" y="927" width="4" height="1" fill="#333333"/>
<rect x="211" y="929" width="4" height="1" fill="#333333"/>
<rect x="207" y="931" width="8" height="1" fill="#333333"/>
<rect x="211" y="933" width="4" height="1" fill="#333333"/>
<rect x="211" y="935" width="4" height="1" fill="#333333"/>
<rect x="211" y="937" width="4" height="1" fill="#333333"/>
<rect x="211" y="938" width="4" height="1" fill="#333333"/>
<rect x="211" y="940" width="4" height="1" fill="#333333"/>
<rect x="211" y="942" width="4" height="1" fill="#333333"/>
<rect x="211" y="944" width="4" height="1" fill="#333333"/>
<rect x="211" y="946" width="4" height="1" fill="#333333"/>
<rect x="211" y="948" width="4" height="1" fill="#333333"/>
<rect x="207" y="950" width="8" height="1" fill="#333333"/>
<text x="176.04" y="807.6" font-size="12.5" textLength="26.38" lengthAdjust="spacingAndGlyphs" fill="#444444" >−40.</text>
<text x="176.04" y="825.98" font-size="12.5" textLength="26.38" lengthAdjust="spacingAndGlyphs" fill="#444444" >−30.</text>
<text x="176.04" y="844.35" font-size="12.5" textLength="26.38" lengthAdjust="spacingAndGlyphs" fill="#444444" >−20.</text>
<text x="176.04" y="862.73" font-size="12.5" textLength="26.38" lengthAdjust="spacingAndGlyphs" fill="#444444" >−10.</text>
<text x="189.59" y="881.1" font-size="12.5" textLength="13.04" lengthAdjust="spacingAndGlyphs" fill="#444444" >0.</text>
<text x="181.02" y="899.48" font-size="12.5" textLength="21.60" lengthAdjust="spacingAndGlyphs" fill="#444444" >10.</text>
<text x="181.43" y="917.85" font-size="12.5" textLength="21.15" lengthAdjust="spacingAndGlyphs" fill="#444444" >20.</text>
<text x="181.63" y="936.23" font-size="12.5" textLength="20.95" lengthAdjust="spacingAndGlyphs" fill="#444444" >30.</text>
<text x="181.86" y="954.6" font-size="12.5" textLength="20.70" lengthAdjust="spacingAndGlyphs" fill="#444444" >40.</text>
<rect x="215" y="951" width="1" height="8" fill="#333333"/>
<rect x="234" y="951" width="1" height="4" fill="#333333"/>
<rect x="253" y="951" width="1" height="8" fill="#333333"/>
<rect x="272" y="951" width="1" height="4" fill="#333333"/>
<rect x="291" y="951" width="1" height="8" fill="#333333"/>
<rect x="309" y="951" width="1" height="4" fill="#333333"/>
<rect x="328" y="951" width="1" height="8" fill="#333333"/>
<rect x="347" y="951" width="1" height="4" fill="#333333"/>
<rect x="366" y="951" width="1" height="8" fill="#333333"/>
<text x="205.96" y="974" font-size="12.5" textLength="20.70" lengthAdjust="spacingAndGlyphs" fill="#444444" >40.</text>
<text x="243.28" y="974" font-size="12.5" textLength="21.15" lengthAdjust="spacingAndGlyphs" fill="#444444" >20.</text>
<text x="285.19" y="974" font-size="12.5" textLength="13.04" lengthAdjust="spacingAndGlyphs" fill="#444444" >0.</text>
<text x="316.14" y="974" font-size="12.5" textLength="26.38" lengthAdjust="spacingAndGlyphs" fill="#444444" >−20.</text>
<text x="353.89" y="974" font-size="12.5" textLength="26.38" lengthAdjust="spacingAndGlyphs" fill="#444444" >−40.</text>
<text x="270.77" y="992" font-size="12.5" textLength="38.56" lengthAdjust="spacingAndGlyphs" fill="#444444" >KSM−X</text>
<text transform="translate(167,896.12) rotate(-90)" x="0" y="0" font-size="12.5" textLength="38.37" lengthAdjust="spacingAndGlyphs" fill="#444444">KSM−Y</text>
<rect x="509.5" y="802.5" width="151" height="148" fill="none" stroke="#333333" stroke-width="1"/>
<rect x="501" y="803" width="8" height="1" fill="#333333"/>
<rect x="505" y="804" width="4" height="1" fill="#333333"/>
<rect x="505" y="806" width="4" height="1" fill="#333333"/>
<rect x="505" y="808" width="4" height="1" fill="#333333"/>
<rect x="505" y="810" width="4" height="1" fill="#333333"/>
<rect x="505" y="812" width="4" height="1" fill="#333333"/>
<rect x="505" y="814" width="4" height="1" fill="#333333"/>
<rect x="505" y="815" width="4" height="1" fill="#333333"/>
<rect x="505" y="817" width="4" height="1" fill="#333333"/>
<rect x="505" y="819" width="4" height="1" fill="#333333"/>
<rect x="501" y="821" width="8" height="1" fill="#333333"/>
<rect x="505" y="823" width="4" height="1" fill="#333333"/>
<rect x="505" y="825" width="4" height="1" fill="#333333"/>
<rect x="505" y="826" width="4" height="1" fill="#333333"/>
<rect x="505" y="828" width="4" height="1" fill="#333333"/>
<rect x="505" y="830" width="4" height="1" fill="#333333"/>
<rect x="505" y="832" width="4" height="1" fill="#333333"/>
<rect x="505" y="834" width="4" height="1" fill="#333333"/>
<rect x="505" y="836" width="4" height="1" fill="#333333"/>
<rect x="505" y="837" width="4" height="1" fill="#333333"/>
<rect x="501" y="839" width="8" height="1" fill="#333333"/>
<rect x="505" y="841" width="4" height="1" fill="#333333"/>
<rect x="505" y="843" width="4" height="1" fill="#333333"/>
<rect x="505" y="845" width="4" height="1" fill="#333333"/>
<rect x="505" y="847" width="4" height="1" fill="#333333"/>
<rect x="505" y="848" width="4" height="1" fill="#333333"/>
<rect x="505" y="850" width="4" height="1" fill="#333333"/>
<rect x="505" y="852" width="4" height="1" fill="#333333"/>
<rect x="505" y="854" width="4" height="1" fill="#333333"/>
<rect x="505" y="856" width="4" height="1" fill="#333333"/>
<rect x="501" y="858" width="8" height="1" fill="#333333"/>
<rect x="505" y="859" width="4" height="1" fill="#333333"/>
<rect x="505" y="861" width="4" height="1" fill="#333333"/>
<rect x="505" y="863" width="4" height="1" fill="#333333"/>
<rect x="505" y="865" width="4" height="1" fill="#333333"/>
<rect x="505" y="867" width="4" height="1" fill="#333333"/>
<rect x="505" y="869" width="4" height="1" fill="#333333"/>
<rect x="505" y="870" width="4" height="1" fill="#333333"/>
<rect x="505" y="872" width="4" height="1" fill="#333333"/>
<rect x="505" y="874" width="4" height="1" fill="#333333"/>
<rect x="501" y="876" width="8" height="1" fill="#333333"/>
<rect x="505" y="878" width="4" height="1" fill="#333333"/>
<rect x="505" y="880" width="4" height="1" fill="#333333"/>
<rect x="505" y="882" width="4" height="1" fill="#333333"/>
<rect x="505" y="883" width="4" height="1" fill="#333333"/>
<rect x="505" y="885" width="4" height="1" fill="#333333"/>
<rect x="505" y="887" width="4" height="1" fill="#333333"/>
<rect x="505" y="889" width="4" height="1" fill="#333333"/>
<rect x="505" y="891" width="4" height="1" fill="#333333"/>
<rect x="505" y="893" width="4" height="1" fill="#333333"/>
<rect x="501" y="894" width="8" height="1" fill="#333333"/>
<rect x="505" y="896" width="4" height="1" fill="#333333"/>
<rect x="505" y="898" width="4" height="1" fill="#333333"/>
<rect x="505" y="900" width="4" height="1" fill="#333333"/>
<rect x="505" y="902" width="4" height="1" fill="#333333"/>
<rect x="505" y="904" width="4" height="1" fill="#333333"/>
<rect x="505" y="905" width="4" height="1" fill="#333333"/>
<rect x="505" y="907" width="4" height="1" fill="#333333"/>
<rect x="505" y="909" width="4" height="1" fill="#333333"/>
<rect x="505" y="911" width="4" height="1" fill="#333333"/>
<rect x="501" y="913" width="8" height="1" fill="#333333"/>
<rect x="505" y="915" width="4" height="1" fill="#333333"/>
<rect x="505" y="916" width="4" height="1" fill="#333333"/>
<rect x="505" y="918" width="4" height="1" fill="#333333"/>
<rect x="505" y="920" width="4" height="1" fill="#333333"/>
<rect x="505" y="922" width="4" height="1" fill="#333333"/>
<rect x="505" y="924" width="4" height="1" fill="#333333"/>
<rect x="505" y="926" width="4" height="1" fill="#333333"/>
<rect x="505" y="927" width="4" height="1" fill="#333333"/>
<rect x="505" y="929" width="4" height="1" fill="#333333"/>
<rect x="501" y="931" width="8" height="1" fill="#333333"/>
<rect x="505" y="933" width="4" height="1" fill="#333333"/>
<rect x="505" y="935" width="4" height="1" fill="#333333"/>
<rect x="505" y="937" width="4" height="1" fill="#333333"/>
<rect x="505" y="938" width="4" height="1" fill="#333333"/>
<rect x="505" y="940" width="4" height="1" fill="#333333"/>
<rect x="505" y="942" width="4" height="1" fill="#333333"/>
<rect x="505" y="944" width="4" height="1" fill="#333333"/>
<rect x="505" y="946" width="4" height="1" fill="#333333"/>
<rect x="505" y="948" width="4" height="1" fill="#333333"/>
<rect x="501" y="950" width="8" height="1" fill="#333333"/>
<text x="475.86" y="807.6" font-size="12.5" textLength="20.70" lengthAdjust="spacingAndGlyphs" fill="#444444" >40.</text>
<text x="475.63" y="825.98" font-size="12.5" textLength="20.95" lengthAdjust="spacingAndGlyphs" fill="#444444" >30.</text>
<text x="475.43" y="844.35" font-size="12.5" textLength="21.15" lengthAdjust="spacingAndGlyphs" fill="#444444" >20.</text>
<text x="475.02" y="862.73" font-size="12.5" textLength="21.60" lengthAdjust="spacingAndGlyphs" fill="#444444" >10.</text>
<text x="483.59" y="881.1" font-size="12.5" textLength="13.04" lengthAdjust="spacingAndGlyphs" fill="#444444" >0.</text>
<text x="470.04" y="899.48" font-size="12.5" textLength="26.38" lengthAdjust="spacingAndGlyphs" fill="#444444" >−10.</text>
<text x="470.04" y="917.85" font-size="12.5" textLength="26.38" lengthAdjust="spacingAndGlyphs" fill="#444444" >−20.</text>
<text x="470.04" y="936.23" font-size="12.5" textLength="26.38" lengthAdjust="spacingAndGlyphs" fill="#444444" >−30.</text>
<text x="470.04" y="954.6" font-size="12.5" textLength="26.38" lengthAdjust="spacingAndGlyphs" fill="#444444" >−40.</text>
<rect x="509" y="951" width="1" height="8" fill="#333333"/>
<rect x="528" y="951" width="1" height="4" fill="#333333"/>
<rect x="547" y="951" width="1" height="8" fill="#333333"/>
<rect x="566" y="951" width="1" height="4" fill="#333333"/>
<rect x="585" y="951" width="1" height="8" fill="#333333"/>
<rect x="603" y="951" width="1" height="4" fill="#333333"/>
<rect x="622" y="951" width="1" height="8" fill="#333333"/>
<rect x="641" y="951" width="1" height="4" fill="#333333"/>
<rect x="660" y="951" width="1" height="8" fill="#333333"/>
<text x="499.96" y="974" font-size="12.5" textLength="20.70" lengthAdjust="spacingAndGlyphs" fill="#444444" >40.</text>
<text x="537.28" y="974" font-size="12.5" textLength="21.15" lengthAdjust="spacingAndGlyphs" fill="#444444" >20.</text>
<text x="579.19" y="974" font-size="12.5" textLength="13.04" lengthAdjust="spacingAndGlyphs" fill="#444444" >0.</text>
<text x="610.14" y="974" font-size="12.5" textLength="26.38" lengthAdjust="spacingAndGlyphs" fill="#444444" >−20.</text>
<text x="647.89" y="974" font-size="12.5" textLength="26.38" lengthAdjust="spacingAndGlyphs" fill="#444444" >−40.</text>
<text x="564.77" y="992" font-size="12.5" textLength="38.56" lengthAdjust="spacingAndGlyphs" fill="#444444" >KSM−X</text>
<text transform="translate(461,896.14) rotate(-90)" x="0" y="0" font-size="12.5" textLength="38.50" lengthAdjust="spacingAndGlyphs" fill="#444444">KSM−Z</text>
<rect x="803.5" y="802.5" width="151" height="148" fill="none" stroke="#333333" stroke-width="1"/>
<rect x="795" y="803" width="8" height="1" fill="#333333"/>
<rect x="799" y="804" width="4" height="1" fill="#333333"/>
<rect x="799" y="806" width="4" height="1" fill="#333333"/>
<rect x="799" y="808" width="4" height="1" fill="#333333"/>
<rect x="799" y="810" width="4" height="1" fill="#333333"/>
<rect x="799" y="812" width="4" height="1" fill="#333333"/>
<rect x="799" y="814" width="4" height="1" fill="#333333"/>
<rect x="799" y="815" width="4" height="1" fill="#333333"/>
<rect x="799" y="817" width="4" height="1" fill="#333333"/>
<rect x="799" y="819" width="4" height="1" fill="#333333"/>
<rect x="795" y="821" width="8" height="1" fill="#333333"/>
<rect x="799" y="823" width="4" height="1" fill="#333333"/>
<rect x="799" y="825" width="4" height="1" fill="#333333"/>
<rect x="799" y="826" width="4" height="1" fill="#333333"/>
<rect x="799" y="828" width="4" height="1" fill="#333333"/>
<rect x="799" y="830" width="4" height="1" fill="#333333"/>
<rect x="799" y="832" width="4" height="1" fill="#333333"/>
<rect x="799" y="834" width="4" height="1" fill="#333333"/>
<rect x="799" y="836" width="4" height="1" fill="#333333"/>
<rect x="799" y="837" width="4" height="1" fill="#333333"/>
<rect x="795" y="839" width="8" height="1" fill="#333333"/>
<rect x="799" y="841" width="4" height="1" fill="#333333"/>
<rect x="799" y="843" width="4" height="1" fill="#333333"/>
<rect x="799" y="845" width="4" height="1" fill="#333333"/>
<rect x="799" y="847" width="4" height="1" fill="#333333"/>
<rect x="799" y="848" width="4" height="1" fill="#333333"/>
<rect x="799" y="850" width="4" height="1" fill="#333333"/>
<rect x="799" y="852" width="4" height="1" fill="#333333"/>
<rect x="799" y="854" width="4" height="1" fill="#333333"/>
<rect x="799" y="856" width="4" height="1" fill="#333333"/>
<rect x="795" y="858" width="8" height="1" fill="#333333"/>
<rect x="799" y="859" width="4" height="1" fill="#333333"/>
<rect x="799" y="861" width="4" height="1" fill="#333333"/>
<rect x="799" y="863" width="4" height="1" fill="#333333"/>
<rect x="799" y="865" width="4" height="1" fill="#333333"/>
<rect x="799" y="867" width="4" height="1" fill="#333333"/>
<rect x="799" y="869" width="4" height="1" fill="#333333"/>
<rect x="799" y="870" width="4" height="1" fill="#333333"/>
<rect x="799" y="872" width="4" height="1" fill="#333333"/>
<rect x="799" y="874" width="4" height="1" fill="#333333"/>
<rect x="795" y="876" width="8" height="1" fill="#333333"/>
<rect x="799" y="878" width="4" height="1" fill="#333333"/>
<rect x="799" y="880" width="4" height="1" fill="#333333"/>
<rect x="799" y="882" width="4" height="1" fill="#333333"/>
<rect x="799" y="883" width="4" height="1" fill="#333333"/>
<rect x="799" y="885" width="4" height="1" fill="#333333"/>
<rect x="799" y="887" width="4" height="1" fill="#333333"/>
<rect x="799" y="889" width="4" height="1" fill="#333333"/>
<rect x="799" y="891" width="4" height="1" fill="#333333"/>
<rect x="799" y="893" width="4" height="1" fill="#333333"/>
<rect x="795" y="894" width="8" height="1" fill="#333333"/>
<rect x="799" y="896" width="4" height="1" fill="#333333"/>
<rect x="799" y="898" width="4" height="1" fill="#333333"/>
<rect x="799" y="900" width="4" height="1" fill="#333333"/>
<rect x="799" y="902" width="4" height="1" fill="#333333"/>
<rect x="799" y="904" width="4" height="1" fill="#333333"/>
<rect x="799" y="905" width="4" height="1" fill="#333333"/>
<rect x="799" y="907" width="4" height="1" fill="#333333"/>
<rect x="799" y="909" width="4" height="1" fill="#333333"/>
<rect x="799" y="911" width="4" height="1" fill="#333333"/>
<rect x="795" y="913" width="8" height="1" fill="#333333"/>
<rect x="799" y="915" width="4" height="1" fill="#333333"/>
<rect x="799" y="916" width="4" height="1" fill="#333333"/>
<rect x="799" y="918" width="4" height="1" fill="#333333"/>
<rect x="799" y="920" width="4" height="1" fill="#333333"/>
<rect x="799" y="922" width="4" height="1" fill="#333333"/>
<rect x="799" y="924" width="4" height="1" fill="#333333"/>
<rect x="799" y="926" width="4" height="1" fill="#333333"/>
<rect x="799" y="927" width="4" height="1" fill="#333333"/>
<rect x="799" y="929" width="4" height="1" fill="#333333"/>
<rect x="795" y="931" width="8" height="1" fill="#333333"/>
<rect x="799" y="933" width="4" height="1" fill="#333333"/>
<rect x="799" y="935" width="4" height="1" fill="#333333"/>
<rect x="799" y="937" width="4" height="1" fill="#333333"/>
<rect x="799" y="938" width="4" height="1" fill="#333333"/>
<rect x="799" y="940" width="4" height="1" fill="#333333"/>
<rect x="799" y="942" width="4" height="1" fill="#333333"/>
<rect x="799" y="944" width="4" height="1" fill="#333333"/>
<rect x="799" y="946" width="4" height="1" fill="#333333"/>
<rect x="799" y="948" width="4" height="1" fill="#333333"/>
<rect x="795" y="950" width="8" height="1" fill="#333333"/>
<text x="769.86" y="807.6" font-size="12.5" textLength="20.70" lengthAdjust="spacingAndGlyphs" fill="#444444" >40.</text>
<text x="769.63" y="825.98" font-size="12.5" textLength="20.95" lengthAdjust="spacingAndGlyphs" fill="#444444" >30.</text>
<text x="769.43" y="844.35" font-size="12.5" textLength="21.15" lengthAdjust="spacingAndGlyphs" fill="#444444" >20.</text>
<text x="769.02" y="862.73" font-size="12.5" textLength="21.60" lengthAdjust="spacingAndGlyphs" fill="#444444" >10.</text>
<text x="777.59" y="881.1" font-size="12.5" textLength="13.04" lengthAdjust="spacingAndGlyphs" fill="#444444" >0.</text>
<text x="764.04" y="899.48" font-size="12.5" textLength="26.38" lengthAdjust="spacingAndGlyphs" fill="#444444" >−10.</text>
<text x="764.04" y="917.85" font-size="12.5" textLength="26.38" lengthAdjust="spacingAndGlyphs" fill="#444444" >−20.</text>
<text x="764.04" y="936.23" font-size="12.5" textLength="26.38" lengthAdjust="spacingAndGlyphs" fill="#444444" >−30.</text>
<text x="764.04" y="954.6" font-size="12.5" textLength="26.38" lengthAdjust="spacingAndGlyphs" fill="#444444" >−40.</text>
<rect x="803" y="951" width="1" height="8" fill="#333333"/>
<rect x="822" y="951" width="1" height="4" fill="#333333"/>
<rect x="841" y="951" width="1" height="8" fill="#333333"/>
<rect x="860" y="951" width="1" height="4" fill="#333333"/>
<rect x="879" y="951" width="1" height="8" fill="#333333"/>
<rect x="897" y="951" width="1" height="4" fill="#333333"/>
<rect x="916" y="951" width="1" height="8" fill="#333333"/>
<rect x="935" y="951" width="1" height="4" fill="#333333"/>
<rect x="954" y="951" width="1" height="8" fill="#333333"/>
<text x="790.89" y="974" font-size="12.5" textLength="26.38" lengthAdjust="spacingAndGlyphs" fill="#444444" >−40.</text>
<text x="828.64" y="974" font-size="12.5" textLength="26.38" lengthAdjust="spacingAndGlyphs" fill="#444444" >−20.</text>
<text x="873.19" y="974" font-size="12.5" textLength="13.04" lengthAdjust="spacingAndGlyphs" fill="#444444" >0.</text>
<text x="906.78" y="974" font-size="12.5" textLength="21.15" lengthAdjust="spacingAndGlyphs" fill="#444444" >20.</text>
<text x="944.96" y="974" font-size="12.5" textLength="20.70" lengthAdjust="spacingAndGlyphs" fill="#444444" >40.</text>
<text x="858.77" y="992" font-size="12.5" textLength="38.57" lengthAdjust="spacingAndGlyphs" fill="#444444" >KSM−Y</text>
<text transform="translate(755,896.14) rotate(-90)" x="0" y="0" font-size="12.5" textLength="38.50" lengthAdjust="spacingAndGlyphs" fill="#444444">KSM−Z</text>
<clipPath id="oc1"><rect x="216" y="803" width="150" height="147"/></clipPath>
<clipPath id="oc2"><rect x="510" y="803" width="150" height="147"/></clipPath>
<g clip-path="url(#oc1)">
<path d="M249.60 801.60 L248.40 803.48 L247.22 805.35 L246.08 807.23 L244.96 809.10 L243.88 810.98 L242.83 812.85 L241.81 814.73 L240.82 816.60 L239.86 818.48 L238.92 820.35 L238.03 822.23 L237.16 824.10 L236.32 825.98 L235.51 827.85 L234.73 829.73 L233.98 831.60 L233.27 833.48 L232.58 835.35 L231.93 837.23 L231.30 839.10 L230.71 840.98 L230.14 842.85 L229.61 844.73 L229.10 846.60 L228.63 848.48 L228.19 850.35 L227.78 852.23 L227.40 854.10 L227.05 855.98 L226.72 857.85 L226.44 859.73 L226.18 861.60 L225.95 863.48 L225.75 865.35 L225.58 867.23 L225.44 869.10 L225.34 870.98 L225.26 872.85 L225.22 874.73 L225.20 876.60 L225.22 878.48 L225.26 880.35 L225.34 882.23 L225.44 884.10 L225.58 885.98 L225.75 887.85 L225.95 889.73 L226.18 891.60 L226.44 893.48 L226.72 895.35 L227.05 897.23 L227.40 899.10 L227.78 900.98 L228.19 902.85 L228.63 904.73 L229.10 906.60 L229.61 908.48 L230.14 910.35 L230.71 912.23 L231.30 914.10 L231.93 915.98 L232.58 917.85 L233.27 919.73 L233.98 921.60 L234.73 923.48 L235.51 925.35 L236.32 927.23 L237.16 929.10 L238.03 930.98 L238.92 932.85 L239.86 934.73 L240.82 936.60 L241.81 938.48 L242.83 940.35 L243.88 942.23 L244.96 944.10 L246.08 945.98 L247.22 947.85 L248.40 949.73 L249.60 951.60" fill="none" stroke="#0000ff" stroke-width="1.25" stroke-dasharray="3 1" shape-rendering="auto"/>
<path d="M284.80 801.60 L282.54 803.48 L280.35 805.35 L278.23 807.23 L276.16 809.10 L274.17 810.98 L272.24 812.85 L270.37 814.73 L268.57 816.60 L266.83 818.48 L265.15 820.35 L263.54 822.23 L261.99 824.10 L260.50 825.98 L259.07 827.85 L257.71 829.73 L256.40 831.60 L255.16 833.48 L253.98 835.35 L252.86 837.23 L251.80 839.10 L250.80 840.98 L249.85 842.85 L248.97 844.73 L248.14 846.60 L247.37 848.48 L246.66 850.35 L246.00 852.23 L245.40 854.10 L244.85 855.98 L244.36 857.85 L243.92 859.73 L243.54 861.60 L243.20 863.48 L242.92 865.35 L242.69 867.23 L242.50 869.10 L242.36 870.98 L242.27 872.85 L242.22 874.73 L242.20 876.60 L242.22 878.48 L242.27 880.35 L242.36 882.23 L242.50 884.10 L242.69 885.98 L242.92 887.85 L243.20 889.73 L243.54 891.60 L243.92 893.48 L244.36 895.35 L244.85 897.23 L245.40 899.10 L246.00 900.98 L246.66 902.85 L247.37 904.73 L248.14 906.60 L248.97 908.48 L249.85 910.35 L250.80 912.23 L251.80 914.10 L252.86 915.98 L253.98 917.85 L255.16 919.73 L256.40 921.60 L257.71 923.48 L259.07 925.35 L260.50 927.23 L261.99 929.10 L263.54 930.98 L265.15 932.85 L266.83 934.73 L268.57 936.60 L270.37 938.48 L272.24 940.35 L274.17 942.23 L276.16 944.10 L278.23 945.98 L280.35 947.85 L282.54 949.73 L284.80 951.60" fill="none" stroke="#7a4010" stroke-width="1.25" stroke-dasharray="3 1.2" shape-rendering="auto"/>
</g>
<ellipse cx="291.9" cy="877.6" rx="35.4" ry="37.4" fill="none" stroke="#000" stroke-width="1.3" shape-rendering="auto"/>
<ellipse cx="291.5" cy="876.8" rx="1.8" ry="1.5" fill="none" stroke="#000" stroke-width="1" shape-rendering="auto"/>
<path d="M331.2 835.2 A32.56 32.56 0 0 1 326.5 893" fill="none" stroke="#000" stroke-width="1.3" shape-rendering="auto"/>
<circle cx="326.5" cy="867.8" r="2.2" fill="#ff0000" shape-rendering="auto"/>
<path d="M345 856.5 L347 863" stroke="#0000ff" stroke-width="5" stroke-linecap="round" shape-rendering="auto"/>
<path d="M342 860 L351 868.5 M351 860 L342 868.5" stroke="#ff2020" stroke-width="1.2" shape-rendering="auto"/>
<g clip-path="url(#oc2)">
<path d="M543.80 801.60 L542.60 803.48 L541.42 805.35 L540.28 807.23 L539.16 809.10 L538.08 810.98 L537.03 812.85 L536.01 814.73 L535.02 816.60 L534.06 818.48 L533.12 820.35 L532.23 822.23 L531.36 824.10 L530.52 825.98 L529.71 827.85 L528.93 829.73 L528.18 831.60 L527.47 833.48 L526.78 835.35 L526.13 837.23 L525.50 839.10 L524.91 840.98 L524.34 842.85 L523.81 844.73 L523.30 846.60 L522.83 848.48 L522.39 850.35 L521.98 852.23 L521.60 854.10 L521.25 855.98 L520.92 857.85 L520.64 859.73 L520.38 861.60 L520.15 863.48 L519.95 865.35 L519.78 867.23 L519.64 869.10 L519.54 870.98 L519.46 872.85 L519.42 874.73 L519.40 876.60 L519.42 878.48 L519.46 880.35 L519.54 882.23 L519.64 884.10 L519.78 885.98 L519.95 887.85 L520.15 889.73 L520.38 891.60 L520.64 893.48 L520.92 895.35 L521.25 897.23 L521.60 899.10 L521.98 900.98 L522.39 902.85 L522.83 904.73 L523.30 906.60 L523.81 908.48 L524.34 910.35 L524.91 912.23 L525.50 914.10 L526.13 915.98 L526.78 917.85 L527.47 919.73 L528.18 921.60 L528.93 923.48 L529.71 925.35 L530.52 927.23 L531.36 929.10 L532.23 930.98 L533.12 932.85 L534.06 934.73 L535.02 936.60 L536.01 938.48 L537.03 940.35 L538.08 942.23 L539.16 944.10 L540.28 945.98 L541.42 947.85 L542.60 949.73 L543.80 951.60" fill="none" stroke="#0000ff" stroke-width="1.25" stroke-dasharray="3 1" shape-rendering="auto"/>
<path d="M579.00 801.60 L576.74 803.48 L574.55 805.35 L572.43 807.23 L570.36 809.10 L568.37 810.98 L566.44 812.85 L564.57 814.73 L562.77 816.60 L561.03 818.48 L559.35 820.35 L557.74 822.23 L556.19 824.10 L554.70 825.98 L553.27 827.85 L551.91 829.73 L550.60 831.60 L549.36 833.48 L548.18 835.35 L547.06 837.23 L546.00 839.10 L545.00 840.98 L544.05 842.85 L543.17 844.73 L542.34 846.60 L541.57 848.48 L540.86 850.35 L540.20 852.23 L539.60 854.10 L539.05 855.98 L538.56 857.85 L538.12 859.73 L537.74 861.60 L537.40 863.48 L537.12 865.35 L536.89 867.23 L536.70 869.10 L536.56 870.98 L536.47 872.85 L536.42 874.73 L536.40 876.60 L536.42 878.48 L536.47 880.35 L536.56 882.23 L536.70 884.10 L536.89 885.98 L537.12 887.85 L537.40 889.73 L537.74 891.60 L538.12 893.48 L538.56 895.35 L539.05 897.23 L539.60 899.10 L540.20 900.98 L540.86 902.85 L541.57 904.73 L542.34 906.60 L543.17 908.48 L544.05 910.35 L545.00 912.23 L546.00 914.10 L547.06 915.98 L548.18 917.85 L549.36 919.73 L550.60 921.60 L551.91 923.48 L553.27 925.35 L554.70 927.23 L556.19 929.10 L557.74 930.98 L559.35 932.85 L561.03 934.73 L562.77 936.60 L564.57 938.48 L566.44 940.35 L568.37 942.23 L570.36 944.10 L572.43 945.98 L574.55 947.85 L576.74 949.73 L579.00 951.60" fill="none" stroke="#7a4010" stroke-width="1.25" stroke-dasharray="3 1.2" shape-rendering="auto"/>
</g>
<path d="M550.6 890.3 L618.9 864.6" stroke="#000" stroke-width="1.7" shape-rendering="auto"/>
<path d="M581.5 877 L585.5 874.5 L589.5 876.5 L585.5 879 Z" fill="none" stroke="#000" stroke-width="1" shape-rendering="auto"/>
<circle cx="620.3" cy="864.1" r="2.3" fill="#ff0000" shape-rendering="auto"/>
<path d="M625.3 816.4 A42.55 42.55 0 0 1 620.3 885.2" fill="none" stroke="#000" stroke-width="1.3" shape-rendering="auto"/>
<path d="M639.5 838.5 L640.5 845" stroke="#0000ff" stroke-width="5" stroke-linecap="round" shape-rendering="auto"/>
<path d="M636 841 L645 849.5 M645 841 L636 849.5" stroke="#ff2020" stroke-width="1.2" shape-rendering="auto"/>
<ellipse cx="880.5" cy="876.6" rx="38.2" ry="13.0" fill="none" stroke="#000" stroke-width="1.5" shape-rendering="auto"/>
<ellipse cx="879.4" cy="877.1" rx="1.8" ry="1.5" fill="none" stroke="#000" stroke-width="1" shape-rendering="auto"/>
<circle cx="870.1" cy="863.9" r="2.3" fill="#ff0000" shape-rendering="auto"/>
<path d="M837.2 816.3 A303.40 303.40 0 0 1 895.8 884.8" fill="none" stroke="#000" stroke-width="1.2" shape-rendering="auto"/>
<path d="M859.5 838 L866.5 845.5" stroke="#0000ff" stroke-width="4.5" stroke-linecap="round" shape-rendering="auto"/>
<path d="M862 850 L871 841 M862 841 L871 850" stroke="#ff2020" stroke-width="1.2" shape-rendering="auto"/>
</svg></body></html>
